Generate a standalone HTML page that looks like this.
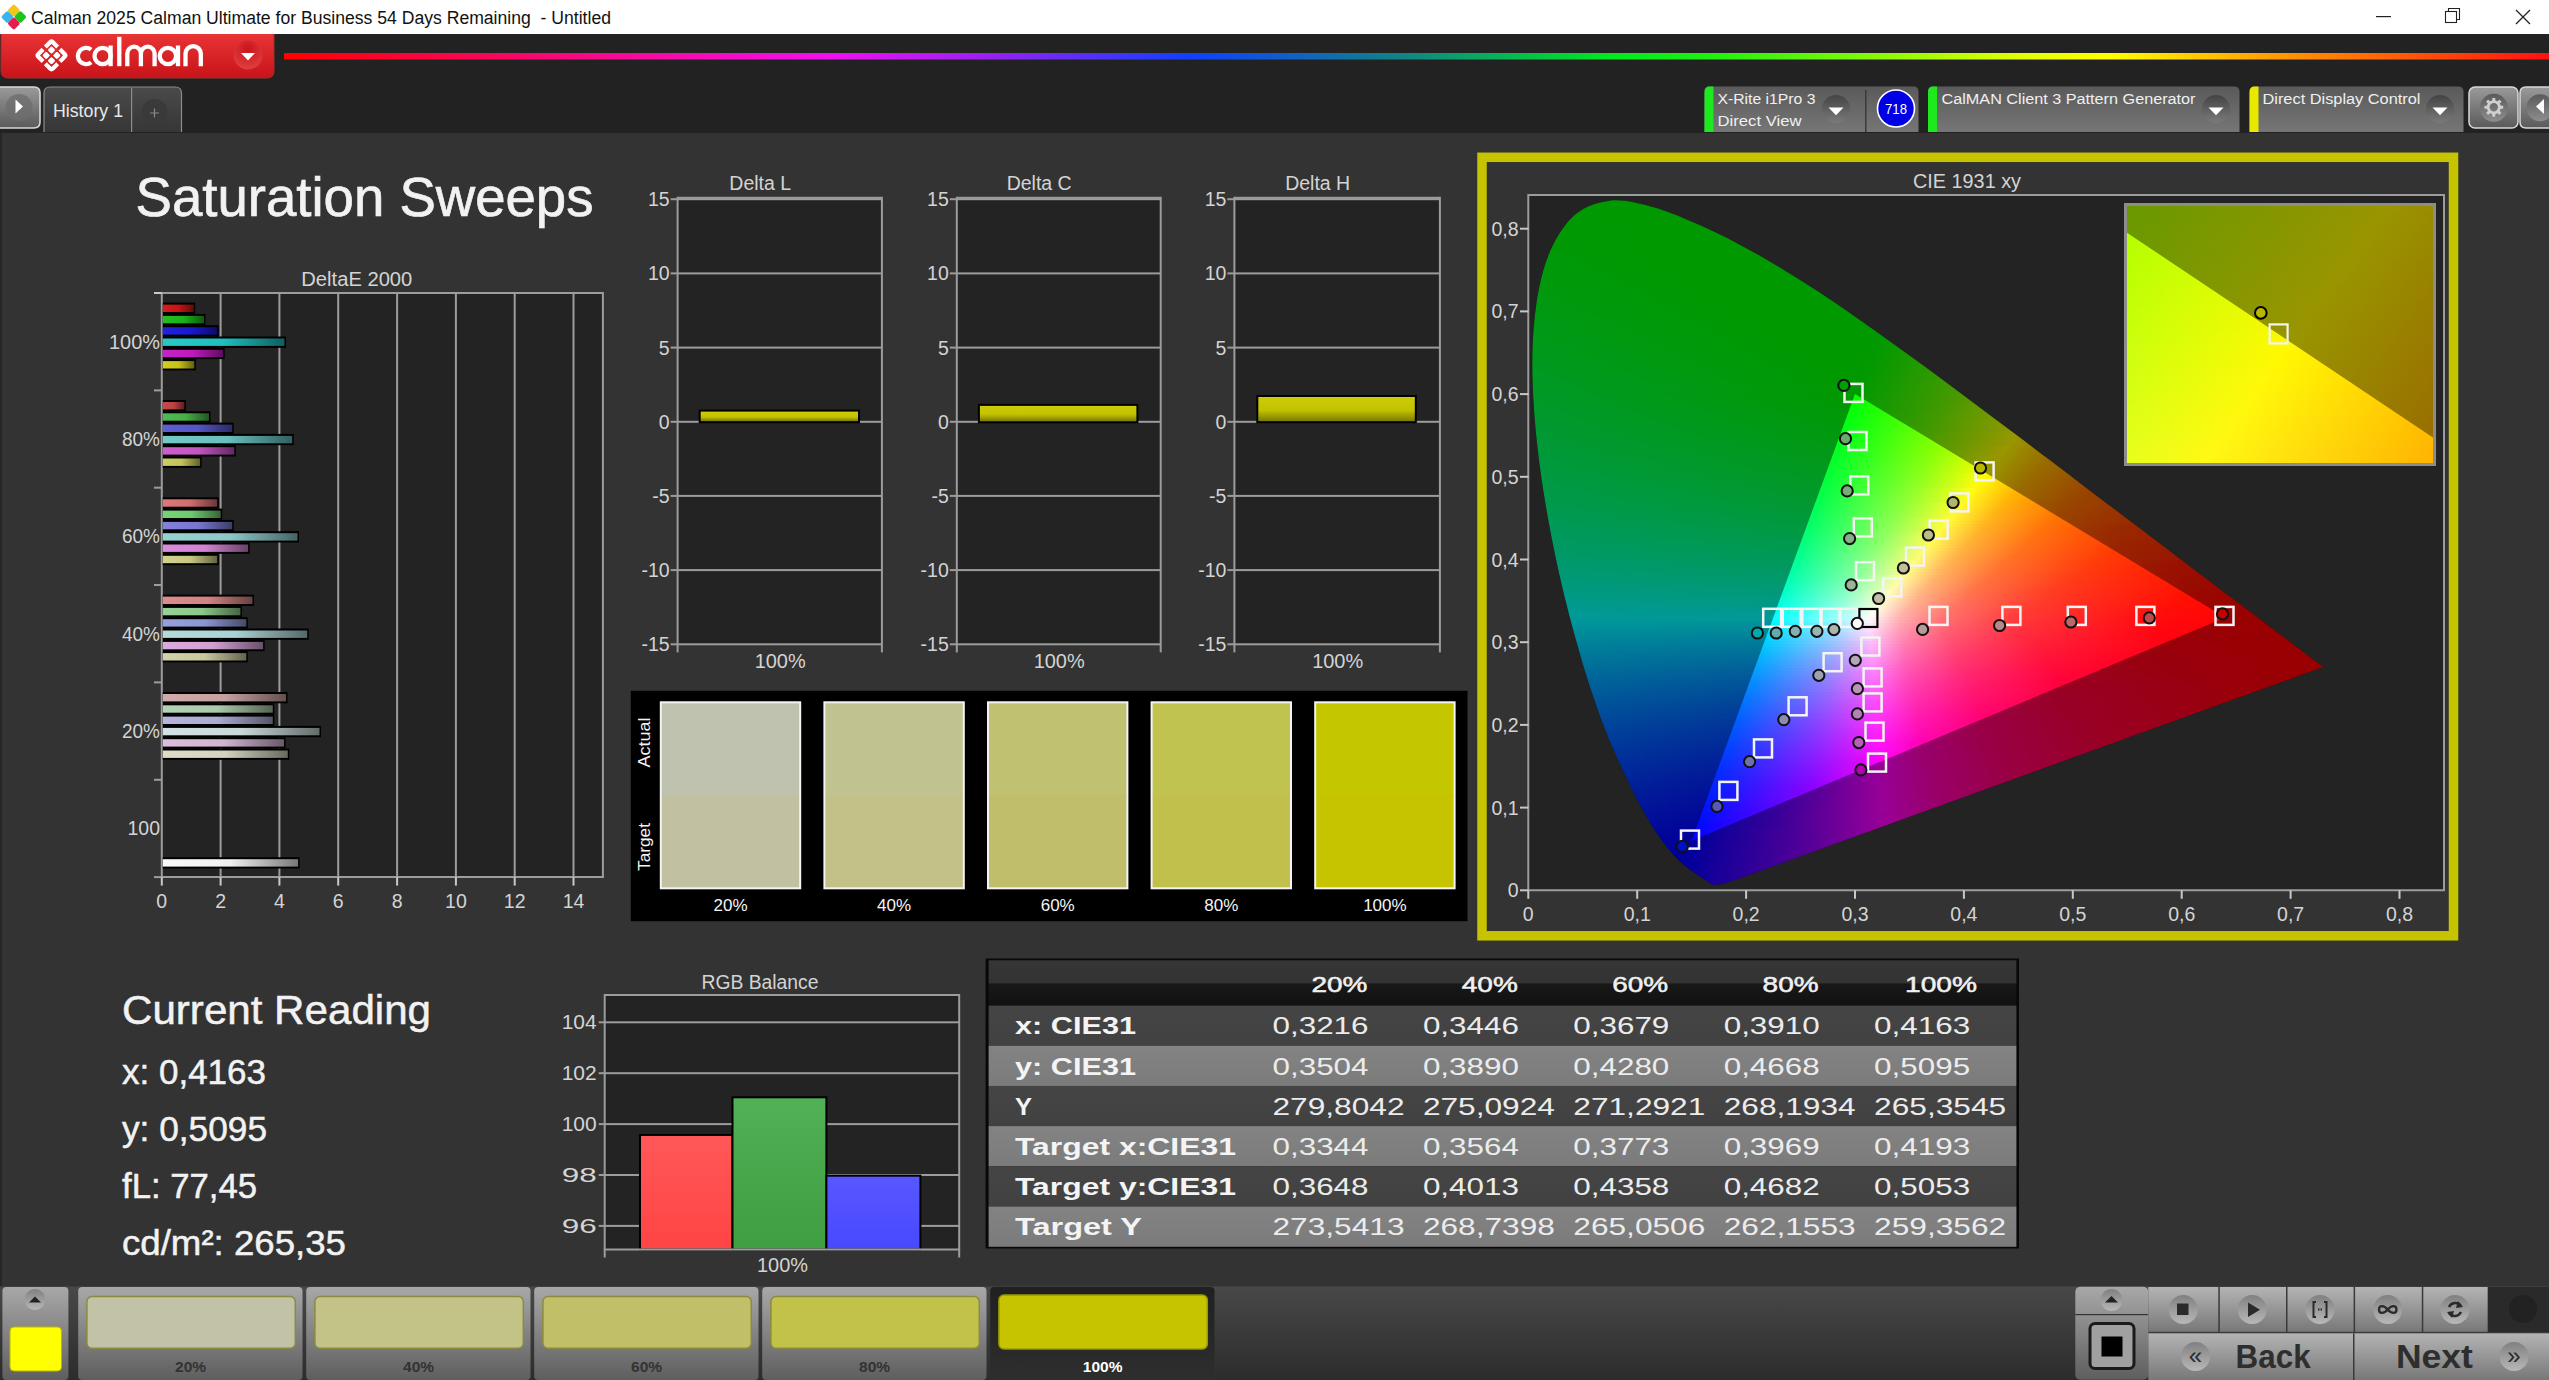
<!DOCTYPE html><html><head><meta charset="utf-8"><style>html,body{margin:0;padding:0;background:#333;overflow:hidden}svg{display:block}text{font-family:"Liberation Sans",sans-serif}</style></head><body><svg width="2549" height="1380" viewBox="0 0 2549 1380" font-family="Liberation Sans, sans-serif"><defs><linearGradient id="redg" x1="0" y1="0" x2="0" y2="1"><stop offset="0" stop-color="#e83434"/><stop offset="1" stop-color="#c8141a"/></linearGradient>
<radialGradient id="redbtn" cx=".5" cy=".3" r=".7"><stop offset="0" stop-color="#c8141a"/><stop offset="1" stop-color="#e04040"/></radialGradient>
<linearGradient id="rainbow" gradientUnits="userSpaceOnUse" x1="284" x2="2549" y1="0" y2="0"><stop offset="0" stop-color="#ff0000"/><stop offset="0.24" stop-color="#f010f0"/><stop offset="0.31" stop-color="#9a20f0"/><stop offset="0.40" stop-color="#1040ff"/><stop offset="0.49" stop-color="#10808a"/><stop offset="0.585" stop-color="#00e820"/><stop offset="0.63" stop-color="#20f010"/><stop offset="0.765" stop-color="#e0ff00"/><stop offset="0.805" stop-color="#ffff00"/><stop offset="0.88" stop-color="#ff9900"/><stop offset="1" stop-color="#ff1010"/></linearGradient>
<linearGradient id="gbtn" x1="0" y1="0" x2="0" y2="1"><stop offset="0" stop-color="#9a9a9a"/><stop offset="1" stop-color="#5a5a5a"/></linearGradient>
<radialGradient id="cbtn" cx=".5" cy=".35" r=".6"><stop offset="0" stop-color="#7a7a7a"/><stop offset="1" stop-color="#555"/></radialGradient>
<linearGradient id="tabg" x1="0" y1="0" x2="0" y2="1"><stop offset="0" stop-color="#4a4a4a"/><stop offset="1" stop-color="#363636"/></linearGradient>
<linearGradient id="pang" x1="0" y1="0" x2="0" y2="1"><stop offset="0" stop-color="#5a5a5a"/><stop offset="1" stop-color="#767676"/></linearGradient>
<linearGradient id="ddg" x1="0" x2="0" y1="0" y2="1"><stop offset="0" stop-color="#444"/><stop offset="1" stop-color="#7a7a7a"/></linearGradient>
<linearGradient id="ddg2" x1="0" x2="0" y1="0" y2="1"><stop offset="0" stop-color="#5a5a5a"/><stop offset="1" stop-color="#8e8e8e"/></linearGradient>
<linearGradient id="b0" x1="0" x2="1" y1="0" y2="0"><stop offset="0" stop-color="rgb(210, 30, 30)"/><stop offset=".5" stop-color="rgb(200, 20, 20)"/><stop offset="1" stop-color="rgb(100, 10, 10)"/></linearGradient>
<linearGradient id="b1" x1="0" x2="1" y1="0" y2="0"><stop offset="0" stop-color="rgb(35, 190, 35)"/><stop offset=".5" stop-color="rgb(25, 180, 25)"/><stop offset="1" stop-color="rgb(12, 90, 12)"/></linearGradient>
<linearGradient id="b2" x1="0" x2="1" y1="0" y2="0"><stop offset="0" stop-color="rgb(35, 35, 220)"/><stop offset=".5" stop-color="rgb(25, 25, 210)"/><stop offset="1" stop-color="rgb(12, 12, 105)"/></linearGradient>
<linearGradient id="b3" x1="0" x2="1" y1="0" y2="0"><stop offset="0" stop-color="rgb(40, 200, 200)"/><stop offset=".5" stop-color="rgb(30, 190, 190)"/><stop offset="1" stop-color="rgb(15, 95, 95)"/></linearGradient>
<linearGradient id="b4" x1="0" x2="1" y1="0" y2="0"><stop offset="0" stop-color="rgb(200, 35, 200)"/><stop offset=".5" stop-color="rgb(190, 25, 190)"/><stop offset="1" stop-color="rgb(95, 12, 95)"/></linearGradient>
<linearGradient id="b5" x1="0" x2="1" y1="0" y2="0"><stop offset="0" stop-color="rgb(210, 205, 35)"/><stop offset=".5" stop-color="rgb(200, 195, 25)"/><stop offset="1" stop-color="rgb(100, 97, 12)"/></linearGradient>
<linearGradient id="b6" x1="0" x2="1" y1="0" y2="0"><stop offset="0" stop-color="rgb(200, 75, 75)"/><stop offset=".5" stop-color="rgb(190, 65, 65)"/><stop offset="1" stop-color="rgb(95, 32, 32)"/></linearGradient>
<linearGradient id="b7" x1="0" x2="1" y1="0" y2="0"><stop offset="0" stop-color="rgb(80, 185, 80)"/><stop offset=".5" stop-color="rgb(70, 175, 70)"/><stop offset="1" stop-color="rgb(35, 87, 35)"/></linearGradient>
<linearGradient id="b8" x1="0" x2="1" y1="0" y2="0"><stop offset="0" stop-color="rgb(95, 95, 210)"/><stop offset=".5" stop-color="rgb(85, 85, 200)"/><stop offset="1" stop-color="rgb(42, 42, 100)"/></linearGradient>
<linearGradient id="b9" x1="0" x2="1" y1="0" y2="0"><stop offset="0" stop-color="rgb(115, 200, 200)"/><stop offset=".5" stop-color="rgb(105, 190, 190)"/><stop offset="1" stop-color="rgb(52, 95, 95)"/></linearGradient>
<linearGradient id="b10" x1="0" x2="1" y1="0" y2="0"><stop offset="0" stop-color="rgb(205, 95, 205)"/><stop offset=".5" stop-color="rgb(195, 85, 195)"/><stop offset="1" stop-color="rgb(97, 42, 97)"/></linearGradient>
<linearGradient id="b11" x1="0" x2="1" y1="0" y2="0"><stop offset="0" stop-color="rgb(205, 205, 100)"/><stop offset=".5" stop-color="rgb(195, 195, 90)"/><stop offset="1" stop-color="rgb(97, 97, 45)"/></linearGradient>
<linearGradient id="b12" x1="0" x2="1" y1="0" y2="0"><stop offset="0" stop-color="rgb(220, 120, 120)"/><stop offset=".5" stop-color="rgb(210, 110, 110)"/><stop offset="1" stop-color="rgb(105, 55, 55)"/></linearGradient>
<linearGradient id="b13" x1="0" x2="1" y1="0" y2="0"><stop offset="0" stop-color="rgb(120, 210, 120)"/><stop offset=".5" stop-color="rgb(110, 200, 110)"/><stop offset="1" stop-color="rgb(55, 100, 55)"/></linearGradient>
<linearGradient id="b14" x1="0" x2="1" y1="0" y2="0"><stop offset="0" stop-color="rgb(130, 130, 220)"/><stop offset=".5" stop-color="rgb(120, 120, 210)"/><stop offset="1" stop-color="rgb(60, 60, 105)"/></linearGradient>
<linearGradient id="b15" x1="0" x2="1" y1="0" y2="0"><stop offset="0" stop-color="rgb(150, 210, 210)"/><stop offset=".5" stop-color="rgb(140, 200, 200)"/><stop offset="1" stop-color="rgb(70, 100, 100)"/></linearGradient>
<linearGradient id="b16" x1="0" x2="1" y1="0" y2="0"><stop offset="0" stop-color="rgb(220, 140, 220)"/><stop offset=".5" stop-color="rgb(210, 130, 210)"/><stop offset="1" stop-color="rgb(105, 65, 105)"/></linearGradient>
<linearGradient id="b17" x1="0" x2="1" y1="0" y2="0"><stop offset="0" stop-color="rgb(210, 210, 140)"/><stop offset=".5" stop-color="rgb(200, 200, 130)"/><stop offset="1" stop-color="rgb(100, 100, 65)"/></linearGradient>
<linearGradient id="b18" x1="0" x2="1" y1="0" y2="0"><stop offset="0" stop-color="rgb(220, 140, 140)"/><stop offset=".5" stop-color="rgb(210, 130, 130)"/><stop offset="1" stop-color="rgb(105, 65, 65)"/></linearGradient>
<linearGradient id="b19" x1="0" x2="1" y1="0" y2="0"><stop offset="0" stop-color="rgb(150, 210, 150)"/><stop offset=".5" stop-color="rgb(140, 200, 140)"/><stop offset="1" stop-color="rgb(70, 100, 70)"/></linearGradient>
<linearGradient id="b20" x1="0" x2="1" y1="0" y2="0"><stop offset="0" stop-color="rgb(150, 160, 220)"/><stop offset=".5" stop-color="rgb(140, 150, 210)"/><stop offset="1" stop-color="rgb(70, 75, 105)"/></linearGradient>
<linearGradient id="b21" x1="0" x2="1" y1="0" y2="0"><stop offset="0" stop-color="rgb(180, 220, 220)"/><stop offset=".5" stop-color="rgb(170, 210, 210)"/><stop offset="1" stop-color="rgb(85, 105, 105)"/></linearGradient>
<linearGradient id="b22" x1="0" x2="1" y1="0" y2="0"><stop offset="0" stop-color="rgb(220, 170, 220)"/><stop offset=".5" stop-color="rgb(210, 160, 210)"/><stop offset="1" stop-color="rgb(105, 80, 105)"/></linearGradient>
<linearGradient id="b23" x1="0" x2="1" y1="0" y2="0"><stop offset="0" stop-color="rgb(210, 210, 170)"/><stop offset=".5" stop-color="rgb(200, 200, 160)"/><stop offset="1" stop-color="rgb(100, 100, 80)"/></linearGradient>
<linearGradient id="b24" x1="0" x2="1" y1="0" y2="0"><stop offset="0" stop-color="rgb(210, 170, 170)"/><stop offset=".5" stop-color="rgb(200, 160, 160)"/><stop offset="1" stop-color="rgb(100, 80, 80)"/></linearGradient>
<linearGradient id="b25" x1="0" x2="1" y1="0" y2="0"><stop offset="0" stop-color="rgb(180, 210, 180)"/><stop offset=".5" stop-color="rgb(170, 200, 170)"/><stop offset="1" stop-color="rgb(85, 100, 85)"/></linearGradient>
<linearGradient id="b26" x1="0" x2="1" y1="0" y2="0"><stop offset="0" stop-color="rgb(180, 180, 220)"/><stop offset=".5" stop-color="rgb(170, 170, 210)"/><stop offset="1" stop-color="rgb(85, 85, 105)"/></linearGradient>
<linearGradient id="b27" x1="0" x2="1" y1="0" y2="0"><stop offset="0" stop-color="rgb(210, 225, 225)"/><stop offset=".5" stop-color="rgb(200, 215, 215)"/><stop offset="1" stop-color="rgb(100, 107, 107)"/></linearGradient>
<linearGradient id="b28" x1="0" x2="1" y1="0" y2="0"><stop offset="0" stop-color="rgb(220, 190, 220)"/><stop offset=".5" stop-color="rgb(210, 180, 210)"/><stop offset="1" stop-color="rgb(105, 90, 105)"/></linearGradient>
<linearGradient id="b29" x1="0" x2="1" y1="0" y2="0"><stop offset="0" stop-color="rgb(220, 220, 200)"/><stop offset=".5" stop-color="rgb(210, 210, 190)"/><stop offset="1" stop-color="rgb(105, 105, 95)"/></linearGradient>
<linearGradient id="b30" x1="0" x2="1" y1="0" y2="0"><stop offset="0" stop-color="rgb(250, 250, 250)"/><stop offset=".5" stop-color="rgb(240, 240, 240)"/><stop offset="1" stop-color="rgb(120, 120, 120)"/></linearGradient>
<linearGradient id="ybar" x1="0" x2="0" y1="0" y2="1"><stop offset="0" stop-color="#cccc08"/><stop offset=".55" stop-color="#c2c200"/><stop offset="1" stop-color="#7a7a00"/></linearGradient>
<clipPath id="locclip"><path d="M1743.4 876.9Q1717.9 886.3 1712.2 884.6C1711.9 884.4 1710.9 883.7 1710.1 883.2C1709.2 882.6 1708.4 882.0 1707.3 881.3C1706.3 880.6 1705.2 879.8 1703.7 878.9C1702.3 878.0 1700.7 876.9 1698.8 875.7C1697.0 874.4 1695.0 873.2 1692.7 871.5C1690.5 869.9 1687.9 868.1 1685.1 865.7C1682.3 863.4 1679.5 861.2 1675.9 857.3C1672.2 853.4 1668.1 849.0 1663.4 842.5C1658.7 836.0 1653.6 828.8 1647.7 818.5C1641.7 808.2 1635.1 796.3 1627.7 780.6C1620.3 764.9 1611.4 746.7 1603.1 724.3C1594.8 702.0 1585.9 675.6 1577.7 646.3C1569.5 617.1 1560.6 582.5 1553.9 549.0C1547.1 515.4 1540.8 478.4 1537.2 445.0C1533.7 411.7 1531.5 378.0 1532.5 348.8C1533.6 319.6 1537.1 291.6 1543.4 269.9C1549.8 248.2 1559.7 230.3 1570.7 218.8C1581.6 207.3 1595.5 202.7 1609.2 200.7C1622.9 198.8 1638.1 203.2 1652.7 207.0C1667.3 210.9 1682.5 217.7 1696.8 223.8C1711.1 230.0 1724.8 236.8 1738.4 243.9C1752.0 251.0 1765.1 258.6 1778.3 266.5C1791.6 274.4 1804.7 282.8 1817.8 291.3C1830.8 299.8 1843.8 308.8 1856.7 317.8C1869.7 326.8 1882.6 336.0 1895.6 345.4C1908.6 354.7 1921.6 364.3 1934.6 373.8C1947.6 383.4 1960.5 393.1 1973.4 402.7C1986.3 412.3 1999.2 422.0 2011.9 431.6C2024.6 441.1 2037.3 450.7 2049.7 460.1C2062.1 469.5 2074.4 478.8 2086.4 487.9C2098.4 497.0 2110.2 505.9 2121.6 514.5C2133.0 523.1 2144.1 531.5 2154.7 539.5C2165.2 547.5 2175.5 555.3 2184.9 562.4C2194.3 569.5 2202.9 576.0 2211.1 582.2C2219.3 588.5 2227.1 594.4 2234.2 599.7C2241.2 605.0 2247.6 609.7 2253.4 614.1C2259.1 618.5 2264.3 622.4 2268.9 625.9C2273.6 629.5 2277.6 632.5 2281.3 635.3C2285.1 638.1 2288.3 640.5 2291.3 642.8C2294.2 645.0 2296.8 647.0 2299.2 648.8C2301.6 650.7 2303.8 652.3 2305.8 653.9C2307.9 655.4 2309.7 656.8 2311.3 658.0C2312.9 659.2 2314.4 660.3 2315.6 661.2C2316.9 662.2 2318.0 663.0 2318.9 663.7C2319.9 664.4 2320.7 665.1 2321.4 665.6C2322.1 666.2 2323.0 666.8 2323.3 667.0Z"/></clipPath>
<clipPath id="triclip"><path d="M2225.3 617.4L1855.0 394.1L1691.6 840.7Z"/></clipPath>
<linearGradient id="cg0" gradientUnits="userSpaceOnUse" x1="1532" x2="2329" y1="0" y2="0"><stop offset="0.000" stop-color="#00ff01"/><stop offset="0.502" stop-color="#05ff00"/><stop offset="0.713" stop-color="#93ff00"/><stop offset="0.843" stop-color="#fffb00"/><stop offset="0.949" stop-color="#ffb100"/><stop offset="0.999" stop-color="#ff9900"/></linearGradient>
<linearGradient id="cg1" gradientUnits="userSpaceOnUse" x1="1532" x2="2329" y1="0" y2="0"><stop offset="0.000" stop-color="#00ff01"/><stop offset="0.499" stop-color="#04ff00"/><stop offset="0.708" stop-color="#91ff00"/><stop offset="0.841" stop-color="#fffb00"/><stop offset="0.946" stop-color="#ffb100"/><stop offset="0.999" stop-color="#ff9700"/></linearGradient>
<linearGradient id="cg2" gradientUnits="userSpaceOnUse" x1="1532" x2="2329" y1="0" y2="0"><stop offset="0.000" stop-color="#00ff02"/><stop offset="0.499" stop-color="#05ff00"/><stop offset="0.708" stop-color="#93ff00"/><stop offset="0.838" stop-color="#fffa00"/><stop offset="0.944" stop-color="#ffb000"/><stop offset="0.999" stop-color="#ff9500"/></linearGradient>
<linearGradient id="cg3" gradientUnits="userSpaceOnUse" x1="1532" x2="2329" y1="0" y2="0"><stop offset="0.000" stop-color="#00ff03"/><stop offset="0.497" stop-color="#04ff00"/><stop offset="0.705" stop-color="#93ff00"/><stop offset="0.836" stop-color="#fffa00"/><stop offset="0.941" stop-color="#ffaf00"/><stop offset="0.999" stop-color="#ff9400"/></linearGradient>
<linearGradient id="cg4" gradientUnits="userSpaceOnUse" x1="1532" x2="2329" y1="0" y2="0"><stop offset="0.000" stop-color="#00ff04"/><stop offset="0.494" stop-color="#04ff00"/><stop offset="0.700" stop-color="#91ff00"/><stop offset="0.831" stop-color="#fffc00"/><stop offset="0.934" stop-color="#ffb200"/><stop offset="0.999" stop-color="#ff9200"/></linearGradient>
<linearGradient id="cg5" gradientUnits="userSpaceOnUse" x1="1532" x2="2329" y1="0" y2="0"><stop offset="0.000" stop-color="#00ff04"/><stop offset="0.494" stop-color="#05ff00"/><stop offset="0.700" stop-color="#93ff00"/><stop offset="0.828" stop-color="#fffb00"/><stop offset="0.931" stop-color="#ffb100"/><stop offset="0.999" stop-color="#ff9100"/></linearGradient>
<linearGradient id="cg6" gradientUnits="userSpaceOnUse" x1="1532" x2="2329" y1="0" y2="0"><stop offset="0.000" stop-color="#00ff05"/><stop offset="0.492" stop-color="#04ff00"/><stop offset="0.695" stop-color="#91ff00"/><stop offset="0.826" stop-color="#fffb00"/><stop offset="0.928" stop-color="#ffb100"/><stop offset="0.999" stop-color="#ff8f00"/></linearGradient>
<linearGradient id="cg7" gradientUnits="userSpaceOnUse" x1="1532" x2="2329" y1="0" y2="0"><stop offset="0.000" stop-color="#00ff06"/><stop offset="0.319" stop-color="#00ff00"/><stop offset="0.492" stop-color="#05ff00"/><stop offset="0.695" stop-color="#93ff00"/><stop offset="0.823" stop-color="#fffa00"/><stop offset="0.926" stop-color="#ffb000"/><stop offset="0.999" stop-color="#ff8d00"/></linearGradient>
<linearGradient id="cg8" gradientUnits="userSpaceOnUse" x1="1532" x2="2329" y1="0" y2="0"><stop offset="0.000" stop-color="#00ff07"/><stop offset="0.213" stop-color="#00ff00"/><stop offset="0.489" stop-color="#04ff00"/><stop offset="0.693" stop-color="#92ff00"/><stop offset="0.821" stop-color="#fffa00"/><stop offset="0.923" stop-color="#ffaf00"/><stop offset="0.999" stop-color="#ff8c00"/></linearGradient>
<linearGradient id="cg9" gradientUnits="userSpaceOnUse" x1="1532" x2="2329" y1="0" y2="0"><stop offset="0.000" stop-color="#00ff08"/><stop offset="0.183" stop-color="#00ff00"/><stop offset="0.489" stop-color="#05ff00"/><stop offset="0.690" stop-color="#92ff00"/><stop offset="0.816" stop-color="#fffc00"/><stop offset="0.916" stop-color="#ffb200"/><stop offset="0.999" stop-color="#ff8a00"/></linearGradient>
<linearGradient id="cg10" gradientUnits="userSpaceOnUse" x1="1532" x2="2329" y1="0" y2="0"><stop offset="0.000" stop-color="#00ff08"/><stop offset="0.168" stop-color="#00ff00"/><stop offset="0.487" stop-color="#04ff00"/><stop offset="0.688" stop-color="#92ff00"/><stop offset="0.813" stop-color="#fffb00"/><stop offset="0.913" stop-color="#ffb100"/><stop offset="0.999" stop-color="#ff8900"/></linearGradient>
<linearGradient id="cg11" gradientUnits="userSpaceOnUse" x1="1532" x2="2329" y1="0" y2="0"><stop offset="0.000" stop-color="#00ff09"/><stop offset="0.161" stop-color="#00ff00"/><stop offset="0.487" stop-color="#05ff00"/><stop offset="0.685" stop-color="#92ff00"/><stop offset="0.811" stop-color="#fffb00"/><stop offset="0.911" stop-color="#ffb100"/><stop offset="0.999" stop-color="#ff8700"/></linearGradient>
<linearGradient id="cg12" gradientUnits="userSpaceOnUse" x1="1532" x2="2329" y1="0" y2="0"><stop offset="0.000" stop-color="#00ff0a"/><stop offset="0.161" stop-color="#00ff00"/><stop offset="0.484" stop-color="#04ff00"/><stop offset="0.683" stop-color="#92ff00"/><stop offset="0.808" stop-color="#fffa00"/><stop offset="0.908" stop-color="#ffb000"/><stop offset="0.999" stop-color="#ff8600"/></linearGradient>
<linearGradient id="cg13" gradientUnits="userSpaceOnUse" x1="1532" x2="2329" y1="0" y2="0"><stop offset="0.000" stop-color="#00ff0b"/><stop offset="0.158" stop-color="#00ff00"/><stop offset="0.482" stop-color="#04ff00"/><stop offset="0.680" stop-color="#92ff00"/><stop offset="0.806" stop-color="#fffa00"/><stop offset="0.906" stop-color="#ffaf00"/><stop offset="0.999" stop-color="#ff8400"/></linearGradient>
<linearGradient id="cg14" gradientUnits="userSpaceOnUse" x1="1532" x2="2329" y1="0" y2="0"><stop offset="0.000" stop-color="#00ff0c"/><stop offset="0.161" stop-color="#00ff00"/><stop offset="0.482" stop-color="#05ff00"/><stop offset="0.678" stop-color="#92ff00"/><stop offset="0.801" stop-color="#fffc00"/><stop offset="0.898" stop-color="#ffb200"/><stop offset="0.999" stop-color="#ff8200"/></linearGradient>
<linearGradient id="cg15" gradientUnits="userSpaceOnUse" x1="1532" x2="2329" y1="0" y2="0"><stop offset="0.000" stop-color="#00ff0d"/><stop offset="0.163" stop-color="#00ff00"/><stop offset="0.479" stop-color="#04ff00"/><stop offset="0.675" stop-color="#92ff00"/><stop offset="0.798" stop-color="#fffb00"/><stop offset="0.896" stop-color="#ffb100"/><stop offset="0.999" stop-color="#ff8100"/></linearGradient>
<linearGradient id="cg16" gradientUnits="userSpaceOnUse" x1="1532" x2="2329" y1="0" y2="0"><stop offset="0.000" stop-color="#00ff0d"/><stop offset="0.168" stop-color="#00ff00"/><stop offset="0.479" stop-color="#05ff00"/><stop offset="0.673" stop-color="#92ff00"/><stop offset="0.795" stop-color="#fffb00"/><stop offset="0.893" stop-color="#ffb000"/><stop offset="0.999" stop-color="#ff7f00"/></linearGradient>
<linearGradient id="cg17" gradientUnits="userSpaceOnUse" x1="1532" x2="2329" y1="0" y2="0"><stop offset="0.000" stop-color="#00ff0e"/><stop offset="0.171" stop-color="#00ff00"/><stop offset="0.477" stop-color="#04ff00"/><stop offset="0.670" stop-color="#92ff00"/><stop offset="0.793" stop-color="#fffa00"/><stop offset="0.891" stop-color="#ffb000"/><stop offset="0.999" stop-color="#ff7e00"/></linearGradient>
<linearGradient id="cg18" gradientUnits="userSpaceOnUse" x1="1532" x2="2329" y1="0" y2="0"><stop offset="0.000" stop-color="#00ff0f"/><stop offset="0.176" stop-color="#00ff00"/><stop offset="0.477" stop-color="#05ff00"/><stop offset="0.670" stop-color="#94ff00"/><stop offset="0.788" stop-color="#fffc00"/><stop offset="0.883" stop-color="#ffb200"/><stop offset="0.999" stop-color="#ff7c00"/></linearGradient>
<linearGradient id="cg19" gradientUnits="userSpaceOnUse" x1="1532" x2="2329" y1="0" y2="0"><stop offset="0.000" stop-color="#00ff10"/><stop offset="0.178" stop-color="#00ff00"/><stop offset="0.474" stop-color="#04ff00"/><stop offset="0.665" stop-color="#91ff00"/><stop offset="0.785" stop-color="#fffc00"/><stop offset="0.881" stop-color="#ffb200"/><stop offset="0.999" stop-color="#ff7b00"/></linearGradient>
<linearGradient id="cg20" gradientUnits="userSpaceOnUse" x1="1532" x2="2329" y1="0" y2="0"><stop offset="0.000" stop-color="#00ff11"/><stop offset="0.183" stop-color="#00ff00"/><stop offset="0.472" stop-color="#04ff00"/><stop offset="0.662" stop-color="#91ff00"/><stop offset="0.783" stop-color="#fffb00"/><stop offset="0.878" stop-color="#ffb100"/><stop offset="0.999" stop-color="#ff7900"/></linearGradient>
<linearGradient id="cg21" gradientUnits="userSpaceOnUse" x1="1532" x2="2329" y1="0" y2="0"><stop offset="0.000" stop-color="#00ff12"/><stop offset="0.188" stop-color="#00ff00"/><stop offset="0.472" stop-color="#05ff00"/><stop offset="0.660" stop-color="#91ff00"/><stop offset="0.780" stop-color="#fffb00"/><stop offset="0.876" stop-color="#ffb000"/><stop offset="0.999" stop-color="#ff7800"/></linearGradient>
<linearGradient id="cg22" gradientUnits="userSpaceOnUse" x1="1532" x2="2329" y1="0" y2="0"><stop offset="0.000" stop-color="#00ff13"/><stop offset="0.193" stop-color="#00ff00"/><stop offset="0.469" stop-color="#04ff00"/><stop offset="0.657" stop-color="#91ff00"/><stop offset="0.778" stop-color="#fffa00"/><stop offset="0.873" stop-color="#ffb000"/><stop offset="0.999" stop-color="#ff7700"/></linearGradient>
<linearGradient id="cg23" gradientUnits="userSpaceOnUse" x1="1532" x2="2329" y1="0" y2="0"><stop offset="0.000" stop-color="#00ff14"/><stop offset="0.198" stop-color="#00ff00"/><stop offset="0.469" stop-color="#05ff00"/><stop offset="0.657" stop-color="#93ff00"/><stop offset="0.773" stop-color="#fffc00"/><stop offset="0.866" stop-color="#ffb200"/><stop offset="0.999" stop-color="#ff7500"/></linearGradient>
<linearGradient id="cg24" gradientUnits="userSpaceOnUse" x1="1532" x2="2329" y1="0" y2="0"><stop offset="0.000" stop-color="#00ff15"/><stop offset="0.203" stop-color="#00ff00"/><stop offset="0.467" stop-color="#04ff00"/><stop offset="0.652" stop-color="#91ff00"/><stop offset="0.770" stop-color="#fffc00"/><stop offset="0.863" stop-color="#ffb200"/><stop offset="0.999" stop-color="#ff7400"/></linearGradient>
<linearGradient id="cg25" gradientUnits="userSpaceOnUse" x1="1532" x2="2329" y1="0" y2="0"><stop offset="0.000" stop-color="#00ff15"/><stop offset="0.208" stop-color="#00ff00"/><stop offset="0.467" stop-color="#05ff00"/><stop offset="0.652" stop-color="#93ff00"/><stop offset="0.768" stop-color="#fffb00"/><stop offset="0.861" stop-color="#ffb100"/><stop offset="0.999" stop-color="#ff7200"/></linearGradient>
<linearGradient id="cg26" gradientUnits="userSpaceOnUse" x1="1532" x2="2329" y1="0" y2="0"><stop offset="0.000" stop-color="#00ff16"/><stop offset="0.213" stop-color="#00ff00"/><stop offset="0.464" stop-color="#04ff00"/><stop offset="0.650" stop-color="#93ff00"/><stop offset="0.765" stop-color="#fffb00"/><stop offset="0.858" stop-color="#ffb000"/><stop offset="0.999" stop-color="#ff7100"/></linearGradient>
<linearGradient id="cg27" gradientUnits="userSpaceOnUse" x1="1532" x2="2329" y1="0" y2="0"><stop offset="0.000" stop-color="#00ff17"/><stop offset="0.218" stop-color="#00ff00"/><stop offset="0.464" stop-color="#05ff00"/><stop offset="0.647" stop-color="#93ff00"/><stop offset="0.763" stop-color="#fffa00"/><stop offset="0.856" stop-color="#ffb000"/><stop offset="0.999" stop-color="#ff6f00"/></linearGradient>
<linearGradient id="cg28" gradientUnits="userSpaceOnUse" x1="1532" x2="2329" y1="0" y2="0"><stop offset="0.000" stop-color="#00ff18"/><stop offset="0.226" stop-color="#00ff00"/><stop offset="0.462" stop-color="#04ff00"/><stop offset="0.645" stop-color="#93ff00"/><stop offset="0.758" stop-color="#fffc00"/><stop offset="0.848" stop-color="#ffb200"/><stop offset="0.989" stop-color="#ff7100"/><stop offset="0.999" stop-color="#ff6e00"/></linearGradient>
<linearGradient id="cg29" gradientUnits="userSpaceOnUse" x1="1532" x2="2329" y1="0" y2="0"><stop offset="0.000" stop-color="#00ff19"/><stop offset="0.231" stop-color="#00ff00"/><stop offset="0.459" stop-color="#04ff00"/><stop offset="0.640" stop-color="#90ff00"/><stop offset="0.755" stop-color="#fffc00"/><stop offset="0.846" stop-color="#ffb200"/><stop offset="0.986" stop-color="#ff7100"/><stop offset="0.999" stop-color="#ff6c00"/></linearGradient>
<linearGradient id="cg30" gradientUnits="userSpaceOnUse" x1="1532" x2="2329" y1="0" y2="0"><stop offset="0.000" stop-color="#00ff1a"/><stop offset="0.236" stop-color="#00ff00"/><stop offset="0.459" stop-color="#05ff00"/><stop offset="0.640" stop-color="#93ff00"/><stop offset="0.753" stop-color="#fffb00"/><stop offset="0.843" stop-color="#ffb100"/><stop offset="0.984" stop-color="#ff7000"/><stop offset="0.999" stop-color="#ff6b00"/></linearGradient>
<linearGradient id="cg31" gradientUnits="userSpaceOnUse" x1="1532" x2="2329" y1="0" y2="0"><stop offset="0.000" stop-color="#00ff1b"/><stop offset="0.241" stop-color="#00ff00"/><stop offset="0.457" stop-color="#04ff00"/><stop offset="0.637" stop-color="#92ff00"/><stop offset="0.750" stop-color="#fffb00"/><stop offset="0.841" stop-color="#ffb000"/><stop offset="0.981" stop-color="#ff6f00"/><stop offset="0.999" stop-color="#ff6a00"/></linearGradient>
<linearGradient id="cg32" gradientUnits="userSpaceOnUse" x1="1532" x2="2329" y1="0" y2="0"><stop offset="0.000" stop-color="#00ff1c"/><stop offset="0.248" stop-color="#00ff00"/><stop offset="0.457" stop-color="#05ff00"/><stop offset="0.635" stop-color="#92ff00"/><stop offset="0.748" stop-color="#fffa00"/><stop offset="0.838" stop-color="#ffb000"/><stop offset="0.976" stop-color="#ff7000"/><stop offset="0.999" stop-color="#ff6800"/></linearGradient>
<linearGradient id="cg33" gradientUnits="userSpaceOnUse" x1="1532" x2="2329" y1="0" y2="0"><stop offset="0.000" stop-color="#00ff1d"/><stop offset="0.253" stop-color="#00ff00"/><stop offset="0.454" stop-color="#04ff00"/><stop offset="0.632" stop-color="#92ff00"/><stop offset="0.743" stop-color="#fffc00"/><stop offset="0.831" stop-color="#ffb200"/><stop offset="0.966" stop-color="#ff7200"/><stop offset="0.999" stop-color="#ff6700"/></linearGradient>
<linearGradient id="cg34" gradientUnits="userSpaceOnUse" x1="1532" x2="2329" y1="0" y2="0"><stop offset="0.000" stop-color="#00ff1e"/><stop offset="0.258" stop-color="#00ff00"/><stop offset="0.454" stop-color="#05ff00"/><stop offset="0.630" stop-color="#92ff00"/><stop offset="0.740" stop-color="#fffc00"/><stop offset="0.828" stop-color="#ffb200"/><stop offset="0.964" stop-color="#ff7100"/><stop offset="0.999" stop-color="#ff6500"/></linearGradient>
<linearGradient id="cg35" gradientUnits="userSpaceOnUse" x1="1532" x2="2329" y1="0" y2="0"><stop offset="0.000" stop-color="#00ff1f"/><stop offset="0.263" stop-color="#00ff00"/><stop offset="0.452" stop-color="#04ff00"/><stop offset="0.627" stop-color="#92ff00"/><stop offset="0.738" stop-color="#fffb00"/><stop offset="0.826" stop-color="#ffb100"/><stop offset="0.961" stop-color="#ff7000"/><stop offset="0.999" stop-color="#ff6400"/></linearGradient>
<linearGradient id="cg36" gradientUnits="userSpaceOnUse" x1="1532" x2="2329" y1="0" y2="0"><stop offset="0.000" stop-color="#00ff20"/><stop offset="0.271" stop-color="#00ff00"/><stop offset="0.449" stop-color="#04ff00"/><stop offset="0.625" stop-color="#92ff00"/><stop offset="0.735" stop-color="#fffa00"/><stop offset="0.823" stop-color="#ffb000"/><stop offset="0.959" stop-color="#ff7000"/><stop offset="0.999" stop-color="#ff6300"/></linearGradient>
<linearGradient id="cg37" gradientUnits="userSpaceOnUse" x1="1532" x2="2329" y1="0" y2="0"><stop offset="0.000" stop-color="#00ff21"/><stop offset="0.276" stop-color="#00ff00"/><stop offset="0.449" stop-color="#05ff00"/><stop offset="0.622" stop-color="#92ff00"/><stop offset="0.733" stop-color="#fffa00"/><stop offset="0.821" stop-color="#ffb000"/><stop offset="0.956" stop-color="#ff6f00"/><stop offset="0.999" stop-color="#ff6100"/></linearGradient>
<linearGradient id="cg38" gradientUnits="userSpaceOnUse" x1="1532" x2="2329" y1="0" y2="0"><stop offset="0.000" stop-color="#00ff22"/><stop offset="0.281" stop-color="#00ff00"/><stop offset="0.447" stop-color="#04ff00"/><stop offset="0.620" stop-color="#92ff00"/><stop offset="0.728" stop-color="#fffc00"/><stop offset="0.813" stop-color="#ffb200"/><stop offset="0.946" stop-color="#ff7100"/><stop offset="0.999" stop-color="#ff6000"/></linearGradient>
<linearGradient id="cg39" gradientUnits="userSpaceOnUse" x1="1532" x2="2329" y1="0" y2="0"><stop offset="0.000" stop-color="#00ff23"/><stop offset="0.289" stop-color="#00ff00"/><stop offset="0.447" stop-color="#05ff00"/><stop offset="0.617" stop-color="#92ff00"/><stop offset="0.725" stop-color="#fffc00"/><stop offset="0.811" stop-color="#ffb200"/><stop offset="0.944" stop-color="#ff7100"/><stop offset="0.999" stop-color="#ff5f00"/></linearGradient>
<linearGradient id="cg40" gradientUnits="userSpaceOnUse" x1="1532" x2="2329" y1="0" y2="0"><stop offset="0.000" stop-color="#00ff25"/><stop offset="0.294" stop-color="#00ff00"/><stop offset="0.444" stop-color="#04ff00"/><stop offset="0.615" stop-color="#92ff00"/><stop offset="0.723" stop-color="#fffb00"/><stop offset="0.808" stop-color="#ffb100"/><stop offset="0.941" stop-color="#ff7000"/><stop offset="0.999" stop-color="#ff5d00"/></linearGradient>
<linearGradient id="cg41" gradientUnits="userSpaceOnUse" x1="1532" x2="2329" y1="0" y2="0"><stop offset="0.000" stop-color="#00ff26"/><stop offset="0.299" stop-color="#00ff00"/><stop offset="0.444" stop-color="#05ff00"/><stop offset="0.612" stop-color="#91ff00"/><stop offset="0.720" stop-color="#fffa00"/><stop offset="0.806" stop-color="#ffb000"/><stop offset="0.936" stop-color="#ff7000"/><stop offset="0.999" stop-color="#ff5c00"/></linearGradient>
<linearGradient id="cg42" gradientUnits="userSpaceOnUse" x1="1532" x2="2329" y1="0" y2="0"><stop offset="0.000" stop-color="#00ff27"/><stop offset="0.306" stop-color="#00ff00"/><stop offset="0.442" stop-color="#04ff00"/><stop offset="0.610" stop-color="#91ff00"/><stop offset="0.718" stop-color="#fffa00"/><stop offset="0.803" stop-color="#ffb000"/><stop offset="0.934" stop-color="#ff7000"/><stop offset="0.999" stop-color="#ff5b00"/></linearGradient>
<linearGradient id="cg43" gradientUnits="userSpaceOnUse" x1="1532" x2="2329" y1="0" y2="0"><stop offset="0.000" stop-color="#00ff28"/><stop offset="0.311" stop-color="#00ff00"/><stop offset="0.442" stop-color="#05ff00"/><stop offset="0.610" stop-color="#94ff00"/><stop offset="0.713" stop-color="#fffc00"/><stop offset="0.795" stop-color="#ffb200"/><stop offset="0.923" stop-color="#ff7200"/><stop offset="0.999" stop-color="#ff5900"/></linearGradient>
<linearGradient id="cg44" gradientUnits="userSpaceOnUse" x1="1532" x2="2329" y1="0" y2="0"><stop offset="0.000" stop-color="#00ff29"/><stop offset="0.316" stop-color="#00ff00"/><stop offset="0.439" stop-color="#04ff00"/><stop offset="0.605" stop-color="#91ff00"/><stop offset="0.710" stop-color="#fffc00"/><stop offset="0.793" stop-color="#ffb200"/><stop offset="0.921" stop-color="#ff7100"/><stop offset="0.999" stop-color="#ff5800"/></linearGradient>
<linearGradient id="cg45" gradientUnits="userSpaceOnUse" x1="1532" x2="2329" y1="0" y2="0"><stop offset="0.000" stop-color="#00ff2a"/><stop offset="0.324" stop-color="#00ff00"/><stop offset="0.437" stop-color="#04ff00"/><stop offset="0.602" stop-color="#91ff00"/><stop offset="0.708" stop-color="#fffb00"/><stop offset="0.790" stop-color="#ffb100"/><stop offset="0.918" stop-color="#ff7000"/><stop offset="0.999" stop-color="#ff5700"/></linearGradient>
<linearGradient id="cg46" gradientUnits="userSpaceOnUse" x1="1532" x2="2329" y1="0" y2="0"><stop offset="0.000" stop-color="#00ff2b"/><stop offset="0.329" stop-color="#00ff00"/><stop offset="0.437" stop-color="#05ff00"/><stop offset="0.602" stop-color="#93ff00"/><stop offset="0.705" stop-color="#fffa00"/><stop offset="0.788" stop-color="#ffb000"/><stop offset="0.916" stop-color="#ff7000"/><stop offset="0.999" stop-color="#ff5500"/></linearGradient>
<linearGradient id="cg47" gradientUnits="userSpaceOnUse" x1="1532" x2="2329" y1="0" y2="0"><stop offset="0.000" stop-color="#00ff2c"/><stop offset="0.336" stop-color="#00ff00"/><stop offset="0.434" stop-color="#04ff00"/><stop offset="0.597" stop-color="#91ff00"/><stop offset="0.700" stop-color="#fffd00"/><stop offset="0.780" stop-color="#ffb300"/><stop offset="0.906" stop-color="#ff7200"/><stop offset="0.999" stop-color="#ff5400"/></linearGradient>
<linearGradient id="cg48" gradientUnits="userSpaceOnUse" x1="1532" x2="2329" y1="0" y2="0"><stop offset="0.000" stop-color="#00ff2e"/><stop offset="0.341" stop-color="#00ff00"/><stop offset="0.434" stop-color="#05ff00"/><stop offset="0.597" stop-color="#93ff00"/><stop offset="0.698" stop-color="#fffc00"/><stop offset="0.778" stop-color="#ffb300"/><stop offset="0.903" stop-color="#ff7100"/><stop offset="0.999" stop-color="#ff5300"/></linearGradient>
<linearGradient id="cg49" gradientUnits="userSpaceOnUse" x1="1532" x2="2329" y1="0" y2="0"><stop offset="0.000" stop-color="#00ff2f"/><stop offset="0.346" stop-color="#00ff00"/><stop offset="0.432" stop-color="#04ff00"/><stop offset="0.592" stop-color="#90ff00"/><stop offset="0.695" stop-color="#fffb00"/><stop offset="0.775" stop-color="#ffb200"/><stop offset="0.901" stop-color="#ff7100"/><stop offset="0.999" stop-color="#ff5200"/></linearGradient>
<linearGradient id="cg50" gradientUnits="userSpaceOnUse" x1="1532" x2="2329" y1="0" y2="0"><stop offset="0.000" stop-color="#00ff30"/><stop offset="0.351" stop-color="#00ff00"/><stop offset="0.432" stop-color="#05ff00"/><stop offset="0.592" stop-color="#93ff00"/><stop offset="0.693" stop-color="#fffb00"/><stop offset="0.773" stop-color="#ffb100"/><stop offset="0.896" stop-color="#ff7100"/><stop offset="0.999" stop-color="#ff5000"/></linearGradient>
<linearGradient id="cg51" gradientUnits="userSpaceOnUse" x1="1532" x2="2329" y1="0" y2="0"><stop offset="0.000" stop-color="#00ff31"/><stop offset="0.359" stop-color="#00ff00"/><stop offset="0.429" stop-color="#04ff00"/><stop offset="0.590" stop-color="#93ff00"/><stop offset="0.690" stop-color="#fffa00"/><stop offset="0.770" stop-color="#ffb000"/><stop offset="0.893" stop-color="#ff7000"/><stop offset="0.999" stop-color="#ff4f00"/></linearGradient>
<linearGradient id="cg52" gradientUnits="userSpaceOnUse" x1="1532" x2="2329" y1="0" y2="0"><stop offset="0.000" stop-color="#00ff32"/><stop offset="0.364" stop-color="#00ff00"/><stop offset="0.429" stop-color="#05ff00"/><stop offset="0.587" stop-color="#93ff00"/><stop offset="0.685" stop-color="#fffd00"/><stop offset="0.763" stop-color="#ffb300"/><stop offset="0.883" stop-color="#ff7200"/><stop offset="0.999" stop-color="#ff4e00"/></linearGradient>
<linearGradient id="cg53" gradientUnits="userSpaceOnUse" x1="1532" x2="2329" y1="0" y2="0"><stop offset="0.000" stop-color="#00ff34"/><stop offset="0.371" stop-color="#00ff00"/><stop offset="0.427" stop-color="#05ff00"/><stop offset="0.585" stop-color="#93ff00"/><stop offset="0.683" stop-color="#fffc00"/><stop offset="0.760" stop-color="#ffb300"/><stop offset="0.881" stop-color="#ff7200"/><stop offset="0.999" stop-color="#ff4d00"/></linearGradient>
<linearGradient id="cg54" gradientUnits="userSpaceOnUse" x1="1532" x2="2329" y1="0" y2="0"><stop offset="0.000" stop-color="#00ff35"/><stop offset="0.376" stop-color="#00ff00"/><stop offset="0.427" stop-color="#06ff00"/><stop offset="0.582" stop-color="#92ff00"/><stop offset="0.680" stop-color="#fffb00"/><stop offset="0.758" stop-color="#ffb200"/><stop offset="0.878" stop-color="#ff7100"/><stop offset="0.999" stop-color="#ff4b00"/></linearGradient>
<linearGradient id="cg55" gradientUnits="userSpaceOnUse" x1="1532" x2="2329" y1="0" y2="0"><stop offset="0.000" stop-color="#00ff36"/><stop offset="0.381" stop-color="#00ff00"/><stop offset="0.424" stop-color="#05ff00"/><stop offset="0.580" stop-color="#92ff00"/><stop offset="0.678" stop-color="#fffb00"/><stop offset="0.755" stop-color="#ffb100"/><stop offset="0.876" stop-color="#ff7000"/><stop offset="0.999" stop-color="#ff4a00"/></linearGradient>
<linearGradient id="cg56" gradientUnits="userSpaceOnUse" x1="1532" x2="2329" y1="0" y2="0"><stop offset="0.000" stop-color="#00ff37"/><stop offset="0.389" stop-color="#00ff00"/><stop offset="0.424" stop-color="#06ff00"/><stop offset="0.577" stop-color="#92ff00"/><stop offset="0.675" stop-color="#fffa00"/><stop offset="0.753" stop-color="#ffb000"/><stop offset="0.873" stop-color="#ff7000"/><stop offset="0.999" stop-color="#ff4900"/></linearGradient>
<linearGradient id="cg57" gradientUnits="userSpaceOnUse" x1="1532" x2="2329" y1="0" y2="0"><stop offset="0.000" stop-color="#00ff39"/><stop offset="0.394" stop-color="#00ff00"/><stop offset="0.424" stop-color="#07ff00"/><stop offset="0.577" stop-color="#95ff00"/><stop offset="0.670" stop-color="#fffd00"/><stop offset="0.748" stop-color="#ffb100"/><stop offset="0.866" stop-color="#ff7100"/><stop offset="0.999" stop-color="#ff4800"/></linearGradient>
<linearGradient id="cg58" gradientUnits="userSpaceOnUse" x1="1532" x2="2329" y1="0" y2="0"><stop offset="0.000" stop-color="#00ff3a"/><stop offset="0.399" stop-color="#00ff00"/><stop offset="0.424" stop-color="#08ff00"/><stop offset="0.575" stop-color="#95ff00"/><stop offset="0.668" stop-color="#fffc00"/><stop offset="0.743" stop-color="#ffb300"/><stop offset="0.861" stop-color="#ff7100"/><stop offset="0.999" stop-color="#ff4600"/></linearGradient>
<linearGradient id="cg59" gradientUnits="userSpaceOnUse" x1="1532" x2="2329" y1="0" y2="0"><stop offset="0.000" stop-color="#00ff3b"/><stop offset="0.407" stop-color="#00ff00"/><stop offset="0.507" stop-color="#53ff00"/><stop offset="0.642" stop-color="#e6ff00"/><stop offset="0.665" stop-color="#fffb00"/><stop offset="0.740" stop-color="#ffb200"/><stop offset="0.856" stop-color="#ff7200"/><stop offset="0.999" stop-color="#ff4500"/></linearGradient>
<linearGradient id="cg60" gradientUnits="userSpaceOnUse" x1="1532" x2="2329" y1="0" y2="0"><stop offset="0.000" stop-color="#00ff3d"/><stop offset="0.412" stop-color="#00ff00"/><stop offset="0.562" stop-color="#8cff00"/><stop offset="0.662" stop-color="#fffb00"/><stop offset="0.738" stop-color="#ffb100"/><stop offset="0.853" stop-color="#ff7100"/><stop offset="0.999" stop-color="#ff4400"/></linearGradient>
<linearGradient id="cg61" gradientUnits="userSpaceOnUse" x1="1532" x2="2329" y1="0" y2="0"><stop offset="0.000" stop-color="#00ff3e"/><stop offset="0.414" stop-color="#04ff00"/><stop offset="0.565" stop-color="#92ff00"/><stop offset="0.660" stop-color="#fffa00"/><stop offset="0.735" stop-color="#ffb000"/><stop offset="0.851" stop-color="#ff7000"/><stop offset="0.999" stop-color="#ff4300"/></linearGradient>
<linearGradient id="cg62" gradientUnits="userSpaceOnUse" x1="1532" x2="2329" y1="0" y2="0"><stop offset="0.000" stop-color="#00ff3f"/><stop offset="0.414" stop-color="#05ff00"/><stop offset="0.562" stop-color="#92ff00"/><stop offset="0.655" stop-color="#fffd00"/><stop offset="0.728" stop-color="#ffb300"/><stop offset="0.841" stop-color="#ff7300"/><stop offset="0.999" stop-color="#ff4100"/></linearGradient>
<linearGradient id="cg63" gradientUnits="userSpaceOnUse" x1="1532" x2="2329" y1="0" y2="0"><stop offset="0.000" stop-color="#00ff41"/><stop offset="0.412" stop-color="#04ff00"/><stop offset="0.560" stop-color="#91ff00"/><stop offset="0.652" stop-color="#fffc00"/><stop offset="0.725" stop-color="#ffb300"/><stop offset="0.838" stop-color="#ff7200"/><stop offset="0.999" stop-color="#ff4000"/></linearGradient>
<linearGradient id="cg64" gradientUnits="userSpaceOnUse" x1="1532" x2="2329" y1="0" y2="0"><stop offset="0.000" stop-color="#00ff42"/><stop offset="0.402" stop-color="#00ff01"/><stop offset="0.522" stop-color="#6cff00"/><stop offset="0.650" stop-color="#fffb00"/><stop offset="0.723" stop-color="#ffb200"/><stop offset="0.836" stop-color="#ff7100"/><stop offset="0.999" stop-color="#ff3f00"/></linearGradient>
<linearGradient id="cg65" gradientUnits="userSpaceOnUse" x1="1532" x2="2329" y1="0" y2="0"><stop offset="0.000" stop-color="#00ff44"/><stop offset="0.402" stop-color="#00ff02"/><stop offset="0.532" stop-color="#79ff00"/><stop offset="0.647" stop-color="#fffb00"/><stop offset="0.720" stop-color="#ffb100"/><stop offset="0.833" stop-color="#ff7000"/><stop offset="0.999" stop-color="#ff3e00"/></linearGradient>
<linearGradient id="cg66" gradientUnits="userSpaceOnUse" x1="1532" x2="2329" y1="0" y2="0"><stop offset="0.000" stop-color="#00ff45"/><stop offset="0.399" stop-color="#00ff04"/><stop offset="0.519" stop-color="#6eff00"/><stop offset="0.645" stop-color="#fffa00"/><stop offset="0.718" stop-color="#ffb000"/><stop offset="0.831" stop-color="#ff7000"/><stop offset="0.999" stop-color="#ff3d00"/></linearGradient>
<linearGradient id="cg67" gradientUnits="userSpaceOnUse" x1="1532" x2="2329" y1="0" y2="0"><stop offset="0.000" stop-color="#00ff47"/><stop offset="0.399" stop-color="#00ff05"/><stop offset="0.529" stop-color="#7bff00"/><stop offset="0.640" stop-color="#fffd00"/><stop offset="0.713" stop-color="#ffb200"/><stop offset="0.823" stop-color="#ff7100"/><stop offset="0.999" stop-color="#ff3c00"/></linearGradient>
<linearGradient id="cg68" gradientUnits="userSpaceOnUse" x1="1532" x2="2329" y1="0" y2="0"><stop offset="0.000" stop-color="#00ff48"/><stop offset="0.396" stop-color="#00ff07"/><stop offset="0.494" stop-color="#58ff00"/><stop offset="0.620" stop-color="#eaff00"/><stop offset="0.640" stop-color="#fff900"/><stop offset="0.713" stop-color="#ffaf00"/><stop offset="0.826" stop-color="#ff6e00"/><stop offset="0.999" stop-color="#ff3a00"/></linearGradient>
<linearGradient id="cg69" gradientUnits="userSpaceOnUse" x1="1532" x2="2329" y1="0" y2="0"><stop offset="0.000" stop-color="#00ff49"/><stop offset="0.396" stop-color="#00ff09"/><stop offset="0.487" stop-color="#52ff00"/><stop offset="0.612" stop-color="#e4ff00"/><stop offset="0.635" stop-color="#fffb00"/><stop offset="0.705" stop-color="#ffb200"/><stop offset="0.813" stop-color="#ff7200"/><stop offset="0.991" stop-color="#ff3b00"/><stop offset="0.999" stop-color="#ff3900"/></linearGradient>
<linearGradient id="cg70" gradientUnits="userSpaceOnUse" x1="1532" x2="2329" y1="0" y2="0"><stop offset="0.000" stop-color="#00ff4b"/><stop offset="0.396" stop-color="#00ff0a"/><stop offset="0.482" stop-color="#4fff00"/><stop offset="0.607" stop-color="#e1ff00"/><stop offset="0.632" stop-color="#fffb00"/><stop offset="0.703" stop-color="#ffb100"/><stop offset="0.811" stop-color="#ff7100"/><stop offset="0.989" stop-color="#ff3a00"/><stop offset="0.999" stop-color="#ff3800"/></linearGradient>
<linearGradient id="cg71" gradientUnits="userSpaceOnUse" x1="1532" x2="2329" y1="0" y2="0"><stop offset="0.000" stop-color="#00ff4d"/><stop offset="0.394" stop-color="#00ff0d"/><stop offset="0.484" stop-color="#54ff00"/><stop offset="0.607" stop-color="#e5ff00"/><stop offset="0.630" stop-color="#fffa00"/><stop offset="0.700" stop-color="#ffb000"/><stop offset="0.808" stop-color="#ff7000"/><stop offset="0.986" stop-color="#ff3900"/><stop offset="0.999" stop-color="#ff3700"/></linearGradient>
<linearGradient id="cg72" gradientUnits="userSpaceOnUse" x1="1532" x2="2329" y1="0" y2="0"><stop offset="0.000" stop-color="#00ff4e"/><stop offset="0.394" stop-color="#00ff0e"/><stop offset="0.487" stop-color="#59ff00"/><stop offset="0.610" stop-color="#ecff00"/><stop offset="0.627" stop-color="#fff900"/><stop offset="0.698" stop-color="#ffb000"/><stop offset="0.806" stop-color="#ff6f00"/><stop offset="0.986" stop-color="#ff3800"/><stop offset="0.999" stop-color="#ff3600"/></linearGradient>
<linearGradient id="cg73" gradientUnits="userSpaceOnUse" x1="1532" x2="2329" y1="0" y2="0"><stop offset="0.000" stop-color="#00ff50"/><stop offset="0.391" stop-color="#00ff10"/><stop offset="0.489" stop-color="#5dff00"/><stop offset="0.610" stop-color="#f0ff00"/><stop offset="0.625" stop-color="#fff900"/><stop offset="0.695" stop-color="#ffaf00"/><stop offset="0.803" stop-color="#ff6f00"/><stop offset="0.984" stop-color="#ff3800"/><stop offset="0.999" stop-color="#ff3500"/></linearGradient>
<linearGradient id="cg74" gradientUnits="userSpaceOnUse" x1="1532" x2="2329" y1="0" y2="0"><stop offset="0.000" stop-color="#00ff51"/><stop offset="0.391" stop-color="#00ff12"/><stop offset="0.494" stop-color="#65ff00"/><stop offset="0.612" stop-color="#f8ff00"/><stop offset="0.627" stop-color="#fff100"/><stop offset="0.700" stop-color="#ffa800"/><stop offset="0.813" stop-color="#ff6800"/><stop offset="0.999" stop-color="#ff3300"/></linearGradient>
<linearGradient id="cg75" gradientUnits="userSpaceOnUse" x1="1532" x2="2329" y1="0" y2="0"><stop offset="0.000" stop-color="#00ff53"/><stop offset="0.391" stop-color="#01ff14"/><stop offset="0.499" stop-color="#6dff00"/><stop offset="0.617" stop-color="#fffb00"/><stop offset="0.685" stop-color="#ffb100"/><stop offset="0.790" stop-color="#ff7000"/><stop offset="0.964" stop-color="#ff3a00"/><stop offset="0.999" stop-color="#ff3200"/></linearGradient>
<linearGradient id="cg76" gradientUnits="userSpaceOnUse" x1="1532" x2="2329" y1="0" y2="0"><stop offset="0.000" stop-color="#00ff54"/><stop offset="0.389" stop-color="#00ff16"/><stop offset="0.504" stop-color="#75ff00"/><stop offset="0.615" stop-color="#fffa00"/><stop offset="0.683" stop-color="#ffb000"/><stop offset="0.788" stop-color="#ff7000"/><stop offset="0.961" stop-color="#ff3900"/><stop offset="0.999" stop-color="#ff3100"/></linearGradient>
<linearGradient id="cg77" gradientUnits="userSpaceOnUse" x1="1532" x2="2329" y1="0" y2="0"><stop offset="0.000" stop-color="#00ff56"/><stop offset="0.389" stop-color="#01ff17"/><stop offset="0.509" stop-color="#7eff00"/><stop offset="0.610" stop-color="#fffd00"/><stop offset="0.678" stop-color="#ffb200"/><stop offset="0.780" stop-color="#ff7100"/><stop offset="0.951" stop-color="#ff3a00"/><stop offset="0.999" stop-color="#ff3000"/></linearGradient>
<linearGradient id="cg78" gradientUnits="userSpaceOnUse" x1="1532" x2="2329" y1="0" y2="0"><stop offset="0.000" stop-color="#00ff58"/><stop offset="0.386" stop-color="#00ff1a"/><stop offset="0.517" stop-color="#89ff00"/><stop offset="0.607" stop-color="#fffc00"/><stop offset="0.673" stop-color="#ffb300"/><stop offset="0.773" stop-color="#ff7300"/><stop offset="0.939" stop-color="#ff3c00"/><stop offset="0.999" stop-color="#ff2f00"/></linearGradient>
<linearGradient id="cg79" gradientUnits="userSpaceOnUse" x1="1532" x2="2329" y1="0" y2="0"><stop offset="0.000" stop-color="#00ff59"/><stop offset="0.386" stop-color="#01ff1c"/><stop offset="0.519" stop-color="#8fff00"/><stop offset="0.605" stop-color="#fffb00"/><stop offset="0.670" stop-color="#ffb200"/><stop offset="0.770" stop-color="#ff7200"/><stop offset="0.936" stop-color="#ff3b00"/><stop offset="0.999" stop-color="#ff2e00"/></linearGradient>
<linearGradient id="cg80" gradientUnits="userSpaceOnUse" x1="1532" x2="2329" y1="0" y2="0"><stop offset="0.000" stop-color="#00ff5b"/><stop offset="0.386" stop-color="#03ff1d"/><stop offset="0.517" stop-color="#8fff00"/><stop offset="0.602" stop-color="#fffb00"/><stop offset="0.668" stop-color="#ffb100"/><stop offset="0.768" stop-color="#ff7100"/><stop offset="0.934" stop-color="#ff3a00"/><stop offset="0.999" stop-color="#ff2d00"/></linearGradient>
<linearGradient id="cg81" gradientUnits="userSpaceOnUse" x1="1532" x2="2329" y1="0" y2="0"><stop offset="0.000" stop-color="#00ff5d"/><stop offset="0.384" stop-color="#02ff20"/><stop offset="0.514" stop-color="#8fff00"/><stop offset="0.600" stop-color="#fffa00"/><stop offset="0.665" stop-color="#ffb000"/><stop offset="0.765" stop-color="#ff7000"/><stop offset="0.931" stop-color="#ff3900"/><stop offset="0.999" stop-color="#ff2c00"/></linearGradient>
<linearGradient id="cg82" gradientUnits="userSpaceOnUse" x1="1532" x2="2329" y1="0" y2="0"><stop offset="0.000" stop-color="#00ff5f"/><stop offset="0.384" stop-color="#03ff22"/><stop offset="0.512" stop-color="#8fff01"/><stop offset="0.595" stop-color="#fffd00"/><stop offset="0.660" stop-color="#ffb200"/><stop offset="0.760" stop-color="#ff7000"/><stop offset="0.926" stop-color="#ff3900"/><stop offset="0.999" stop-color="#ff2a00"/></linearGradient>
<linearGradient id="cg83" gradientUnits="userSpaceOnUse" x1="1532" x2="2329" y1="0" y2="0"><stop offset="0.000" stop-color="#00ff60"/><stop offset="0.384" stop-color="#04ff24"/><stop offset="0.512" stop-color="#92ff03"/><stop offset="0.592" stop-color="#fffc00"/><stop offset="0.655" stop-color="#ffb300"/><stop offset="0.753" stop-color="#ff7200"/><stop offset="0.913" stop-color="#ff3b00"/><stop offset="0.999" stop-color="#ff2900"/></linearGradient>
<linearGradient id="cg84" gradientUnits="userSpaceOnUse" x1="1532" x2="2329" y1="0" y2="0"><stop offset="0.000" stop-color="#00ff62"/><stop offset="0.381" stop-color="#03ff26"/><stop offset="0.509" stop-color="#92ff06"/><stop offset="0.590" stop-color="#fffb00"/><stop offset="0.652" stop-color="#ffb200"/><stop offset="0.750" stop-color="#ff7100"/><stop offset="0.911" stop-color="#ff3a00"/><stop offset="0.999" stop-color="#ff2800"/></linearGradient>
<linearGradient id="cg85" gradientUnits="userSpaceOnUse" x1="1532" x2="2329" y1="0" y2="0"><stop offset="0.000" stop-color="#00ff64"/><stop offset="0.381" stop-color="#05ff28"/><stop offset="0.507" stop-color="#91ff08"/><stop offset="0.577" stop-color="#f4ff00"/><stop offset="0.590" stop-color="#fff700"/><stop offset="0.655" stop-color="#ffad00"/><stop offset="0.755" stop-color="#ff6d00"/><stop offset="0.921" stop-color="#ff3700"/><stop offset="0.999" stop-color="#ff2700"/></linearGradient>
<linearGradient id="cg86" gradientUnits="userSpaceOnUse" x1="1532" x2="2329" y1="0" y2="0"><stop offset="0.000" stop-color="#00ff66"/><stop offset="0.379" stop-color="#04ff2b"/><stop offset="0.504" stop-color="#91ff0b"/><stop offset="0.572" stop-color="#f1ff00"/><stop offset="0.587" stop-color="#fff600"/><stop offset="0.652" stop-color="#ffac00"/><stop offset="0.753" stop-color="#ff6c00"/><stop offset="0.921" stop-color="#ff3500"/><stop offset="0.999" stop-color="#ff2600"/></linearGradient>
<linearGradient id="cg87" gradientUnits="userSpaceOnUse" x1="1532" x2="2329" y1="0" y2="0"><stop offset="0.000" stop-color="#00ff68"/><stop offset="0.379" stop-color="#05ff2d"/><stop offset="0.502" stop-color="#91ff0e"/><stop offset="0.572" stop-color="#f5ff00"/><stop offset="0.587" stop-color="#fff100"/><stop offset="0.652" stop-color="#ffa900"/><stop offset="0.753" stop-color="#ff6a00"/><stop offset="0.921" stop-color="#ff3400"/><stop offset="0.999" stop-color="#ff2500"/></linearGradient>
<linearGradient id="cg88" gradientUnits="userSpaceOnUse" x1="1532" x2="2329" y1="0" y2="0"><stop offset="0.000" stop-color="#00ff6a"/><stop offset="0.376" stop-color="#04ff2f"/><stop offset="0.499" stop-color="#91ff11"/><stop offset="0.577" stop-color="#fffc00"/><stop offset="0.637" stop-color="#ffb300"/><stop offset="0.730" stop-color="#ff7300"/><stop offset="0.883" stop-color="#ff3c00"/><stop offset="0.999" stop-color="#ff2400"/></linearGradient>
<linearGradient id="cg89" gradientUnits="userSpaceOnUse" x1="1532" x2="2329" y1="0" y2="0"><stop offset="0.000" stop-color="#00ff6b"/><stop offset="0.374" stop-color="#03ff32"/><stop offset="0.497" stop-color="#91ff13"/><stop offset="0.575" stop-color="#fffb00"/><stop offset="0.635" stop-color="#ffb200"/><stop offset="0.728" stop-color="#ff7200"/><stop offset="0.881" stop-color="#ff3b00"/><stop offset="0.999" stop-color="#ff2300"/></linearGradient>
<linearGradient id="cg90" gradientUnits="userSpaceOnUse" x1="1532" x2="2329" y1="0" y2="0"><stop offset="0.000" stop-color="#00ff6d"/><stop offset="0.374" stop-color="#04ff34"/><stop offset="0.494" stop-color="#91ff16"/><stop offset="0.572" stop-color="#fffa00"/><stop offset="0.632" stop-color="#ffb100"/><stop offset="0.725" stop-color="#ff7100"/><stop offset="0.878" stop-color="#ff3a00"/><stop offset="0.999" stop-color="#ff2200"/></linearGradient>
<linearGradient id="cg91" gradientUnits="userSpaceOnUse" x1="1532" x2="2329" y1="0" y2="0"><stop offset="0.000" stop-color="#00ff6f"/><stop offset="0.371" stop-color="#03ff37"/><stop offset="0.492" stop-color="#90ff19"/><stop offset="0.567" stop-color="#fffe02"/><stop offset="0.627" stop-color="#ffb300"/><stop offset="0.720" stop-color="#ff7100"/><stop offset="0.873" stop-color="#ff3a00"/><stop offset="0.999" stop-color="#ff2100"/></linearGradient>
<linearGradient id="cg92" gradientUnits="userSpaceOnUse" x1="1532" x2="2329" y1="0" y2="0"><stop offset="0.000" stop-color="#00ff71"/><stop offset="0.371" stop-color="#05ff39"/><stop offset="0.489" stop-color="#90ff1c"/><stop offset="0.565" stop-color="#fffd05"/><stop offset="0.625" stop-color="#ffb200"/><stop offset="0.715" stop-color="#ff7200"/><stop offset="0.866" stop-color="#ff3b00"/><stop offset="0.999" stop-color="#ff2000"/></linearGradient>
<linearGradient id="cg93" gradientUnits="userSpaceOnUse" x1="1532" x2="2329" y1="0" y2="0"><stop offset="0.000" stop-color="#00ff73"/><stop offset="0.369" stop-color="#03ff3c"/><stop offset="0.487" stop-color="#90ff1f"/><stop offset="0.562" stop-color="#fffc08"/><stop offset="0.620" stop-color="#ffb300"/><stop offset="0.710" stop-color="#ff7200"/><stop offset="0.858" stop-color="#ff3b00"/><stop offset="0.999" stop-color="#ff1f00"/></linearGradient>
<linearGradient id="cg94" gradientUnits="userSpaceOnUse" x1="1532" x2="2329" y1="0" y2="0"><stop offset="0.000" stop-color="#00ff76"/><stop offset="0.369" stop-color="#05ff3e"/><stop offset="0.487" stop-color="#93ff22"/><stop offset="0.560" stop-color="#fffb0b"/><stop offset="0.617" stop-color="#ffb200"/><stop offset="0.708" stop-color="#ff7100"/><stop offset="0.856" stop-color="#ff3a00"/><stop offset="0.999" stop-color="#ff1e00"/></linearGradient>
<linearGradient id="cg95" gradientUnits="userSpaceOnUse" x1="1532" x2="2329" y1="0" y2="0"><stop offset="0.000" stop-color="#00ff78"/><stop offset="0.366" stop-color="#04ff41"/><stop offset="0.482" stop-color="#90ff25"/><stop offset="0.557" stop-color="#fffa0e"/><stop offset="0.615" stop-color="#ffb100"/><stop offset="0.705" stop-color="#ff7000"/><stop offset="0.853" stop-color="#ff3a00"/><stop offset="0.999" stop-color="#ff1d00"/></linearGradient>
<linearGradient id="cg96" gradientUnits="userSpaceOnUse" x1="1532" x2="2329" y1="0" y2="0"><stop offset="0.000" stop-color="#00ff7a"/><stop offset="0.364" stop-color="#03ff44"/><stop offset="0.479" stop-color="#90ff29"/><stop offset="0.552" stop-color="#fffe13"/><stop offset="0.610" stop-color="#ffb300"/><stop offset="0.698" stop-color="#ff7200"/><stop offset="0.843" stop-color="#ff3b00"/><stop offset="0.999" stop-color="#ff1c00"/></linearGradient>
<linearGradient id="cg97" gradientUnits="userSpaceOnUse" x1="1532" x2="2329" y1="0" y2="0"><stop offset="0.000" stop-color="#00ff7c"/><stop offset="0.364" stop-color="#04ff47"/><stop offset="0.477" stop-color="#8fff2c"/><stop offset="0.550" stop-color="#fffd16"/><stop offset="0.607" stop-color="#ffb201"/><stop offset="0.695" stop-color="#ff7100"/><stop offset="0.841" stop-color="#ff3a00"/><stop offset="0.999" stop-color="#ff1b00"/></linearGradient>
<linearGradient id="cg98" gradientUnits="userSpaceOnUse" x1="1532" x2="2329" y1="0" y2="0"><stop offset="0.000" stop-color="#00ff7e"/><stop offset="0.361" stop-color="#03ff4a"/><stop offset="0.474" stop-color="#8fff2f"/><stop offset="0.547" stop-color="#fffc19"/><stop offset="0.602" stop-color="#ffb304"/><stop offset="0.688" stop-color="#ff7300"/><stop offset="0.828" stop-color="#ff3c00"/><stop offset="0.999" stop-color="#ff1a00"/></linearGradient>
<linearGradient id="cg99" gradientUnits="userSpaceOnUse" x1="1532" x2="2329" y1="0" y2="0"><stop offset="0.000" stop-color="#00ff80"/><stop offset="0.361" stop-color="#04ff4c"/><stop offset="0.474" stop-color="#93ff32"/><stop offset="0.545" stop-color="#fffb1c"/><stop offset="0.600" stop-color="#ffb206"/><stop offset="0.685" stop-color="#ff7200"/><stop offset="0.826" stop-color="#ff3b00"/><stop offset="0.999" stop-color="#ff1800"/></linearGradient>
<linearGradient id="cg100" gradientUnits="userSpaceOnUse" x1="1532" x2="2329" y1="0" y2="0"><stop offset="0.000" stop-color="#00ff82"/><stop offset="0.359" stop-color="#03ff4f"/><stop offset="0.469" stop-color="#8fff36"/><stop offset="0.542" stop-color="#fffa20"/><stop offset="0.597" stop-color="#ffb109"/><stop offset="0.670" stop-color="#ff7800"/><stop offset="0.803" stop-color="#ff4000"/><stop offset="0.999" stop-color="#ff1700"/></linearGradient>
<linearGradient id="cg101" gradientUnits="userSpaceOnUse" x1="1532" x2="2329" y1="0" y2="0"><stop offset="0.000" stop-color="#00ff85"/><stop offset="0.359" stop-color="#05ff52"/><stop offset="0.469" stop-color="#92ff39"/><stop offset="0.537" stop-color="#fffe25"/><stop offset="0.592" stop-color="#ffb30c"/><stop offset="0.662" stop-color="#ff7a00"/><stop offset="0.790" stop-color="#ff4200"/><stop offset="0.999" stop-color="#ff1600"/></linearGradient>
<linearGradient id="cg102" gradientUnits="userSpaceOnUse" x1="1532" x2="2329" y1="0" y2="0"><stop offset="0.000" stop-color="#00ff87"/><stop offset="0.356" stop-color="#03ff55"/><stop offset="0.464" stop-color="#8eff3d"/><stop offset="0.535" stop-color="#fffd28"/><stop offset="0.590" stop-color="#ffb20f"/><stop offset="0.668" stop-color="#ff7500"/><stop offset="0.803" stop-color="#ff3d00"/><stop offset="0.999" stop-color="#ff1500"/></linearGradient>
<linearGradient id="cg103" gradientUnits="userSpaceOnUse" x1="1532" x2="2329" y1="0" y2="0"><stop offset="0.000" stop-color="#00ff89"/><stop offset="0.354" stop-color="#02ff59"/><stop offset="0.462" stop-color="#8eff40"/><stop offset="0.532" stop-color="#fffc2c"/><stop offset="0.585" stop-color="#ffb312"/><stop offset="0.668" stop-color="#ff7200"/><stop offset="0.803" stop-color="#ff3b00"/><stop offset="0.999" stop-color="#ff1400"/></linearGradient>
<linearGradient id="cg104" gradientUnits="userSpaceOnUse" x1="1532" x2="2329" y1="0" y2="0"><stop offset="0.000" stop-color="#00ff8c"/><stop offset="0.354" stop-color="#04ff5c"/><stop offset="0.462" stop-color="#92ff43"/><stop offset="0.529" stop-color="#fffb2f"/><stop offset="0.582" stop-color="#ffb215"/><stop offset="0.665" stop-color="#ff7100"/><stop offset="0.801" stop-color="#ff3a00"/><stop offset="0.999" stop-color="#ff1300"/></linearGradient>
<linearGradient id="cg105" gradientUnits="userSpaceOnUse" x1="1532" x2="2329" y1="0" y2="0"><stop offset="0.000" stop-color="#00ff8e"/><stop offset="0.351" stop-color="#03ff5f"/><stop offset="0.457" stop-color="#8eff48"/><stop offset="0.527" stop-color="#fffa33"/><stop offset="0.580" stop-color="#ffb118"/><stop offset="0.662" stop-color="#ff7000"/><stop offset="0.798" stop-color="#ff3a00"/><stop offset="0.999" stop-color="#ff1200"/></linearGradient>
<linearGradient id="cg106" gradientUnits="userSpaceOnUse" x1="1532" x2="2329" y1="0" y2="0"><stop offset="0.000" stop-color="#00ff91"/><stop offset="0.351" stop-color="#04ff62"/><stop offset="0.457" stop-color="#91ff4b"/><stop offset="0.522" stop-color="#fffe39"/><stop offset="0.575" stop-color="#ffb31c"/><stop offset="0.655" stop-color="#ff7203"/><stop offset="0.788" stop-color="#ff3b00"/><stop offset="0.999" stop-color="#ff1100"/></linearGradient>
<linearGradient id="cg107" gradientUnits="userSpaceOnUse" x1="1532" x2="2329" y1="0" y2="0"><stop offset="0.000" stop-color="#00ff93"/><stop offset="0.349" stop-color="#03ff65"/><stop offset="0.454" stop-color="#91ff4f"/><stop offset="0.519" stop-color="#fffd3c"/><stop offset="0.572" stop-color="#ffb21e"/><stop offset="0.652" stop-color="#ff7104"/><stop offset="0.785" stop-color="#ff3a00"/><stop offset="0.999" stop-color="#ff1000"/></linearGradient>
<linearGradient id="cg108" gradientUnits="userSpaceOnUse" x1="1532" x2="2329" y1="0" y2="0"><stop offset="0.000" stop-color="#00ff96"/><stop offset="0.349" stop-color="#05ff69"/><stop offset="0.452" stop-color="#91ff53"/><stop offset="0.517" stop-color="#fffc40"/><stop offset="0.567" stop-color="#ffb322"/><stop offset="0.645" stop-color="#ff7308"/><stop offset="0.745" stop-color="#ff4500"/><stop offset="0.954" stop-color="#ff1600"/><stop offset="0.999" stop-color="#ff0f00"/></linearGradient>
<linearGradient id="cg109" gradientUnits="userSpaceOnUse" x1="1532" x2="2329" y1="0" y2="0"><stop offset="0.000" stop-color="#00ff98"/><stop offset="0.346" stop-color="#03ff6c"/><stop offset="0.449" stop-color="#91ff57"/><stop offset="0.514" stop-color="#fffb44"/><stop offset="0.565" stop-color="#ffb225"/><stop offset="0.642" stop-color="#ff720a"/><stop offset="0.730" stop-color="#ff4800"/><stop offset="0.928" stop-color="#ff1900"/><stop offset="0.999" stop-color="#ff0f00"/></linearGradient>
<linearGradient id="cg110" gradientUnits="userSpaceOnUse" x1="1532" x2="2329" y1="0" y2="0"><stop offset="0.000" stop-color="#00ff9b"/><stop offset="0.346" stop-color="#05ff70"/><stop offset="0.447" stop-color="#91ff5b"/><stop offset="0.512" stop-color="#fffa48"/><stop offset="0.562" stop-color="#ffb128"/><stop offset="0.640" stop-color="#ff710c"/><stop offset="0.728" stop-color="#ff4700"/><stop offset="0.926" stop-color="#ff1800"/><stop offset="0.999" stop-color="#ff0e00"/></linearGradient>
<linearGradient id="cg111" gradientUnits="userSpaceOnUse" x1="1532" x2="2329" y1="0" y2="0"><stop offset="0.000" stop-color="#00ff9e"/><stop offset="0.344" stop-color="#04ff73"/><stop offset="0.444" stop-color="#91ff5f"/><stop offset="0.507" stop-color="#fffe4e"/><stop offset="0.557" stop-color="#ffb32c"/><stop offset="0.632" stop-color="#ff730f"/><stop offset="0.728" stop-color="#ff4600"/><stop offset="0.928" stop-color="#ff1600"/><stop offset="0.999" stop-color="#ff0d00"/></linearGradient>
<linearGradient id="cg112" gradientUnits="userSpaceOnUse" x1="1532" x2="2329" y1="0" y2="0"><stop offset="0.000" stop-color="#00ffa0"/><stop offset="0.341" stop-color="#02ff77"/><stop offset="0.442" stop-color="#90ff63"/><stop offset="0.504" stop-color="#fffd53"/><stop offset="0.555" stop-color="#ffb22f"/><stop offset="0.630" stop-color="#ff7211"/><stop offset="0.733" stop-color="#ff4200"/><stop offset="0.941" stop-color="#ff1300"/><stop offset="0.999" stop-color="#ff0c00"/></linearGradient>
<linearGradient id="cg113" gradientUnits="userSpaceOnUse" x1="1532" x2="2329" y1="0" y2="0"><stop offset="0.000" stop-color="#00ffa3"/><stop offset="0.341" stop-color="#04ff7b"/><stop offset="0.439" stop-color="#90ff67"/><stop offset="0.502" stop-color="#fffc57"/><stop offset="0.550" stop-color="#ffb434"/><stop offset="0.625" stop-color="#ff7214"/><stop offset="0.738" stop-color="#ff3f00"/><stop offset="0.954" stop-color="#ff1000"/><stop offset="0.999" stop-color="#ff0b00"/></linearGradient>
<linearGradient id="cg114" gradientUnits="userSpaceOnUse" x1="1532" x2="2329" y1="0" y2="0"><stop offset="0.000" stop-color="#00ffa6"/><stop offset="0.339" stop-color="#03ff7f"/><stop offset="0.437" stop-color="#90ff6c"/><stop offset="0.499" stop-color="#fffb5b"/><stop offset="0.547" stop-color="#ffb237"/><stop offset="0.622" stop-color="#ff7116"/><stop offset="0.743" stop-color="#ff3b00"/><stop offset="0.966" stop-color="#ff0e00"/><stop offset="0.999" stop-color="#ff0a00"/></linearGradient>
<linearGradient id="cg115" gradientUnits="userSpaceOnUse" x1="1532" x2="2329" y1="0" y2="0"><stop offset="0.000" stop-color="#00ffa9"/><stop offset="0.339" stop-color="#04ff82"/><stop offset="0.434" stop-color="#90ff70"/><stop offset="0.497" stop-color="#fffa5f"/><stop offset="0.545" stop-color="#ffb13a"/><stop offset="0.620" stop-color="#ff7019"/><stop offset="0.743" stop-color="#ff3900"/><stop offset="0.969" stop-color="#ff0c00"/><stop offset="0.999" stop-color="#ff0900"/></linearGradient>
<linearGradient id="cg116" gradientUnits="userSpaceOnUse" x1="1532" x2="2329" y1="0" y2="0"><stop offset="0.000" stop-color="#00ffab"/><stop offset="0.336" stop-color="#03ff86"/><stop offset="0.432" stop-color="#90ff75"/><stop offset="0.492" stop-color="#fffe66"/><stop offset="0.540" stop-color="#ffb33f"/><stop offset="0.612" stop-color="#ff721d"/><stop offset="0.733" stop-color="#ff3b00"/><stop offset="0.954" stop-color="#ff0d00"/><stop offset="0.999" stop-color="#ff0800"/></linearGradient>
<linearGradient id="cg117" gradientUnits="userSpaceOnUse" x1="1532" x2="2329" y1="0" y2="0"><stop offset="0.000" stop-color="#00ffae"/><stop offset="0.336" stop-color="#05ff8a"/><stop offset="0.429" stop-color="#8fff7a"/><stop offset="0.489" stop-color="#fffd6b"/><stop offset="0.537" stop-color="#ffb242"/><stop offset="0.610" stop-color="#ff711f"/><stop offset="0.730" stop-color="#ff3a01"/><stop offset="0.951" stop-color="#ff0d00"/><stop offset="0.999" stop-color="#ff0700"/></linearGradient>
<linearGradient id="cg118" gradientUnits="userSpaceOnUse" x1="1532" x2="2329" y1="0" y2="0"><stop offset="0.000" stop-color="#00ffb1"/><stop offset="0.334" stop-color="#03ff8f"/><stop offset="0.427" stop-color="#8fff7e"/><stop offset="0.487" stop-color="#fffc70"/><stop offset="0.532" stop-color="#ffb447"/><stop offset="0.602" stop-color="#ff7323"/><stop offset="0.718" stop-color="#ff3c04"/><stop offset="0.928" stop-color="#ff0f00"/><stop offset="0.999" stop-color="#ff0600"/></linearGradient>
<linearGradient id="cg119" gradientUnits="userSpaceOnUse" x1="1532" x2="2329" y1="0" y2="0"><stop offset="0.000" stop-color="#00ffb4"/><stop offset="0.331" stop-color="#02ff93"/><stop offset="0.424" stop-color="#8fff83"/><stop offset="0.484" stop-color="#fffb74"/><stop offset="0.529" stop-color="#ffb24b"/><stop offset="0.600" stop-color="#ff7225"/><stop offset="0.715" stop-color="#ff3b06"/><stop offset="0.926" stop-color="#ff0e00"/><stop offset="0.999" stop-color="#ff0500"/></linearGradient>
<linearGradient id="cg120" gradientUnits="userSpaceOnUse" x1="1532" x2="2329" y1="0" y2="0"><stop offset="0.000" stop-color="#00ffb8"/><stop offset="0.331" stop-color="#04ff97"/><stop offset="0.422" stop-color="#8fff88"/><stop offset="0.479" stop-color="#ffff7c"/><stop offset="0.524" stop-color="#ffb450"/><stop offset="0.592" stop-color="#ff742a"/><stop offset="0.705" stop-color="#ff3d09"/><stop offset="0.818" stop-color="#ff1f00"/><stop offset="0.999" stop-color="#ff0400"/></linearGradient>
<linearGradient id="cg121" gradientUnits="userSpaceOnUse" x1="1532" x2="2329" y1="0" y2="0"><stop offset="0.000" stop-color="#00ffbb"/><stop offset="0.329" stop-color="#02ff9c"/><stop offset="0.419" stop-color="#8eff8d"/><stop offset="0.477" stop-color="#fffe81"/><stop offset="0.522" stop-color="#ffb353"/><stop offset="0.590" stop-color="#ff732c"/><stop offset="0.703" stop-color="#ff3c0a"/><stop offset="0.813" stop-color="#ff1f00"/><stop offset="0.999" stop-color="#ff0300"/></linearGradient>
<linearGradient id="cg122" gradientUnits="userSpaceOnUse" x1="1532" x2="2329" y1="0" y2="0"><stop offset="0.000" stop-color="#00ffbe"/><stop offset="0.329" stop-color="#04ffa0"/><stop offset="0.419" stop-color="#93ff92"/><stop offset="0.474" stop-color="#fffd86"/><stop offset="0.519" stop-color="#ffb257"/><stop offset="0.587" stop-color="#ff722f"/><stop offset="0.700" stop-color="#ff3b0c"/><stop offset="0.813" stop-color="#ff1d00"/><stop offset="0.999" stop-color="#ff0200"/></linearGradient>
<linearGradient id="cg123" gradientUnits="userSpaceOnUse" x1="1532" x2="2329" y1="0" y2="0"><stop offset="0.000" stop-color="#00ffc1"/><stop offset="0.326" stop-color="#03ffa5"/><stop offset="0.414" stop-color="#8eff98"/><stop offset="0.472" stop-color="#fffc8b"/><stop offset="0.514" stop-color="#ffb45d"/><stop offset="0.582" stop-color="#ff7332"/><stop offset="0.693" stop-color="#ff3c0f"/><stop offset="0.813" stop-color="#ff1c00"/><stop offset="0.999" stop-color="#ff0100"/></linearGradient>
<linearGradient id="cg124" gradientUnits="userSpaceOnUse" x1="1532" x2="2329" y1="0" y2="0"><stop offset="0.000" stop-color="#00ffc4"/><stop offset="0.326" stop-color="#05ffa9"/><stop offset="0.414" stop-color="#92ff9d"/><stop offset="0.469" stop-color="#fffb90"/><stop offset="0.512" stop-color="#ffb360"/><stop offset="0.580" stop-color="#ff7135"/><stop offset="0.690" stop-color="#ff3a10"/><stop offset="0.816" stop-color="#ff1a00"/><stop offset="0.999" stop-color="#ff0000"/></linearGradient>
<linearGradient id="cg125" gradientUnits="userSpaceOnUse" x1="1532" x2="2329" y1="0" y2="0"><stop offset="0.000" stop-color="#00ffc8"/><stop offset="0.324" stop-color="#03ffae"/><stop offset="0.409" stop-color="#8dffa3"/><stop offset="0.464" stop-color="#ffff99"/><stop offset="0.507" stop-color="#ffb566"/><stop offset="0.572" stop-color="#ff743a"/><stop offset="0.680" stop-color="#ff3c14"/><stop offset="0.818" stop-color="#ff1800"/><stop offset="0.999" stop-color="#ff0000"/></linearGradient>
<linearGradient id="cg126" gradientUnits="userSpaceOnUse" x1="1532" x2="2329" y1="0" y2="0"><stop offset="0.000" stop-color="#00ffcb"/><stop offset="0.324" stop-color="#05ffb3"/><stop offset="0.409" stop-color="#92ffa8"/><stop offset="0.462" stop-color="#fffe9f"/><stop offset="0.504" stop-color="#ffb36a"/><stop offset="0.570" stop-color="#ff723d"/><stop offset="0.678" stop-color="#ff3b16"/><stop offset="0.823" stop-color="#ff1600"/><stop offset="0.999" stop-color="#ff0000"/></linearGradient>
<linearGradient id="cg127" gradientUnits="userSpaceOnUse" x1="1532" x2="2329" y1="0" y2="0"><stop offset="0.000" stop-color="#00ffcf"/><stop offset="0.321" stop-color="#03ffb8"/><stop offset="0.407" stop-color="#92ffae"/><stop offset="0.459" stop-color="#fffda4"/><stop offset="0.502" stop-color="#ffb26e"/><stop offset="0.567" stop-color="#ff713f"/><stop offset="0.675" stop-color="#ff3a17"/><stop offset="0.828" stop-color="#ff1400"/><stop offset="0.999" stop-color="#ff0000"/></linearGradient>
<linearGradient id="cg128" gradientUnits="userSpaceOnUse" x1="1532" x2="2329" y1="0" y2="0"><stop offset="0.000" stop-color="#00ffd2"/><stop offset="0.319" stop-color="#02ffbd"/><stop offset="0.402" stop-color="#8dffb4"/><stop offset="0.457" stop-color="#fffcaa"/><stop offset="0.497" stop-color="#ffb475"/><stop offset="0.560" stop-color="#ff7445"/><stop offset="0.662" stop-color="#ff3d1c"/><stop offset="0.828" stop-color="#ff1300"/><stop offset="0.999" stop-color="#ff0000"/></linearGradient>
<linearGradient id="cg129" gradientUnits="userSpaceOnUse" x1="1532" x2="2329" y1="0" y2="0"><stop offset="0.000" stop-color="#00ffd6"/><stop offset="0.319" stop-color="#04ffc3"/><stop offset="0.402" stop-color="#91ffba"/><stop offset="0.454" stop-color="#fffbb0"/><stop offset="0.494" stop-color="#ffb379"/><stop offset="0.557" stop-color="#ff7248"/><stop offset="0.660" stop-color="#ff3b1e"/><stop offset="0.833" stop-color="#ff1000"/><stop offset="0.999" stop-color="#ff0000"/></linearGradient>
<linearGradient id="cg130" gradientUnits="userSpaceOnUse" x1="1532" x2="2329" y1="0" y2="0"><stop offset="0.000" stop-color="#00ffda"/><stop offset="0.316" stop-color="#02ffc8"/><stop offset="0.396" stop-color="#8cffc0"/><stop offset="0.449" stop-color="#ffffba"/><stop offset="0.489" stop-color="#ffb580"/><stop offset="0.550" stop-color="#ff754d"/><stop offset="0.650" stop-color="#ff3d22"/><stop offset="0.831" stop-color="#ff1000"/><stop offset="0.999" stop-color="#ff0000"/></linearGradient>
<linearGradient id="cg131" gradientUnits="userSpaceOnUse" x1="1532" x2="2329" y1="0" y2="0"><stop offset="0.000" stop-color="#00ffdd"/><stop offset="0.316" stop-color="#04ffcd"/><stop offset="0.396" stop-color="#91ffc6"/><stop offset="0.447" stop-color="#fffec0"/><stop offset="0.487" stop-color="#ffb384"/><stop offset="0.547" stop-color="#ff7350"/><stop offset="0.647" stop-color="#ff3c24"/><stop offset="0.831" stop-color="#ff0e00"/><stop offset="0.996" stop-color="#ff0000"/><stop offset="0.999" stop-color="#ff0000"/></linearGradient>
<linearGradient id="cg132" gradientUnits="userSpaceOnUse" x1="1532" x2="2329" y1="0" y2="0"><stop offset="0.000" stop-color="#00ffe1"/><stop offset="0.314" stop-color="#03ffd3"/><stop offset="0.394" stop-color="#91ffcd"/><stop offset="0.444" stop-color="#fffdc6"/><stop offset="0.484" stop-color="#ffb288"/><stop offset="0.545" stop-color="#ff7253"/><stop offset="0.645" stop-color="#ff3b26"/><stop offset="0.828" stop-color="#ff0e00"/><stop offset="0.989" stop-color="#ff0000"/><stop offset="0.999" stop-color="#ff0000"/></linearGradient>
<linearGradient id="cg133" gradientUnits="userSpaceOnUse" x1="1532" x2="2329" y1="0" y2="0"><stop offset="0.000" stop-color="#00ffe5"/><stop offset="0.314" stop-color="#05ffd9"/><stop offset="0.391" stop-color="#90ffd4"/><stop offset="0.442" stop-color="#fffccd"/><stop offset="0.482" stop-color="#ffb18d"/><stop offset="0.542" stop-color="#ff7156"/><stop offset="0.642" stop-color="#ff3a28"/><stop offset="0.826" stop-color="#ff0d01"/><stop offset="0.981" stop-color="#ff0000"/><stop offset="0.999" stop-color="#ff0000"/></linearGradient>
<linearGradient id="cg134" gradientUnits="userSpaceOnUse" x1="1532" x2="2329" y1="0" y2="0"><stop offset="0.000" stop-color="#00ffe9"/><stop offset="0.311" stop-color="#03ffdf"/><stop offset="0.389" stop-color="#90ffdb"/><stop offset="0.439" stop-color="#fffbd3"/><stop offset="0.477" stop-color="#ffb394"/><stop offset="0.535" stop-color="#ff735d"/><stop offset="0.630" stop-color="#ff3d2d"/><stop offset="0.806" stop-color="#ff0f05"/><stop offset="0.966" stop-color="#ff0000"/><stop offset="0.999" stop-color="#ff0000"/></linearGradient>
<linearGradient id="cg135" gradientUnits="userSpaceOnUse" x1="1532" x2="2329" y1="0" y2="0"><stop offset="0.000" stop-color="#00ffed"/><stop offset="0.309" stop-color="#01ffe5"/><stop offset="0.386" stop-color="#90ffe2"/><stop offset="0.434" stop-color="#feffdf"/><stop offset="0.472" stop-color="#ffb59c"/><stop offset="0.529" stop-color="#ff7462"/><stop offset="0.625" stop-color="#ff3c30"/><stop offset="0.798" stop-color="#ff0f07"/><stop offset="0.956" stop-color="#ff0000"/><stop offset="0.999" stop-color="#ff0000"/></linearGradient>
<linearGradient id="cg136" gradientUnits="userSpaceOnUse" x1="1532" x2="2329" y1="0" y2="0"><stop offset="0.000" stop-color="#00fff1"/><stop offset="0.309" stop-color="#04ffeb"/><stop offset="0.384" stop-color="#90ffe9"/><stop offset="0.432" stop-color="#fffee6"/><stop offset="0.469" stop-color="#ffb4a1"/><stop offset="0.527" stop-color="#ff7365"/><stop offset="0.622" stop-color="#ff3b32"/><stop offset="0.795" stop-color="#ff0e08"/><stop offset="0.946" stop-color="#ff0000"/><stop offset="0.999" stop-color="#ff0000"/></linearGradient>
<linearGradient id="cg137" gradientUnits="userSpaceOnUse" x1="1532" x2="2329" y1="0" y2="0"><stop offset="0.000" stop-color="#00fff6"/><stop offset="0.306" stop-color="#02fff2"/><stop offset="0.381" stop-color="#8ffff0"/><stop offset="0.429" stop-color="#fffded"/><stop offset="0.467" stop-color="#ffb2a6"/><stop offset="0.524" stop-color="#ff7168"/><stop offset="0.620" stop-color="#ff3a34"/><stop offset="0.793" stop-color="#ff0d09"/><stop offset="0.939" stop-color="#ff0000"/><stop offset="0.999" stop-color="#ff0000"/></linearGradient>
<linearGradient id="cg138" gradientUnits="userSpaceOnUse" x1="1532" x2="2329" y1="0" y2="0"><stop offset="0.000" stop-color="#00fffa"/><stop offset="0.306" stop-color="#04fff8"/><stop offset="0.379" stop-color="#8ffff8"/><stop offset="0.427" stop-color="#fffcf4"/><stop offset="0.462" stop-color="#ffb4af"/><stop offset="0.517" stop-color="#ff7470"/><stop offset="0.607" stop-color="#ff3d3a"/><stop offset="0.773" stop-color="#ff0f0e"/><stop offset="0.918" stop-color="#ff0000"/><stop offset="0.999" stop-color="#ff0000"/></linearGradient>
<linearGradient id="cg139" gradientUnits="userSpaceOnUse" x1="1532" x2="2329" y1="0" y2="0"><stop offset="0.000" stop-color="#00fffe"/><stop offset="0.304" stop-color="#02ffff"/><stop offset="0.376" stop-color="#8efeff"/><stop offset="0.424" stop-color="#fffafb"/><stop offset="0.459" stop-color="#ffb3b4"/><stop offset="0.514" stop-color="#ff7273"/><stop offset="0.605" stop-color="#ff3c3c"/><stop offset="0.770" stop-color="#ff0e0f"/><stop offset="0.918" stop-color="#ff0000"/><stop offset="0.999" stop-color="#ff0000"/></linearGradient>
<linearGradient id="cg140" gradientUnits="userSpaceOnUse" x1="1532" x2="2329" y1="0" y2="0"><stop offset="0.000" stop-color="#00fbff"/><stop offset="0.304" stop-color="#05f8ff"/><stop offset="0.376" stop-color="#8ff7ff"/><stop offset="0.424" stop-color="#fff3fc"/><stop offset="0.462" stop-color="#ffaab1"/><stop offset="0.519" stop-color="#ff6b70"/><stop offset="0.615" stop-color="#ff3539"/><stop offset="0.790" stop-color="#ff090c"/><stop offset="0.934" stop-color="#ff0000"/><stop offset="0.999" stop-color="#ff0000"/></linearGradient>
<linearGradient id="cg141" gradientUnits="userSpaceOnUse" x1="1532" x2="2329" y1="0" y2="0"><stop offset="0.000" stop-color="#00f7ff"/><stop offset="0.301" stop-color="#03f1ff"/><stop offset="0.376" stop-color="#90efff"/><stop offset="0.424" stop-color="#ffebfd"/><stop offset="0.462" stop-color="#ffa4b2"/><stop offset="0.519" stop-color="#ff6771"/><stop offset="0.615" stop-color="#ff333a"/><stop offset="0.788" stop-color="#ff090e"/><stop offset="0.934" stop-color="#ff0000"/><stop offset="0.999" stop-color="#ff0000"/></linearGradient>
<linearGradient id="cg142" gradientUnits="userSpaceOnUse" x1="1532" x2="2329" y1="0" y2="0"><stop offset="0.000" stop-color="#00f3ff"/><stop offset="0.301" stop-color="#05ebff"/><stop offset="0.376" stop-color="#91e8ff"/><stop offset="0.424" stop-color="#ffe3fd"/><stop offset="0.462" stop-color="#ff9fb3"/><stop offset="0.519" stop-color="#ff6473"/><stop offset="0.615" stop-color="#ff313c"/><stop offset="0.788" stop-color="#ff070e"/><stop offset="0.944" stop-color="#ff0000"/><stop offset="0.999" stop-color="#ff0000"/></linearGradient>
<linearGradient id="cg143" gradientUnits="userSpaceOnUse" x1="1532" x2="2329" y1="0" y2="0"><stop offset="0.000" stop-color="#00eeff"/><stop offset="0.299" stop-color="#03e5ff"/><stop offset="0.376" stop-color="#92e0ff"/><stop offset="0.424" stop-color="#ffdcfe"/><stop offset="0.462" stop-color="#ff9ab4"/><stop offset="0.519" stop-color="#ff6074"/><stop offset="0.615" stop-color="#ff2f3d"/><stop offset="0.788" stop-color="#ff060f"/><stop offset="0.951" stop-color="#ff0000"/><stop offset="0.999" stop-color="#ff0000"/></linearGradient>
<linearGradient id="cg144" gradientUnits="userSpaceOnUse" x1="1532" x2="2329" y1="0" y2="0"><stop offset="0.000" stop-color="#00eaff"/><stop offset="0.299" stop-color="#05dfff"/><stop offset="0.376" stop-color="#92d9ff"/><stop offset="0.424" stop-color="#ffd5fe"/><stop offset="0.462" stop-color="#ff95b5"/><stop offset="0.519" stop-color="#ff5d75"/><stop offset="0.615" stop-color="#ff2d3e"/><stop offset="0.788" stop-color="#ff0510"/><stop offset="0.954" stop-color="#ff0000"/><stop offset="0.999" stop-color="#ff0000"/></linearGradient>
<linearGradient id="cg145" gradientUnits="userSpaceOnUse" x1="1532" x2="2329" y1="0" y2="0"><stop offset="0.000" stop-color="#00e6ff"/><stop offset="0.296" stop-color="#03d9ff"/><stop offset="0.374" stop-color="#8ed3ff"/><stop offset="0.424" stop-color="#ffceff"/><stop offset="0.462" stop-color="#ff90b6"/><stop offset="0.519" stop-color="#ff5a76"/><stop offset="0.615" stop-color="#ff2b3f"/><stop offset="0.788" stop-color="#ff0311"/><stop offset="0.961" stop-color="#ff0000"/><stop offset="0.999" stop-color="#ff0000"/></linearGradient>
<linearGradient id="cg146" gradientUnits="userSpaceOnUse" x1="1532" x2="2329" y1="0" y2="0"><stop offset="0.000" stop-color="#00e2ff"/><stop offset="0.294" stop-color="#01d3ff"/><stop offset="0.374" stop-color="#8fccff"/><stop offset="0.424" stop-color="#fec7ff"/><stop offset="0.464" stop-color="#ff88b4"/><stop offset="0.524" stop-color="#ff5373"/><stop offset="0.625" stop-color="#ff253c"/><stop offset="0.808" stop-color="#ff000e"/><stop offset="0.974" stop-color="#ff0000"/><stop offset="0.999" stop-color="#ff0000"/></linearGradient>
<linearGradient id="cg147" gradientUnits="userSpaceOnUse" x1="1532" x2="2329" y1="0" y2="0"><stop offset="0.000" stop-color="#00deff"/><stop offset="0.294" stop-color="#04cdff"/><stop offset="0.374" stop-color="#90c6ff"/><stop offset="0.427" stop-color="#ffbbfa"/><stop offset="0.467" stop-color="#ff81b1"/><stop offset="0.529" stop-color="#ff4d71"/><stop offset="0.632" stop-color="#ff213a"/><stop offset="0.813" stop-color="#ff000e"/><stop offset="0.981" stop-color="#ff0000"/><stop offset="0.999" stop-color="#ff0000"/></linearGradient>
<linearGradient id="cg148" gradientUnits="userSpaceOnUse" x1="1532" x2="2329" y1="0" y2="0"><stop offset="0.000" stop-color="#00daff"/><stop offset="0.291" stop-color="#02c8ff"/><stop offset="0.374" stop-color="#90bfff"/><stop offset="0.427" stop-color="#ffb5fb"/><stop offset="0.467" stop-color="#ff7cb2"/><stop offset="0.529" stop-color="#ff4a72"/><stop offset="0.632" stop-color="#ff1f3b"/><stop offset="0.808" stop-color="#ff0010"/><stop offset="0.984" stop-color="#ff0000"/><stop offset="0.999" stop-color="#ff0000"/></linearGradient>
<linearGradient id="cg149" gradientUnits="userSpaceOnUse" x1="1532" x2="2329" y1="0" y2="0"><stop offset="0.000" stop-color="#00d6ff"/><stop offset="0.291" stop-color="#04c2ff"/><stop offset="0.374" stop-color="#91b9ff"/><stop offset="0.427" stop-color="#ffaffb"/><stop offset="0.467" stop-color="#ff78b3"/><stop offset="0.529" stop-color="#ff4773"/><stop offset="0.632" stop-color="#ff1d3c"/><stop offset="0.801" stop-color="#ff0012"/><stop offset="0.986" stop-color="#ff0000"/><stop offset="0.999" stop-color="#ff0000"/></linearGradient>
<linearGradient id="cg150" gradientUnits="userSpaceOnUse" x1="1532" x2="2329" y1="0" y2="0"><stop offset="0.000" stop-color="#00d2ff"/><stop offset="0.289" stop-color="#02bdff"/><stop offset="0.371" stop-color="#8db3ff"/><stop offset="0.427" stop-color="#ffa9fc"/><stop offset="0.469" stop-color="#ff71b1"/><stop offset="0.535" stop-color="#ff4170"/><stop offset="0.642" stop-color="#ff1839"/><stop offset="0.798" stop-color="#ff0013"/><stop offset="0.991" stop-color="#ff0000"/><stop offset="0.999" stop-color="#ff0000"/></linearGradient>
<linearGradient id="cg151" gradientUnits="userSpaceOnUse" x1="1532" x2="2329" y1="0" y2="0"><stop offset="0.000" stop-color="#00ceff"/><stop offset="0.289" stop-color="#04b8ff"/><stop offset="0.374" stop-color="#92adff"/><stop offset="0.427" stop-color="#ffa3fc"/><stop offset="0.469" stop-color="#ff6db2"/><stop offset="0.535" stop-color="#ff3e71"/><stop offset="0.642" stop-color="#ff163a"/><stop offset="0.790" stop-color="#ff0015"/><stop offset="0.994" stop-color="#ff0000"/><stop offset="0.999" stop-color="#ff0000"/></linearGradient>
<linearGradient id="cg152" gradientUnits="userSpaceOnUse" x1="1532" x2="2329" y1="0" y2="0"><stop offset="0.000" stop-color="#00caff"/><stop offset="0.286" stop-color="#02b3ff"/><stop offset="0.371" stop-color="#8ea7ff"/><stop offset="0.427" stop-color="#ff9dfd"/><stop offset="0.469" stop-color="#ff69b3"/><stop offset="0.535" stop-color="#ff3b72"/><stop offset="0.642" stop-color="#ff153b"/><stop offset="0.783" stop-color="#ff0017"/><stop offset="0.999" stop-color="#ff0000"/></linearGradient>
<linearGradient id="cg153" gradientUnits="userSpaceOnUse" x1="1532" x2="2329" y1="0" y2="0"><stop offset="0.000" stop-color="#00c7ff"/><stop offset="0.286" stop-color="#04aeff"/><stop offset="0.371" stop-color="#8fa2ff"/><stop offset="0.427" stop-color="#ff97fd"/><stop offset="0.469" stop-color="#ff64b4"/><stop offset="0.535" stop-color="#ff3973"/><stop offset="0.642" stop-color="#ff133c"/><stop offset="0.775" stop-color="#ff001a"/><stop offset="0.999" stop-color="#ff0000"/></linearGradient>
<linearGradient id="cg154" gradientUnits="userSpaceOnUse" x1="1532" x2="2329" y1="0" y2="0"><stop offset="0.000" stop-color="#00c3ff"/><stop offset="0.284" stop-color="#03a9ff"/><stop offset="0.371" stop-color="#909cff"/><stop offset="0.427" stop-color="#ff91fe"/><stop offset="0.469" stop-color="#ff60b5"/><stop offset="0.535" stop-color="#ff3674"/><stop offset="0.642" stop-color="#ff113d"/><stop offset="0.768" stop-color="#ff001c"/><stop offset="0.999" stop-color="#ff0000"/></linearGradient>
<linearGradient id="cg155" gradientUnits="userSpaceOnUse" x1="1532" x2="2329" y1="0" y2="0"><stop offset="0.000" stop-color="#00bfff"/><stop offset="0.284" stop-color="#05a4ff"/><stop offset="0.371" stop-color="#9097ff"/><stop offset="0.427" stop-color="#ff8bff"/><stop offset="0.469" stop-color="#ff5cb6"/><stop offset="0.535" stop-color="#ff3376"/><stop offset="0.642" stop-color="#ff0f3e"/><stop offset="0.760" stop-color="#ff001e"/><stop offset="0.999" stop-color="#ff0000"/></linearGradient>
<linearGradient id="cg156" gradientUnits="userSpaceOnUse" x1="1532" x2="2329" y1="0" y2="0"><stop offset="0.000" stop-color="#00bcff"/><stop offset="0.281" stop-color="#03a0ff"/><stop offset="0.371" stop-color="#9191ff"/><stop offset="0.427" stop-color="#ff86ff"/><stop offset="0.469" stop-color="#ff58b7"/><stop offset="0.537" stop-color="#ff2f75"/><stop offset="0.647" stop-color="#ff0c3d"/><stop offset="0.758" stop-color="#ff001f"/><stop offset="0.999" stop-color="#ff0000"/></linearGradient>
<linearGradient id="cg157" gradientUnits="userSpaceOnUse" x1="1532" x2="2329" y1="0" y2="0"><stop offset="0.000" stop-color="#00b8ff"/><stop offset="0.281" stop-color="#059bff"/><stop offset="0.371" stop-color="#928cff"/><stop offset="0.429" stop-color="#ff7dfa"/><stop offset="0.474" stop-color="#ff51b1"/><stop offset="0.545" stop-color="#ff2971"/><stop offset="0.660" stop-color="#ff083a"/><stop offset="0.778" stop-color="#ff001c"/><stop offset="0.999" stop-color="#ff0000"/></linearGradient>
<linearGradient id="cg158" gradientUnits="userSpaceOnUse" x1="1532" x2="2329" y1="0" y2="0"><stop offset="0.000" stop-color="#00b5ff"/><stop offset="0.279" stop-color="#0397ff"/><stop offset="0.371" stop-color="#9287ff"/><stop offset="0.429" stop-color="#ff78fb"/><stop offset="0.474" stop-color="#ff4db2"/><stop offset="0.545" stop-color="#ff2772"/><stop offset="0.660" stop-color="#ff063b"/><stop offset="0.828" stop-color="#ff0014"/><stop offset="0.999" stop-color="#ff0000"/></linearGradient>
<linearGradient id="cg159" gradientUnits="userSpaceOnUse" x1="1532" x2="2329" y1="0" y2="0"><stop offset="0.000" stop-color="#00b1ff"/><stop offset="0.279" stop-color="#0592ff"/><stop offset="0.371" stop-color="#9382ff"/><stop offset="0.429" stop-color="#ff73fb"/><stop offset="0.474" stop-color="#ff49b3"/><stop offset="0.545" stop-color="#ff2473"/><stop offset="0.660" stop-color="#ff053c"/><stop offset="0.871" stop-color="#ff000e"/><stop offset="0.999" stop-color="#ff0000"/></linearGradient>
<linearGradient id="cg160" gradientUnits="userSpaceOnUse" x1="1532" x2="2329" y1="0" y2="0"><stop offset="0.000" stop-color="#00aeff"/><stop offset="0.276" stop-color="#038eff"/><stop offset="0.369" stop-color="#8f7dff"/><stop offset="0.429" stop-color="#ff6efc"/><stop offset="0.474" stop-color="#ff46b4"/><stop offset="0.545" stop-color="#ff2274"/><stop offset="0.660" stop-color="#ff033d"/><stop offset="0.871" stop-color="#ff000f"/><stop offset="0.999" stop-color="#ff0000"/></linearGradient>
<linearGradient id="cg161" gradientUnits="userSpaceOnUse" x1="1532" x2="2329" y1="0" y2="0"><stop offset="0.000" stop-color="#00aaff"/><stop offset="0.274" stop-color="#028aff"/><stop offset="0.369" stop-color="#9078ff"/><stop offset="0.429" stop-color="#ff69fc"/><stop offset="0.477" stop-color="#ff41b2"/><stop offset="0.550" stop-color="#ff1e71"/><stop offset="0.670" stop-color="#ff003a"/><stop offset="0.891" stop-color="#ff000d"/><stop offset="0.999" stop-color="#ff0001"/></linearGradient>
<linearGradient id="cg162" gradientUnits="userSpaceOnUse" x1="1532" x2="2329" y1="0" y2="0"><stop offset="0.000" stop-color="#00a7ff"/><stop offset="0.274" stop-color="#0486ff"/><stop offset="0.369" stop-color="#9174ff"/><stop offset="0.429" stop-color="#ff64fd"/><stop offset="0.477" stop-color="#ff3db3"/><stop offset="0.550" stop-color="#ff1b72"/><stop offset="0.670" stop-color="#ff003b"/><stop offset="0.891" stop-color="#ff000e"/><stop offset="0.999" stop-color="#ff0002"/></linearGradient>
<linearGradient id="cg163" gradientUnits="userSpaceOnUse" x1="1532" x2="2329" y1="0" y2="0"><stop offset="0.000" stop-color="#00a4ff"/><stop offset="0.271" stop-color="#0282ff"/><stop offset="0.369" stop-color="#916fff"/><stop offset="0.429" stop-color="#ff60fd"/><stop offset="0.477" stop-color="#ff3ab3"/><stop offset="0.550" stop-color="#ff1973"/><stop offset="0.670" stop-color="#ff003c"/><stop offset="0.891" stop-color="#ff000e"/><stop offset="0.999" stop-color="#ff0002"/></linearGradient>
<linearGradient id="cg164" gradientUnits="userSpaceOnUse" x1="1532" x2="2329" y1="0" y2="0"><stop offset="0.000" stop-color="#00a1ff"/><stop offset="0.271" stop-color="#047eff"/><stop offset="0.369" stop-color="#926aff"/><stop offset="0.429" stop-color="#ff5bfe"/><stop offset="0.477" stop-color="#ff36b4"/><stop offset="0.550" stop-color="#ff1774"/><stop offset="0.668" stop-color="#ff003e"/><stop offset="0.886" stop-color="#ff0010"/><stop offset="0.999" stop-color="#ff0003"/></linearGradient>
<linearGradient id="cg165" gradientUnits="userSpaceOnUse" x1="1532" x2="2329" y1="0" y2="0"><stop offset="0.000" stop-color="#009dff"/><stop offset="0.269" stop-color="#037aff"/><stop offset="0.366" stop-color="#8e67ff"/><stop offset="0.429" stop-color="#ff56fe"/><stop offset="0.477" stop-color="#ff33b5"/><stop offset="0.550" stop-color="#ff1475"/><stop offset="0.660" stop-color="#ff0041"/><stop offset="0.871" stop-color="#ff0013"/><stop offset="0.999" stop-color="#ff0003"/></linearGradient>
<linearGradient id="cg166" gradientUnits="userSpaceOnUse" x1="1532" x2="2329" y1="0" y2="0"><stop offset="0.000" stop-color="#009aff"/><stop offset="0.269" stop-color="#0476ff"/><stop offset="0.369" stop-color="#9362ff"/><stop offset="0.432" stop-color="#ff50fa"/><stop offset="0.482" stop-color="#ff2db0"/><stop offset="0.560" stop-color="#ff0f70"/><stop offset="0.655" stop-color="#ff0044"/><stop offset="0.861" stop-color="#ff0015"/><stop offset="0.999" stop-color="#ff0004"/></linearGradient>
<linearGradient id="cg167" gradientUnits="userSpaceOnUse" x1="1532" x2="2329" y1="0" y2="0"><stop offset="0.000" stop-color="#0097ff"/><stop offset="0.266" stop-color="#0373ff"/><stop offset="0.366" stop-color="#905eff"/><stop offset="0.432" stop-color="#ff4bfa"/><stop offset="0.482" stop-color="#ff2ab1"/><stop offset="0.560" stop-color="#ff0d70"/><stop offset="0.650" stop-color="#ff0046"/><stop offset="0.851" stop-color="#ff0017"/><stop offset="0.999" stop-color="#ff0004"/></linearGradient>
<linearGradient id="cg168" gradientUnits="userSpaceOnUse" x1="1532" x2="2329" y1="0" y2="0"><stop offset="0.000" stop-color="#0094ff"/><stop offset="0.266" stop-color="#046fff"/><stop offset="0.366" stop-color="#905aff"/><stop offset="0.432" stop-color="#ff47fb"/><stop offset="0.482" stop-color="#ff27b2"/><stop offset="0.560" stop-color="#ff0b71"/><stop offset="0.647" stop-color="#ff0048"/><stop offset="0.846" stop-color="#ff0018"/><stop offset="0.999" stop-color="#ff0005"/></linearGradient>
<linearGradient id="cg169" gradientUnits="userSpaceOnUse" x1="1532" x2="2329" y1="0" y2="0"><stop offset="0.000" stop-color="#0091ff"/><stop offset="0.263" stop-color="#036cff"/><stop offset="0.366" stop-color="#9156ff"/><stop offset="0.432" stop-color="#ff43fb"/><stop offset="0.482" stop-color="#ff24b3"/><stop offset="0.560" stop-color="#ff0972"/><stop offset="0.647" stop-color="#ff0049"/><stop offset="0.846" stop-color="#ff0019"/><stop offset="0.999" stop-color="#ff0006"/></linearGradient>
<linearGradient id="cg170" gradientUnits="userSpaceOnUse" x1="1532" x2="2329" y1="0" y2="0"><stop offset="0.000" stop-color="#008eff"/><stop offset="0.263" stop-color="#0568ff"/><stop offset="0.366" stop-color="#9151ff"/><stop offset="0.432" stop-color="#ff3ffc"/><stop offset="0.482" stop-color="#ff21b3"/><stop offset="0.560" stop-color="#ff0673"/><stop offset="0.688" stop-color="#ff003c"/><stop offset="0.923" stop-color="#ff000f"/><stop offset="0.999" stop-color="#ff0006"/></linearGradient>
<linearGradient id="cg171" gradientUnits="userSpaceOnUse" x1="1532" x2="2329" y1="0" y2="0"><stop offset="0.000" stop-color="#008bff"/><stop offset="0.261" stop-color="#0365ff"/><stop offset="0.366" stop-color="#924dff"/><stop offset="0.432" stop-color="#ff3afc"/><stop offset="0.484" stop-color="#ff1db1"/><stop offset="0.565" stop-color="#ff0371"/><stop offset="0.698" stop-color="#ff003a"/><stop offset="0.941" stop-color="#ff000d"/><stop offset="0.999" stop-color="#ff0007"/></linearGradient>
<linearGradient id="cg172" gradientUnits="userSpaceOnUse" x1="1532" x2="2329" y1="0" y2="0"><stop offset="0.000" stop-color="#0088ff"/><stop offset="0.261" stop-color="#0561ff"/><stop offset="0.366" stop-color="#934aff"/><stop offset="0.432" stop-color="#ff36fd"/><stop offset="0.484" stop-color="#ff1ab2"/><stop offset="0.565" stop-color="#ff0172"/><stop offset="0.698" stop-color="#ff003b"/><stop offset="0.941" stop-color="#ff000e"/><stop offset="0.999" stop-color="#ff0007"/></linearGradient>
<linearGradient id="cg173" gradientUnits="userSpaceOnUse" x1="1532" x2="2329" y1="0" y2="0"><stop offset="0.000" stop-color="#0085ff"/><stop offset="0.258" stop-color="#035eff"/><stop offset="0.364" stop-color="#8f46ff"/><stop offset="0.432" stop-color="#ff33fd"/><stop offset="0.484" stop-color="#ff17b3"/><stop offset="0.565" stop-color="#ff0073"/><stop offset="0.698" stop-color="#ff003c"/><stop offset="0.941" stop-color="#ff000e"/><stop offset="0.999" stop-color="#ff0008"/></linearGradient>
<linearGradient id="cg174" gradientUnits="userSpaceOnUse" x1="1532" x2="2329" y1="0" y2="0"><stop offset="0.000" stop-color="#0082ff"/><stop offset="0.258" stop-color="#055bff"/><stop offset="0.366" stop-color="#9442ff"/><stop offset="0.432" stop-color="#ff2ffe"/><stop offset="0.484" stop-color="#ff14b4"/><stop offset="0.565" stop-color="#ff0074"/><stop offset="0.698" stop-color="#ff003d"/><stop offset="0.941" stop-color="#ff000f"/><stop offset="0.999" stop-color="#ff0008"/></linearGradient>
<linearGradient id="cg175" gradientUnits="userSpaceOnUse" x1="1532" x2="2329" y1="0" y2="0"><stop offset="0.000" stop-color="#007fff"/><stop offset="0.256" stop-color="#0458ff"/><stop offset="0.364" stop-color="#903fff"/><stop offset="0.432" stop-color="#ff2bfe"/><stop offset="0.484" stop-color="#ff11b5"/><stop offset="0.565" stop-color="#ff0075"/><stop offset="0.698" stop-color="#ff003d"/><stop offset="0.941" stop-color="#ff000f"/><stop offset="0.999" stop-color="#ff0009"/></linearGradient>
<linearGradient id="cg176" gradientUnits="userSpaceOnUse" x1="1532" x2="2329" y1="0" y2="0"><stop offset="0.000" stop-color="#007dff"/><stop offset="0.253" stop-color="#0255ff"/><stop offset="0.364" stop-color="#913bff"/><stop offset="0.434" stop-color="#ff26fa"/><stop offset="0.489" stop-color="#ff0db0"/><stop offset="0.562" stop-color="#ff0077"/><stop offset="0.695" stop-color="#ff003f"/><stop offset="0.936" stop-color="#ff0011"/><stop offset="0.999" stop-color="#ff000a"/></linearGradient>
<linearGradient id="cg177" gradientUnits="userSpaceOnUse" x1="1532" x2="2329" y1="0" y2="0"><stop offset="0.000" stop-color="#007aff"/><stop offset="0.253" stop-color="#0452ff"/><stop offset="0.364" stop-color="#9138ff"/><stop offset="0.434" stop-color="#ff22fa"/><stop offset="0.489" stop-color="#ff0ab1"/><stop offset="0.557" stop-color="#ff007b"/><stop offset="0.685" stop-color="#ff0043"/><stop offset="0.916" stop-color="#ff0014"/><stop offset="0.999" stop-color="#ff000a"/></linearGradient>
<linearGradient id="cg178" gradientUnits="userSpaceOnUse" x1="1532" x2="2329" y1="0" y2="0"><stop offset="0.000" stop-color="#0077ff"/><stop offset="0.251" stop-color="#034fff"/><stop offset="0.361" stop-color="#8e35ff"/><stop offset="0.434" stop-color="#ff1efb"/><stop offset="0.489" stop-color="#ff08b2"/><stop offset="0.570" stop-color="#ff0074"/><stop offset="0.708" stop-color="#ff003d"/><stop offset="0.959" stop-color="#ff000f"/><stop offset="0.999" stop-color="#ff000b"/></linearGradient>
<linearGradient id="cg179" gradientUnits="userSpaceOnUse" x1="1532" x2="2329" y1="0" y2="0"><stop offset="0.000" stop-color="#0074ff"/><stop offset="0.251" stop-color="#044cff"/><stop offset="0.364" stop-color="#9331ff"/><stop offset="0.434" stop-color="#ff1bfb"/><stop offset="0.489" stop-color="#ff05b2"/><stop offset="0.575" stop-color="#ff0072"/><stop offset="0.715" stop-color="#ff003b"/><stop offset="0.974" stop-color="#ff000e"/><stop offset="0.999" stop-color="#ff000b"/></linearGradient>
<linearGradient id="cg180" gradientUnits="userSpaceOnUse" x1="1532" x2="2329" y1="0" y2="0"><stop offset="0.000" stop-color="#0072ff"/><stop offset="0.248" stop-color="#0349ff"/><stop offset="0.361" stop-color="#8f2eff"/><stop offset="0.434" stop-color="#ff17fc"/><stop offset="0.489" stop-color="#ff02b3"/><stop offset="0.575" stop-color="#ff0073"/><stop offset="0.715" stop-color="#ff003c"/><stop offset="0.974" stop-color="#ff000e"/><stop offset="0.999" stop-color="#ff000c"/></linearGradient>
<linearGradient id="cg181" gradientUnits="userSpaceOnUse" x1="1532" x2="2329" y1="0" y2="0"><stop offset="0.000" stop-color="#006fff"/><stop offset="0.248" stop-color="#0446ff"/><stop offset="0.364" stop-color="#942aff"/><stop offset="0.434" stop-color="#ff14fc"/><stop offset="0.492" stop-color="#ff00b1"/><stop offset="0.580" stop-color="#ff0071"/><stop offset="0.725" stop-color="#ff003a"/><stop offset="0.991" stop-color="#ff000d"/><stop offset="0.999" stop-color="#ff000c"/></linearGradient>
<linearGradient id="cg182" gradientUnits="userSpaceOnUse" x1="1532" x2="2329" y1="0" y2="0"><stop offset="0.000" stop-color="#006cff"/><stop offset="0.246" stop-color="#0343ff"/><stop offset="0.361" stop-color="#9127ff"/><stop offset="0.434" stop-color="#ff10fd"/><stop offset="0.492" stop-color="#ff00b2"/><stop offset="0.580" stop-color="#ff0072"/><stop offset="0.725" stop-color="#ff003b"/><stop offset="0.991" stop-color="#ff000e"/><stop offset="0.999" stop-color="#ff000d"/></linearGradient>
<linearGradient id="cg183" gradientUnits="userSpaceOnUse" x1="1532" x2="2329" y1="0" y2="0"><stop offset="0.000" stop-color="#006aff"/><stop offset="0.246" stop-color="#0440ff"/><stop offset="0.361" stop-color="#9124ff"/><stop offset="0.434" stop-color="#ff0dfd"/><stop offset="0.492" stop-color="#ff00b3"/><stop offset="0.580" stop-color="#ff0073"/><stop offset="0.725" stop-color="#ff003c"/><stop offset="0.991" stop-color="#ff000e"/><stop offset="0.999" stop-color="#ff000d"/></linearGradient>
<linearGradient id="cg184" gradientUnits="userSpaceOnUse" x1="1532" x2="2329" y1="0" y2="0"><stop offset="0.000" stop-color="#0067ff"/><stop offset="0.243" stop-color="#033eff"/><stop offset="0.361" stop-color="#9221ff"/><stop offset="0.434" stop-color="#ff0afd"/><stop offset="0.489" stop-color="#ff00b6"/><stop offset="0.577" stop-color="#ff0075"/><stop offset="0.723" stop-color="#ff003d"/><stop offset="0.986" stop-color="#ff000f"/><stop offset="0.999" stop-color="#ff000e"/></linearGradient>
<linearGradient id="cg185" gradientUnits="userSpaceOnUse" x1="1532" x2="2329" y1="0" y2="0"><stop offset="0.000" stop-color="#0065ff"/><stop offset="0.243" stop-color="#053bff"/><stop offset="0.361" stop-color="#921dff"/><stop offset="0.437" stop-color="#ff06fa"/><stop offset="0.497" stop-color="#ff00af"/><stop offset="0.590" stop-color="#ff006f"/><stop offset="0.743" stop-color="#ff0038"/><stop offset="0.999" stop-color="#ff000e"/></linearGradient>
<linearGradient id="cg186" gradientUnits="userSpaceOnUse" x1="1532" x2="2329" y1="0" y2="0"><stop offset="0.000" stop-color="#0062ff"/><stop offset="0.241" stop-color="#0338ff"/><stop offset="0.361" stop-color="#931aff"/><stop offset="0.437" stop-color="#ff02fa"/><stop offset="0.497" stop-color="#ff00b0"/><stop offset="0.590" stop-color="#ff0070"/><stop offset="0.743" stop-color="#ff0039"/><stop offset="0.999" stop-color="#ff000f"/></linearGradient>
<linearGradient id="cg187" gradientUnits="userSpaceOnUse" x1="1532" x2="2329" y1="0" y2="0"><stop offset="0.000" stop-color="#005fff"/><stop offset="0.241" stop-color="#0536ff"/><stop offset="0.361" stop-color="#9317ff"/><stop offset="0.437" stop-color="#ff00fa"/><stop offset="0.497" stop-color="#ff00b1"/><stop offset="0.590" stop-color="#ff0070"/><stop offset="0.743" stop-color="#ff003a"/><stop offset="0.999" stop-color="#ff000f"/></linearGradient>
<linearGradient id="cg188" gradientUnits="userSpaceOnUse" x1="1532" x2="2329" y1="0" y2="0"><stop offset="0.000" stop-color="#005dff"/><stop offset="0.238" stop-color="#0433ff"/><stop offset="0.359" stop-color="#9015ff"/><stop offset="0.437" stop-color="#ff00fb"/><stop offset="0.497" stop-color="#ff00b2"/><stop offset="0.590" stop-color="#ff0071"/><stop offset="0.743" stop-color="#ff003b"/><stop offset="0.999" stop-color="#ff0010"/></linearGradient>
<linearGradient id="cg189" gradientUnits="userSpaceOnUse" x1="1532" x2="2329" y1="0" y2="0"><stop offset="0.000" stop-color="#005bff"/><stop offset="0.238" stop-color="#0531ff"/><stop offset="0.361" stop-color="#9411ff"/><stop offset="0.437" stop-color="#ff00fb"/><stop offset="0.497" stop-color="#ff00b2"/><stop offset="0.590" stop-color="#ff0072"/><stop offset="0.743" stop-color="#ff003b"/><stop offset="0.999" stop-color="#ff0011"/></linearGradient>
<linearGradient id="cg190" gradientUnits="userSpaceOnUse" x1="1532" x2="2329" y1="0" y2="0"><stop offset="0.000" stop-color="#0058ff"/><stop offset="0.236" stop-color="#042eff"/><stop offset="0.359" stop-color="#910fff"/><stop offset="0.432" stop-color="#fa00ff"/><stop offset="0.507" stop-color="#ff00aa"/><stop offset="0.607" stop-color="#ff006a"/><stop offset="0.775" stop-color="#ff0034"/><stop offset="0.999" stop-color="#ff0011"/></linearGradient>
<linearGradient id="cg191" gradientUnits="userSpaceOnUse" x1="1532" x2="2329" y1="0" y2="0"><stop offset="0.000" stop-color="#0056ff"/><stop offset="0.236" stop-color="#052cff"/><stop offset="0.359" stop-color="#920cff"/><stop offset="0.424" stop-color="#ee00ff"/><stop offset="0.439" stop-color="#ff00f8"/><stop offset="0.502" stop-color="#ff00af"/><stop offset="0.600" stop-color="#ff006e"/><stop offset="0.763" stop-color="#ff0038"/><stop offset="0.999" stop-color="#ff0012"/></linearGradient>
<linearGradient id="cg192" gradientUnits="userSpaceOnUse" x1="1532" x2="2329" y1="0" y2="0"><stop offset="0.000" stop-color="#0053ff"/><stop offset="0.233" stop-color="#042aff"/><stop offset="0.359" stop-color="#9209ff"/><stop offset="0.427" stop-color="#f200ff"/><stop offset="0.439" stop-color="#ff00f9"/><stop offset="0.502" stop-color="#ff00b0"/><stop offset="0.600" stop-color="#ff006f"/><stop offset="0.763" stop-color="#ff0038"/><stop offset="0.999" stop-color="#ff0012"/></linearGradient>
<linearGradient id="cg193" gradientUnits="userSpaceOnUse" x1="1532" x2="2329" y1="0" y2="0"><stop offset="0.000" stop-color="#0051ff"/><stop offset="0.231" stop-color="#0327ff"/><stop offset="0.356" stop-color="#8f07ff"/><stop offset="0.432" stop-color="#f900ff"/><stop offset="0.477" stop-color="#ff00c9"/><stop offset="0.560" stop-color="#ff0086"/><stop offset="0.693" stop-color="#ff004c"/><stop offset="0.928" stop-color="#ff001b"/><stop offset="0.999" stop-color="#ff0013"/></linearGradient>
<linearGradient id="cg194" gradientUnits="userSpaceOnUse" x1="1532" x2="2329" y1="0" y2="0"><stop offset="0.000" stop-color="#004fff"/><stop offset="0.231" stop-color="#0425ff"/><stop offset="0.359" stop-color="#9304ff"/><stop offset="0.437" stop-color="#ff00fd"/><stop offset="0.499" stop-color="#ff00b3"/><stop offset="0.597" stop-color="#ff0072"/><stop offset="0.758" stop-color="#ff003b"/><stop offset="0.999" stop-color="#ff0013"/></linearGradient>
<linearGradient id="cg195" gradientUnits="userSpaceOnUse" x1="1532" x2="2329" y1="0" y2="0"><stop offset="0.000" stop-color="#004cff"/><stop offset="0.228" stop-color="#0323ff"/><stop offset="0.356" stop-color="#9002ff"/><stop offset="0.439" stop-color="#ff00fa"/><stop offset="0.504" stop-color="#ff00af"/><stop offset="0.605" stop-color="#ff006f"/><stop offset="0.770" stop-color="#ff0039"/><stop offset="0.999" stop-color="#ff0014"/></linearGradient>
<linearGradient id="cg196" gradientUnits="userSpaceOnUse" x1="1532" x2="2329" y1="0" y2="0"><stop offset="0.000" stop-color="#004aff"/><stop offset="0.228" stop-color="#0420ff"/><stop offset="0.356" stop-color="#9100ff"/><stop offset="0.439" stop-color="#ff00fa"/><stop offset="0.504" stop-color="#ff00b0"/><stop offset="0.605" stop-color="#ff0070"/><stop offset="0.770" stop-color="#ff0039"/><stop offset="0.999" stop-color="#ff0014"/></linearGradient>
<linearGradient id="cg197" gradientUnits="userSpaceOnUse" x1="1532" x2="2329" y1="0" y2="0"><stop offset="0.000" stop-color="#0048ff"/><stop offset="0.226" stop-color="#031eff"/><stop offset="0.356" stop-color="#9100ff"/><stop offset="0.439" stop-color="#ff00fb"/><stop offset="0.504" stop-color="#ff00b1"/><stop offset="0.605" stop-color="#ff0070"/><stop offset="0.770" stop-color="#ff003a"/><stop offset="0.999" stop-color="#ff0015"/></linearGradient>
<linearGradient id="cg198" gradientUnits="userSpaceOnUse" x1="1532" x2="2329" y1="0" y2="0"><stop offset="0.000" stop-color="#0046ff"/><stop offset="0.226" stop-color="#041cff"/><stop offset="0.356" stop-color="#9200ff"/><stop offset="0.439" stop-color="#ff00fb"/><stop offset="0.504" stop-color="#ff00b1"/><stop offset="0.605" stop-color="#ff0071"/><stop offset="0.770" stop-color="#ff003a"/><stop offset="0.999" stop-color="#ff0015"/></linearGradient>
<linearGradient id="cg199" gradientUnits="userSpaceOnUse" x1="1532" x2="2329" y1="0" y2="0"><stop offset="0.000" stop-color="#0043ff"/><stop offset="0.223" stop-color="#031aff"/><stop offset="0.351" stop-color="#8c00ff"/><stop offset="0.439" stop-color="#ff00fb"/><stop offset="0.504" stop-color="#ff00b2"/><stop offset="0.605" stop-color="#ff0072"/><stop offset="0.773" stop-color="#ff003a"/><stop offset="0.999" stop-color="#ff0016"/></linearGradient>
<linearGradient id="cg200" gradientUnits="userSpaceOnUse" x1="1532" x2="2329" y1="0" y2="0"><stop offset="0.000" stop-color="#0041ff"/><stop offset="0.223" stop-color="#0518ff"/><stop offset="0.344" stop-color="#8300ff"/><stop offset="0.439" stop-color="#ff00fc"/><stop offset="0.504" stop-color="#ff00b3"/><stop offset="0.605" stop-color="#ff0073"/><stop offset="0.773" stop-color="#ff003b"/><stop offset="0.999" stop-color="#ff0016"/></linearGradient>
<linearGradient id="cg201" gradientUnits="userSpaceOnUse" x1="1532" x2="2329" y1="0" y2="0"><stop offset="0.000" stop-color="#003fff"/><stop offset="0.221" stop-color="#0416ff"/><stop offset="0.334" stop-color="#7800ff"/><stop offset="0.439" stop-color="#ff00fc"/><stop offset="0.507" stop-color="#ff00b1"/><stop offset="0.610" stop-color="#ff0071"/><stop offset="0.780" stop-color="#ff003a"/><stop offset="0.999" stop-color="#ff0017"/></linearGradient>
<linearGradient id="cg202" gradientUnits="userSpaceOnUse" x1="1532" x2="2329" y1="0" y2="0"><stop offset="0.000" stop-color="#003dff"/><stop offset="0.221" stop-color="#0513ff"/><stop offset="0.326" stop-color="#7000ff"/><stop offset="0.439" stop-color="#ff00fc"/><stop offset="0.507" stop-color="#ff00b2"/><stop offset="0.610" stop-color="#ff0072"/><stop offset="0.780" stop-color="#ff003b"/><stop offset="0.999" stop-color="#ff0017"/></linearGradient>
<linearGradient id="cg203" gradientUnits="userSpaceOnUse" x1="1532" x2="2329" y1="0" y2="0"><stop offset="0.000" stop-color="#003bff"/><stop offset="0.218" stop-color="#0412ff"/><stop offset="0.319" stop-color="#6800ff"/><stop offset="0.439" stop-color="#ff00fd"/><stop offset="0.507" stop-color="#ff00b2"/><stop offset="0.610" stop-color="#ff0072"/><stop offset="0.780" stop-color="#ff003b"/><stop offset="0.999" stop-color="#ff0018"/></linearGradient>
<linearGradient id="cg204" gradientUnits="userSpaceOnUse" x1="1532" x2="2329" y1="0" y2="0"><stop offset="0.000" stop-color="#0039ff"/><stop offset="0.218" stop-color="#050fff"/><stop offset="0.311" stop-color="#6100ff"/><stop offset="0.432" stop-color="#f600ff"/><stop offset="0.447" stop-color="#ff00f3"/><stop offset="0.519" stop-color="#ff00a9"/><stop offset="0.632" stop-color="#ff0069"/><stop offset="0.821" stop-color="#ff0033"/><stop offset="0.999" stop-color="#ff0018"/></linearGradient>
<linearGradient id="cg205" gradientUnits="userSpaceOnUse" x1="1532" x2="2329" y1="0" y2="0"><stop offset="0.000" stop-color="#0037ff"/><stop offset="0.216" stop-color="#040eff"/><stop offset="0.306" stop-color="#5c00ff"/><stop offset="0.427" stop-color="#ef00ff"/><stop offset="0.444" stop-color="#ff00f6"/><stop offset="0.514" stop-color="#ff00ad"/><stop offset="0.622" stop-color="#ff006e"/><stop offset="0.803" stop-color="#ff0038"/><stop offset="0.999" stop-color="#ff0019"/></linearGradient>
<linearGradient id="cg206" gradientUnits="userSpaceOnUse" x1="1532" x2="2329" y1="0" y2="0"><stop offset="0.000" stop-color="#0035ff"/><stop offset="0.216" stop-color="#050cff"/><stop offset="0.301" stop-color="#5800ff"/><stop offset="0.424" stop-color="#eb00ff"/><stop offset="0.442" stop-color="#ff00fa"/><stop offset="0.512" stop-color="#ff00b0"/><stop offset="0.620" stop-color="#ff0070"/><stop offset="0.798" stop-color="#ff0039"/><stop offset="0.999" stop-color="#ff0019"/></linearGradient>
<linearGradient id="cg207" gradientUnits="userSpaceOnUse" x1="1532" x2="2329" y1="0" y2="0"><stop offset="0.000" stop-color="#0033ff"/><stop offset="0.213" stop-color="#040aff"/><stop offset="0.299" stop-color="#5600ff"/><stop offset="0.422" stop-color="#e800ff"/><stop offset="0.442" stop-color="#ff00fb"/><stop offset="0.512" stop-color="#ff00b1"/><stop offset="0.620" stop-color="#ff0070"/><stop offset="0.798" stop-color="#ff003a"/><stop offset="0.999" stop-color="#ff001a"/></linearGradient>
<linearGradient id="cg208" gradientUnits="userSpaceOnUse" x1="1532" x2="2329" y1="0" y2="0"><stop offset="0.000" stop-color="#0031ff"/><stop offset="0.211" stop-color="#0308ff"/><stop offset="0.299" stop-color="#5700ff"/><stop offset="0.424" stop-color="#eb00ff"/><stop offset="0.442" stop-color="#ff00fb"/><stop offset="0.512" stop-color="#ff00b1"/><stop offset="0.620" stop-color="#ff0071"/><stop offset="0.798" stop-color="#ff003a"/><stop offset="0.999" stop-color="#ff001a"/></linearGradient>
<linearGradient id="cg209" gradientUnits="userSpaceOnUse" x1="1532" x2="2329" y1="0" y2="0"><stop offset="0.000" stop-color="#002fff"/><stop offset="0.211" stop-color="#0406ff"/><stop offset="0.354" stop-color="#9300ff"/><stop offset="0.442" stop-color="#ff00fb"/><stop offset="0.512" stop-color="#ff00b2"/><stop offset="0.620" stop-color="#ff0072"/><stop offset="0.801" stop-color="#ff003a"/><stop offset="0.999" stop-color="#ff001b"/></linearGradient>
<linearGradient id="cg210" gradientUnits="userSpaceOnUse" x1="1532" x2="2329" y1="0" y2="0"><stop offset="0.000" stop-color="#002dff"/><stop offset="0.208" stop-color="#0305ff"/><stop offset="0.351" stop-color="#9100ff"/><stop offset="0.442" stop-color="#ff00fc"/><stop offset="0.512" stop-color="#ff00b2"/><stop offset="0.622" stop-color="#ff0071"/><stop offset="0.803" stop-color="#ff003a"/><stop offset="0.999" stop-color="#ff001b"/></linearGradient>
<linearGradient id="cg211" gradientUnits="userSpaceOnUse" x1="1532" x2="2329" y1="0" y2="0"><stop offset="0.000" stop-color="#002bff"/><stop offset="0.208" stop-color="#0402ff"/><stop offset="0.351" stop-color="#9100ff"/><stop offset="0.442" stop-color="#ff00fc"/><stop offset="0.514" stop-color="#ff00b1"/><stop offset="0.625" stop-color="#ff0071"/><stop offset="0.808" stop-color="#ff003a"/><stop offset="0.999" stop-color="#ff001c"/></linearGradient>
<linearGradient id="cg212" gradientUnits="userSpaceOnUse" x1="1532" x2="2329" y1="0" y2="0"><stop offset="0.000" stop-color="#0029ff"/><stop offset="0.206" stop-color="#0301ff"/><stop offset="0.351" stop-color="#9200ff"/><stop offset="0.442" stop-color="#ff00fc"/><stop offset="0.514" stop-color="#ff00b2"/><stop offset="0.625" stop-color="#ff0071"/><stop offset="0.808" stop-color="#ff003b"/><stop offset="0.999" stop-color="#ff001c"/></linearGradient>
<linearGradient id="cg213" gradientUnits="userSpaceOnUse" x1="1532" x2="2329" y1="0" y2="0"><stop offset="0.000" stop-color="#0027ff"/><stop offset="0.206" stop-color="#0500ff"/><stop offset="0.351" stop-color="#9200ff"/><stop offset="0.442" stop-color="#ff00fd"/><stop offset="0.514" stop-color="#ff00b2"/><stop offset="0.627" stop-color="#ff0071"/><stop offset="0.813" stop-color="#ff003a"/><stop offset="0.999" stop-color="#ff001d"/></linearGradient>
<linearGradient id="cg214" gradientUnits="userSpaceOnUse" x1="1532" x2="2329" y1="0" y2="0"><stop offset="0.000" stop-color="#0025ff"/><stop offset="0.203" stop-color="#0400ff"/><stop offset="0.351" stop-color="#9300ff"/><stop offset="0.442" stop-color="#ff00fd"/><stop offset="0.514" stop-color="#ff00b3"/><stop offset="0.627" stop-color="#ff0072"/><stop offset="0.813" stop-color="#ff003b"/><stop offset="0.999" stop-color="#ff001d"/></linearGradient>
<linearGradient id="cg215" gradientUnits="userSpaceOnUse" x1="1532" x2="2329" y1="0" y2="0"><stop offset="0.000" stop-color="#0023ff"/><stop offset="0.203" stop-color="#0500ff"/><stop offset="0.351" stop-color="#9300ff"/><stop offset="0.444" stop-color="#ff00fa"/><stop offset="0.519" stop-color="#ff00b0"/><stop offset="0.635" stop-color="#ff006f"/><stop offset="0.826" stop-color="#ff0039"/><stop offset="0.999" stop-color="#ff001e"/></linearGradient>
<linearGradient id="cg216" gradientUnits="userSpaceOnUse" x1="1532" x2="2329" y1="0" y2="0"><stop offset="0.000" stop-color="#0021ff"/><stop offset="0.201" stop-color="#0400ff"/><stop offset="0.349" stop-color="#9100ff"/><stop offset="0.444" stop-color="#ff00fa"/><stop offset="0.519" stop-color="#ff00b0"/><stop offset="0.635" stop-color="#ff0070"/><stop offset="0.826" stop-color="#ff0039"/><stop offset="0.999" stop-color="#ff001e"/></linearGradient>
<linearGradient id="cg217" gradientUnits="userSpaceOnUse" x1="1532" x2="2329" y1="0" y2="0"><stop offset="0.000" stop-color="#001fff"/><stop offset="0.196" stop-color="#0100ff"/><stop offset="0.346" stop-color="#8e00ff"/><stop offset="0.444" stop-color="#ff00fb"/><stop offset="0.519" stop-color="#ff00b1"/><stop offset="0.635" stop-color="#ff0070"/><stop offset="0.826" stop-color="#ff003a"/><stop offset="0.999" stop-color="#ff001f"/></linearGradient>
<linearGradient id="cg218" gradientUnits="userSpaceOnUse" x1="1532" x2="2329" y1="0" y2="0"><stop offset="0.000" stop-color="#001dff"/><stop offset="0.186" stop-color="#0000ff"/><stop offset="0.223" stop-color="#1900ff"/><stop offset="0.369" stop-color="#a800ff"/><stop offset="0.444" stop-color="#ff00fb"/><stop offset="0.519" stop-color="#ff00b1"/><stop offset="0.635" stop-color="#ff0071"/><stop offset="0.828" stop-color="#ff003a"/><stop offset="0.999" stop-color="#ff001f"/></linearGradient>
<linearGradient id="cg219" gradientUnits="userSpaceOnUse" x1="1532" x2="2329" y1="0" y2="0"><stop offset="0.000" stop-color="#001cff"/><stop offset="0.178" stop-color="#0000ff"/><stop offset="0.203" stop-color="#0900ff"/><stop offset="0.354" stop-color="#9700ff"/><stop offset="0.444" stop-color="#ff00fb"/><stop offset="0.519" stop-color="#ff00b2"/><stop offset="0.635" stop-color="#ff0072"/><stop offset="0.828" stop-color="#ff003a"/><stop offset="0.999" stop-color="#ff0020"/></linearGradient>
<linearGradient id="cg220" gradientUnits="userSpaceOnUse" x1="1532" x2="2329" y1="0" y2="0"><stop offset="0.000" stop-color="#001aff"/><stop offset="0.171" stop-color="#0000ff"/><stop offset="0.198" stop-color="#0600ff"/><stop offset="0.351" stop-color="#9500ff"/><stop offset="0.444" stop-color="#ff00fc"/><stop offset="0.519" stop-color="#ff00b2"/><stop offset="0.637" stop-color="#ff0071"/><stop offset="0.831" stop-color="#ff003a"/><stop offset="0.999" stop-color="#ff0020"/></linearGradient>
<linearGradient id="cg221" gradientUnits="userSpaceOnUse" x1="1532" x2="2329" y1="0" y2="0"><stop offset="0.000" stop-color="#0018ff"/><stop offset="0.163" stop-color="#0000ff"/><stop offset="0.196" stop-color="#0500ff"/><stop offset="0.349" stop-color="#9300ff"/><stop offset="0.444" stop-color="#ff00fc"/><stop offset="0.522" stop-color="#ff00b1"/><stop offset="0.640" stop-color="#ff0071"/><stop offset="0.836" stop-color="#ff003a"/><stop offset="0.999" stop-color="#ff0021"/></linearGradient>
<linearGradient id="cg222" gradientUnits="userSpaceOnUse" x1="1532" x2="2329" y1="0" y2="0"><stop offset="0.000" stop-color="#0016ff"/><stop offset="0.153" stop-color="#0000ff"/><stop offset="0.196" stop-color="#0600ff"/><stop offset="0.349" stop-color="#9300ff"/><stop offset="0.444" stop-color="#ff00fc"/><stop offset="0.522" stop-color="#ff00b2"/><stop offset="0.640" stop-color="#ff0071"/><stop offset="0.836" stop-color="#ff003a"/><stop offset="0.999" stop-color="#ff0021"/></linearGradient>
<linearGradient id="cg223" gradientUnits="userSpaceOnUse" x1="1532" x2="2329" y1="0" y2="0"><stop offset="0.000" stop-color="#0014ff"/><stop offset="0.146" stop-color="#0000ff"/><stop offset="0.193" stop-color="#0500ff"/><stop offset="0.349" stop-color="#9300ff"/><stop offset="0.444" stop-color="#ff00fd"/><stop offset="0.522" stop-color="#ff00b2"/><stop offset="0.642" stop-color="#ff0071"/><stop offset="0.841" stop-color="#ff003a"/><stop offset="0.999" stop-color="#ff0021"/></linearGradient>
<linearGradient id="cg224" gradientUnits="userSpaceOnUse" x1="1532" x2="2329" y1="0" y2="0"><stop offset="0.000" stop-color="#0013ff"/><stop offset="0.138" stop-color="#0000ff"/><stop offset="0.191" stop-color="#0400ff"/><stop offset="0.346" stop-color="#9100ff"/><stop offset="0.447" stop-color="#ff00fa"/><stop offset="0.527" stop-color="#ff00af"/><stop offset="0.650" stop-color="#ff006f"/><stop offset="0.853" stop-color="#ff0038"/><stop offset="0.999" stop-color="#ff0022"/></linearGradient>
<linearGradient id="cg225" gradientUnits="userSpaceOnUse" x1="1532" x2="2329" y1="0" y2="0"><stop offset="0.000" stop-color="#0011ff"/><stop offset="0.130" stop-color="#0000ff"/><stop offset="0.191" stop-color="#0500ff"/><stop offset="0.349" stop-color="#9400ff"/><stop offset="0.447" stop-color="#ff00fa"/><stop offset="0.527" stop-color="#ff00b0"/><stop offset="0.650" stop-color="#ff006f"/><stop offset="0.853" stop-color="#ff0039"/><stop offset="0.999" stop-color="#ff0022"/></linearGradient>
<linearGradient id="cg226" gradientUnits="userSpaceOnUse" x1="1532" x2="2329" y1="0" y2="0"><stop offset="0.000" stop-color="#000fff"/><stop offset="0.125" stop-color="#0000ff"/><stop offset="0.188" stop-color="#0400ff"/><stop offset="0.346" stop-color="#9200ff"/><stop offset="0.447" stop-color="#ff00fa"/><stop offset="0.527" stop-color="#ff00b0"/><stop offset="0.650" stop-color="#ff0070"/><stop offset="0.853" stop-color="#ff0039"/><stop offset="0.999" stop-color="#ff0023"/></linearGradient>
<linearGradient id="cg227" gradientUnits="userSpaceOnUse" x1="1532" x2="2329" y1="0" y2="0"><stop offset="0.000" stop-color="#000eff"/><stop offset="0.118" stop-color="#0000ff"/><stop offset="0.188" stop-color="#0500ff"/><stop offset="0.349" stop-color="#9500ff"/><stop offset="0.447" stop-color="#ff00fb"/><stop offset="0.527" stop-color="#ff00b1"/><stop offset="0.650" stop-color="#ff0070"/><stop offset="0.856" stop-color="#ff0039"/><stop offset="0.999" stop-color="#ff0023"/></linearGradient>
<linearGradient id="cg228" gradientUnits="userSpaceOnUse" x1="1532" x2="2329" y1="0" y2="0"><stop offset="0.000" stop-color="#000cff"/><stop offset="0.113" stop-color="#0000ff"/><stop offset="0.186" stop-color="#0500ff"/><stop offset="0.346" stop-color="#9300ff"/><stop offset="0.447" stop-color="#ff00fb"/><stop offset="0.527" stop-color="#ff00b1"/><stop offset="0.650" stop-color="#ff0071"/><stop offset="0.856" stop-color="#ff003a"/><stop offset="0.999" stop-color="#ff0024"/></linearGradient>
<g id="cierows"><rect x="1532" y="200" width="797" height="3" fill="url(#cg0)"/>
<rect x="1532" y="203" width="797" height="3" fill="url(#cg1)"/>
<rect x="1532" y="206" width="797" height="3" fill="url(#cg2)"/>
<rect x="1532" y="209" width="797" height="3" fill="url(#cg3)"/>
<rect x="1532" y="212" width="797" height="3" fill="url(#cg4)"/>
<rect x="1532" y="215" width="797" height="3" fill="url(#cg5)"/>
<rect x="1532" y="218" width="797" height="3" fill="url(#cg6)"/>
<rect x="1532" y="221" width="797" height="3" fill="url(#cg7)"/>
<rect x="1532" y="224" width="797" height="3" fill="url(#cg8)"/>
<rect x="1532" y="227" width="797" height="3" fill="url(#cg9)"/>
<rect x="1532" y="230" width="797" height="3" fill="url(#cg10)"/>
<rect x="1532" y="233" width="797" height="3" fill="url(#cg11)"/>
<rect x="1532" y="236" width="797" height="3" fill="url(#cg12)"/>
<rect x="1532" y="239" width="797" height="3" fill="url(#cg13)"/>
<rect x="1532" y="242" width="797" height="3" fill="url(#cg14)"/>
<rect x="1532" y="245" width="797" height="3" fill="url(#cg15)"/>
<rect x="1532" y="248" width="797" height="3" fill="url(#cg16)"/>
<rect x="1532" y="251" width="797" height="3" fill="url(#cg17)"/>
<rect x="1532" y="254" width="797" height="3" fill="url(#cg18)"/>
<rect x="1532" y="257" width="797" height="3" fill="url(#cg19)"/>
<rect x="1532" y="260" width="797" height="3" fill="url(#cg20)"/>
<rect x="1532" y="263" width="797" height="3" fill="url(#cg21)"/>
<rect x="1532" y="266" width="797" height="3" fill="url(#cg22)"/>
<rect x="1532" y="269" width="797" height="3" fill="url(#cg23)"/>
<rect x="1532" y="272" width="797" height="3" fill="url(#cg24)"/>
<rect x="1532" y="275" width="797" height="3" fill="url(#cg25)"/>
<rect x="1532" y="278" width="797" height="3" fill="url(#cg26)"/>
<rect x="1532" y="281" width="797" height="3" fill="url(#cg27)"/>
<rect x="1532" y="284" width="797" height="3" fill="url(#cg28)"/>
<rect x="1532" y="287" width="797" height="3" fill="url(#cg29)"/>
<rect x="1532" y="290" width="797" height="3" fill="url(#cg30)"/>
<rect x="1532" y="293" width="797" height="3" fill="url(#cg31)"/>
<rect x="1532" y="296" width="797" height="3" fill="url(#cg32)"/>
<rect x="1532" y="299" width="797" height="3" fill="url(#cg33)"/>
<rect x="1532" y="302" width="797" height="3" fill="url(#cg34)"/>
<rect x="1532" y="305" width="797" height="3" fill="url(#cg35)"/>
<rect x="1532" y="308" width="797" height="3" fill="url(#cg36)"/>
<rect x="1532" y="311" width="797" height="3" fill="url(#cg37)"/>
<rect x="1532" y="314" width="797" height="3" fill="url(#cg38)"/>
<rect x="1532" y="317" width="797" height="3" fill="url(#cg39)"/>
<rect x="1532" y="320" width="797" height="3" fill="url(#cg40)"/>
<rect x="1532" y="323" width="797" height="3" fill="url(#cg41)"/>
<rect x="1532" y="326" width="797" height="3" fill="url(#cg42)"/>
<rect x="1532" y="329" width="797" height="3" fill="url(#cg43)"/>
<rect x="1532" y="332" width="797" height="3" fill="url(#cg44)"/>
<rect x="1532" y="335" width="797" height="3" fill="url(#cg45)"/>
<rect x="1532" y="338" width="797" height="3" fill="url(#cg46)"/>
<rect x="1532" y="341" width="797" height="3" fill="url(#cg47)"/>
<rect x="1532" y="344" width="797" height="3" fill="url(#cg48)"/>
<rect x="1532" y="347" width="797" height="3" fill="url(#cg49)"/>
<rect x="1532" y="350" width="797" height="3" fill="url(#cg50)"/>
<rect x="1532" y="353" width="797" height="3" fill="url(#cg51)"/>
<rect x="1532" y="356" width="797" height="3" fill="url(#cg52)"/>
<rect x="1532" y="359" width="797" height="3" fill="url(#cg53)"/>
<rect x="1532" y="362" width="797" height="3" fill="url(#cg54)"/>
<rect x="1532" y="365" width="797" height="3" fill="url(#cg55)"/>
<rect x="1532" y="368" width="797" height="3" fill="url(#cg56)"/>
<rect x="1532" y="371" width="797" height="3" fill="url(#cg57)"/>
<rect x="1532" y="374" width="797" height="3" fill="url(#cg58)"/>
<rect x="1532" y="377" width="797" height="3" fill="url(#cg59)"/>
<rect x="1532" y="380" width="797" height="3" fill="url(#cg60)"/>
<rect x="1532" y="383" width="797" height="3" fill="url(#cg61)"/>
<rect x="1532" y="386" width="797" height="3" fill="url(#cg62)"/>
<rect x="1532" y="389" width="797" height="3" fill="url(#cg63)"/>
<rect x="1532" y="392" width="797" height="3" fill="url(#cg64)"/>
<rect x="1532" y="395" width="797" height="3" fill="url(#cg65)"/>
<rect x="1532" y="398" width="797" height="3" fill="url(#cg66)"/>
<rect x="1532" y="401" width="797" height="3" fill="url(#cg67)"/>
<rect x="1532" y="404" width="797" height="3" fill="url(#cg68)"/>
<rect x="1532" y="407" width="797" height="3" fill="url(#cg69)"/>
<rect x="1532" y="410" width="797" height="3" fill="url(#cg70)"/>
<rect x="1532" y="413" width="797" height="3" fill="url(#cg71)"/>
<rect x="1532" y="416" width="797" height="3" fill="url(#cg72)"/>
<rect x="1532" y="419" width="797" height="3" fill="url(#cg73)"/>
<rect x="1532" y="422" width="797" height="3" fill="url(#cg74)"/>
<rect x="1532" y="425" width="797" height="3" fill="url(#cg75)"/>
<rect x="1532" y="428" width="797" height="3" fill="url(#cg76)"/>
<rect x="1532" y="431" width="797" height="3" fill="url(#cg77)"/>
<rect x="1532" y="434" width="797" height="3" fill="url(#cg78)"/>
<rect x="1532" y="437" width="797" height="3" fill="url(#cg79)"/>
<rect x="1532" y="440" width="797" height="3" fill="url(#cg80)"/>
<rect x="1532" y="443" width="797" height="3" fill="url(#cg81)"/>
<rect x="1532" y="446" width="797" height="3" fill="url(#cg82)"/>
<rect x="1532" y="449" width="797" height="3" fill="url(#cg83)"/>
<rect x="1532" y="452" width="797" height="3" fill="url(#cg84)"/>
<rect x="1532" y="455" width="797" height="3" fill="url(#cg85)"/>
<rect x="1532" y="458" width="797" height="3" fill="url(#cg86)"/>
<rect x="1532" y="461" width="797" height="3" fill="url(#cg87)"/>
<rect x="1532" y="464" width="797" height="3" fill="url(#cg88)"/>
<rect x="1532" y="467" width="797" height="3" fill="url(#cg89)"/>
<rect x="1532" y="470" width="797" height="3" fill="url(#cg90)"/>
<rect x="1532" y="473" width="797" height="3" fill="url(#cg91)"/>
<rect x="1532" y="476" width="797" height="3" fill="url(#cg92)"/>
<rect x="1532" y="479" width="797" height="3" fill="url(#cg93)"/>
<rect x="1532" y="482" width="797" height="3" fill="url(#cg94)"/>
<rect x="1532" y="485" width="797" height="3" fill="url(#cg95)"/>
<rect x="1532" y="488" width="797" height="3" fill="url(#cg96)"/>
<rect x="1532" y="491" width="797" height="3" fill="url(#cg97)"/>
<rect x="1532" y="494" width="797" height="3" fill="url(#cg98)"/>
<rect x="1532" y="497" width="797" height="3" fill="url(#cg99)"/>
<rect x="1532" y="500" width="797" height="3" fill="url(#cg100)"/>
<rect x="1532" y="503" width="797" height="3" fill="url(#cg101)"/>
<rect x="1532" y="506" width="797" height="3" fill="url(#cg102)"/>
<rect x="1532" y="509" width="797" height="3" fill="url(#cg103)"/>
<rect x="1532" y="512" width="797" height="3" fill="url(#cg104)"/>
<rect x="1532" y="515" width="797" height="3" fill="url(#cg105)"/>
<rect x="1532" y="518" width="797" height="3" fill="url(#cg106)"/>
<rect x="1532" y="521" width="797" height="3" fill="url(#cg107)"/>
<rect x="1532" y="524" width="797" height="3" fill="url(#cg108)"/>
<rect x="1532" y="527" width="797" height="3" fill="url(#cg109)"/>
<rect x="1532" y="530" width="797" height="3" fill="url(#cg110)"/>
<rect x="1532" y="533" width="797" height="3" fill="url(#cg111)"/>
<rect x="1532" y="536" width="797" height="3" fill="url(#cg112)"/>
<rect x="1532" y="539" width="797" height="3" fill="url(#cg113)"/>
<rect x="1532" y="542" width="797" height="3" fill="url(#cg114)"/>
<rect x="1532" y="545" width="797" height="3" fill="url(#cg115)"/>
<rect x="1532" y="548" width="797" height="3" fill="url(#cg116)"/>
<rect x="1532" y="551" width="797" height="3" fill="url(#cg117)"/>
<rect x="1532" y="554" width="797" height="3" fill="url(#cg118)"/>
<rect x="1532" y="557" width="797" height="3" fill="url(#cg119)"/>
<rect x="1532" y="560" width="797" height="3" fill="url(#cg120)"/>
<rect x="1532" y="563" width="797" height="3" fill="url(#cg121)"/>
<rect x="1532" y="566" width="797" height="3" fill="url(#cg122)"/>
<rect x="1532" y="569" width="797" height="3" fill="url(#cg123)"/>
<rect x="1532" y="572" width="797" height="3" fill="url(#cg124)"/>
<rect x="1532" y="575" width="797" height="3" fill="url(#cg125)"/>
<rect x="1532" y="578" width="797" height="3" fill="url(#cg126)"/>
<rect x="1532" y="581" width="797" height="3" fill="url(#cg127)"/>
<rect x="1532" y="584" width="797" height="3" fill="url(#cg128)"/>
<rect x="1532" y="587" width="797" height="3" fill="url(#cg129)"/>
<rect x="1532" y="590" width="797" height="3" fill="url(#cg130)"/>
<rect x="1532" y="593" width="797" height="3" fill="url(#cg131)"/>
<rect x="1532" y="596" width="797" height="3" fill="url(#cg132)"/>
<rect x="1532" y="599" width="797" height="3" fill="url(#cg133)"/>
<rect x="1532" y="602" width="797" height="3" fill="url(#cg134)"/>
<rect x="1532" y="605" width="797" height="3" fill="url(#cg135)"/>
<rect x="1532" y="608" width="797" height="3" fill="url(#cg136)"/>
<rect x="1532" y="611" width="797" height="3" fill="url(#cg137)"/>
<rect x="1532" y="614" width="797" height="3" fill="url(#cg138)"/>
<rect x="1532" y="617" width="797" height="3" fill="url(#cg139)"/>
<rect x="1532" y="620" width="797" height="3" fill="url(#cg140)"/>
<rect x="1532" y="623" width="797" height="3" fill="url(#cg141)"/>
<rect x="1532" y="626" width="797" height="3" fill="url(#cg142)"/>
<rect x="1532" y="629" width="797" height="3" fill="url(#cg143)"/>
<rect x="1532" y="632" width="797" height="3" fill="url(#cg144)"/>
<rect x="1532" y="635" width="797" height="3" fill="url(#cg145)"/>
<rect x="1532" y="638" width="797" height="3" fill="url(#cg146)"/>
<rect x="1532" y="641" width="797" height="3" fill="url(#cg147)"/>
<rect x="1532" y="644" width="797" height="3" fill="url(#cg148)"/>
<rect x="1532" y="647" width="797" height="3" fill="url(#cg149)"/>
<rect x="1532" y="650" width="797" height="3" fill="url(#cg150)"/>
<rect x="1532" y="653" width="797" height="3" fill="url(#cg151)"/>
<rect x="1532" y="656" width="797" height="3" fill="url(#cg152)"/>
<rect x="1532" y="659" width="797" height="3" fill="url(#cg153)"/>
<rect x="1532" y="662" width="797" height="3" fill="url(#cg154)"/>
<rect x="1532" y="665" width="797" height="3" fill="url(#cg155)"/>
<rect x="1532" y="668" width="797" height="3" fill="url(#cg156)"/>
<rect x="1532" y="671" width="797" height="3" fill="url(#cg157)"/>
<rect x="1532" y="674" width="797" height="3" fill="url(#cg158)"/>
<rect x="1532" y="677" width="797" height="3" fill="url(#cg159)"/>
<rect x="1532" y="680" width="797" height="3" fill="url(#cg160)"/>
<rect x="1532" y="683" width="797" height="3" fill="url(#cg161)"/>
<rect x="1532" y="686" width="797" height="3" fill="url(#cg162)"/>
<rect x="1532" y="689" width="797" height="3" fill="url(#cg163)"/>
<rect x="1532" y="692" width="797" height="3" fill="url(#cg164)"/>
<rect x="1532" y="695" width="797" height="3" fill="url(#cg165)"/>
<rect x="1532" y="698" width="797" height="3" fill="url(#cg166)"/>
<rect x="1532" y="701" width="797" height="3" fill="url(#cg167)"/>
<rect x="1532" y="704" width="797" height="3" fill="url(#cg168)"/>
<rect x="1532" y="707" width="797" height="3" fill="url(#cg169)"/>
<rect x="1532" y="710" width="797" height="3" fill="url(#cg170)"/>
<rect x="1532" y="713" width="797" height="3" fill="url(#cg171)"/>
<rect x="1532" y="716" width="797" height="3" fill="url(#cg172)"/>
<rect x="1532" y="719" width="797" height="3" fill="url(#cg173)"/>
<rect x="1532" y="722" width="797" height="3" fill="url(#cg174)"/>
<rect x="1532" y="725" width="797" height="3" fill="url(#cg175)"/>
<rect x="1532" y="728" width="797" height="3" fill="url(#cg176)"/>
<rect x="1532" y="731" width="797" height="3" fill="url(#cg177)"/>
<rect x="1532" y="734" width="797" height="3" fill="url(#cg178)"/>
<rect x="1532" y="737" width="797" height="3" fill="url(#cg179)"/>
<rect x="1532" y="740" width="797" height="3" fill="url(#cg180)"/>
<rect x="1532" y="743" width="797" height="3" fill="url(#cg181)"/>
<rect x="1532" y="746" width="797" height="3" fill="url(#cg182)"/>
<rect x="1532" y="749" width="797" height="3" fill="url(#cg183)"/>
<rect x="1532" y="752" width="797" height="3" fill="url(#cg184)"/>
<rect x="1532" y="755" width="797" height="3" fill="url(#cg185)"/>
<rect x="1532" y="758" width="797" height="3" fill="url(#cg186)"/>
<rect x="1532" y="761" width="797" height="3" fill="url(#cg187)"/>
<rect x="1532" y="764" width="797" height="3" fill="url(#cg188)"/>
<rect x="1532" y="767" width="797" height="3" fill="url(#cg189)"/>
<rect x="1532" y="770" width="797" height="3" fill="url(#cg190)"/>
<rect x="1532" y="773" width="797" height="3" fill="url(#cg191)"/>
<rect x="1532" y="776" width="797" height="3" fill="url(#cg192)"/>
<rect x="1532" y="779" width="797" height="3" fill="url(#cg193)"/>
<rect x="1532" y="782" width="797" height="3" fill="url(#cg194)"/>
<rect x="1532" y="785" width="797" height="3" fill="url(#cg195)"/>
<rect x="1532" y="788" width="797" height="3" fill="url(#cg196)"/>
<rect x="1532" y="791" width="797" height="3" fill="url(#cg197)"/>
<rect x="1532" y="794" width="797" height="3" fill="url(#cg198)"/>
<rect x="1532" y="797" width="797" height="3" fill="url(#cg199)"/>
<rect x="1532" y="800" width="797" height="3" fill="url(#cg200)"/>
<rect x="1532" y="803" width="797" height="3" fill="url(#cg201)"/>
<rect x="1532" y="806" width="797" height="3" fill="url(#cg202)"/>
<rect x="1532" y="809" width="797" height="3" fill="url(#cg203)"/>
<rect x="1532" y="812" width="797" height="3" fill="url(#cg204)"/>
<rect x="1532" y="815" width="797" height="3" fill="url(#cg205)"/>
<rect x="1532" y="818" width="797" height="3" fill="url(#cg206)"/>
<rect x="1532" y="821" width="797" height="3" fill="url(#cg207)"/>
<rect x="1532" y="824" width="797" height="3" fill="url(#cg208)"/>
<rect x="1532" y="827" width="797" height="3" fill="url(#cg209)"/>
<rect x="1532" y="830" width="797" height="3" fill="url(#cg210)"/>
<rect x="1532" y="833" width="797" height="3" fill="url(#cg211)"/>
<rect x="1532" y="836" width="797" height="3" fill="url(#cg212)"/>
<rect x="1532" y="839" width="797" height="3" fill="url(#cg213)"/>
<rect x="1532" y="842" width="797" height="3" fill="url(#cg214)"/>
<rect x="1532" y="845" width="797" height="3" fill="url(#cg215)"/>
<rect x="1532" y="848" width="797" height="3" fill="url(#cg216)"/>
<rect x="1532" y="851" width="797" height="3" fill="url(#cg217)"/>
<rect x="1532" y="854" width="797" height="3" fill="url(#cg218)"/>
<rect x="1532" y="857" width="797" height="3" fill="url(#cg219)"/>
<rect x="1532" y="860" width="797" height="3" fill="url(#cg220)"/>
<rect x="1532" y="863" width="797" height="3" fill="url(#cg221)"/>
<rect x="1532" y="866" width="797" height="3" fill="url(#cg222)"/>
<rect x="1532" y="869" width="797" height="3" fill="url(#cg223)"/>
<rect x="1532" y="872" width="797" height="3" fill="url(#cg224)"/>
<rect x="1532" y="875" width="797" height="3" fill="url(#cg225)"/>
<rect x="1532" y="878" width="797" height="3" fill="url(#cg226)"/>
<rect x="1532" y="881" width="797" height="3" fill="url(#cg227)"/>
<rect x="1532" y="884" width="797" height="3" fill="url(#cg228)"/></g>
<clipPath id="insclip"><rect x="2127" y="206" width="306" height="257"/></clipPath>
<clipPath id="itriclip"><path d="M3588.0 1210.5L1570.8 -139.5L680.8 2560.5Z"/></clipPath>
<linearGradient id="ig0" gradientUnits="userSpaceOnUse" x1="2127" x2="2433" y1="0" y2="0"><stop offset="0.000" stop-color="#afff00"/><stop offset="0.850" stop-color="#fff900"/><stop offset="1.000" stop-color="#ffea00"/></linearGradient>
<linearGradient id="ig1" gradientUnits="userSpaceOnUse" x1="2127" x2="2433" y1="0" y2="0"><stop offset="0.000" stop-color="#b0ff00"/><stop offset="0.837" stop-color="#fff800"/><stop offset="1.000" stop-color="#ffe800"/></linearGradient>
<linearGradient id="ig2" gradientUnits="userSpaceOnUse" x1="2127" x2="2433" y1="0" y2="0"><stop offset="0.000" stop-color="#b1ff00"/><stop offset="0.817" stop-color="#fff900"/><stop offset="1.000" stop-color="#ffe700"/></linearGradient>
<linearGradient id="ig3" gradientUnits="userSpaceOnUse" x1="2127" x2="2433" y1="0" y2="0"><stop offset="0.000" stop-color="#b2ff00"/><stop offset="0.804" stop-color="#fff900"/><stop offset="1.000" stop-color="#ffe600"/></linearGradient>
<linearGradient id="ig4" gradientUnits="userSpaceOnUse" x1="2127" x2="2433" y1="0" y2="0"><stop offset="0.000" stop-color="#b4ff00"/><stop offset="0.791" stop-color="#fff900"/><stop offset="1.000" stop-color="#ffe400"/></linearGradient>
<linearGradient id="ig5" gradientUnits="userSpaceOnUse" x1="2127" x2="2433" y1="0" y2="0"><stop offset="0.000" stop-color="#b5ff01"/><stop offset="0.778" stop-color="#fff900"/><stop offset="1.000" stop-color="#ffe300"/></linearGradient>
<linearGradient id="ig6" gradientUnits="userSpaceOnUse" x1="2127" x2="2433" y1="0" y2="0"><stop offset="0.000" stop-color="#b6ff01"/><stop offset="0.765" stop-color="#fff900"/><stop offset="1.000" stop-color="#ffe100"/></linearGradient>
<linearGradient id="ig7" gradientUnits="userSpaceOnUse" x1="2127" x2="2433" y1="0" y2="0"><stop offset="0.000" stop-color="#b7ff02"/><stop offset="0.752" stop-color="#fff800"/><stop offset="1.000" stop-color="#ffe000"/></linearGradient>
<linearGradient id="ig8" gradientUnits="userSpaceOnUse" x1="2127" x2="2433" y1="0" y2="0"><stop offset="0.000" stop-color="#b8ff03"/><stop offset="0.732" stop-color="#fff900"/><stop offset="1.000" stop-color="#ffdf00"/></linearGradient>
<linearGradient id="ig9" gradientUnits="userSpaceOnUse" x1="2127" x2="2433" y1="0" y2="0"><stop offset="0.000" stop-color="#baff03"/><stop offset="0.719" stop-color="#fff900"/><stop offset="1.000" stop-color="#ffdd00"/></linearGradient>
<linearGradient id="ig10" gradientUnits="userSpaceOnUse" x1="2127" x2="2433" y1="0" y2="0"><stop offset="0.000" stop-color="#bbff04"/><stop offset="0.706" stop-color="#fff900"/><stop offset="1.000" stop-color="#ffdc00"/></linearGradient>
<linearGradient id="ig11" gradientUnits="userSpaceOnUse" x1="2127" x2="2433" y1="0" y2="0"><stop offset="0.000" stop-color="#bcff05"/><stop offset="0.693" stop-color="#fff900"/><stop offset="1.000" stop-color="#ffdb00"/></linearGradient>
<linearGradient id="ig12" gradientUnits="userSpaceOnUse" x1="2127" x2="2433" y1="0" y2="0"><stop offset="0.000" stop-color="#bdff05"/><stop offset="0.680" stop-color="#fff900"/><stop offset="1.000" stop-color="#ffd900"/></linearGradient>
<linearGradient id="ig13" gradientUnits="userSpaceOnUse" x1="2127" x2="2433" y1="0" y2="0"><stop offset="0.000" stop-color="#bfff06"/><stop offset="0.667" stop-color="#fff800"/><stop offset="1.000" stop-color="#ffd800"/></linearGradient>
<linearGradient id="ig14" gradientUnits="userSpaceOnUse" x1="2127" x2="2433" y1="0" y2="0"><stop offset="0.000" stop-color="#c0ff07"/><stop offset="0.647" stop-color="#fff900"/><stop offset="1.000" stop-color="#ffd700"/></linearGradient>
<linearGradient id="ig15" gradientUnits="userSpaceOnUse" x1="2127" x2="2433" y1="0" y2="0"><stop offset="0.000" stop-color="#c1ff07"/><stop offset="0.634" stop-color="#fff900"/><stop offset="1.000" stop-color="#ffd600"/></linearGradient>
<linearGradient id="ig16" gradientUnits="userSpaceOnUse" x1="2127" x2="2433" y1="0" y2="0"><stop offset="0.000" stop-color="#c2ff08"/><stop offset="0.621" stop-color="#fff900"/><stop offset="1.000" stop-color="#ffd400"/></linearGradient>
<linearGradient id="ig17" gradientUnits="userSpaceOnUse" x1="2127" x2="2433" y1="0" y2="0"><stop offset="0.000" stop-color="#c4ff09"/><stop offset="0.608" stop-color="#fff900"/><stop offset="1.000" stop-color="#ffd300"/></linearGradient>
<linearGradient id="ig18" gradientUnits="userSpaceOnUse" x1="2127" x2="2433" y1="0" y2="0"><stop offset="0.000" stop-color="#c5ff09"/><stop offset="0.595" stop-color="#fff800"/><stop offset="1.000" stop-color="#ffd200"/></linearGradient>
<linearGradient id="ig19" gradientUnits="userSpaceOnUse" x1="2127" x2="2433" y1="0" y2="0"><stop offset="0.000" stop-color="#c6ff0a"/><stop offset="0.582" stop-color="#fff800"/><stop offset="1.000" stop-color="#ffd000"/></linearGradient>
<linearGradient id="ig20" gradientUnits="userSpaceOnUse" x1="2127" x2="2433" y1="0" y2="0"><stop offset="0.000" stop-color="#c8ff0b"/><stop offset="0.569" stop-color="#fff800"/><stop offset="1.000" stop-color="#ffcf00"/></linearGradient>
<linearGradient id="ig21" gradientUnits="userSpaceOnUse" x1="2127" x2="2433" y1="0" y2="0"><stop offset="0.000" stop-color="#c9ff0c"/><stop offset="0.549" stop-color="#fff900"/><stop offset="1.000" stop-color="#ffce00"/></linearGradient>
<linearGradient id="ig22" gradientUnits="userSpaceOnUse" x1="2127" x2="2433" y1="0" y2="0"><stop offset="0.000" stop-color="#caff0c"/><stop offset="0.536" stop-color="#fff900"/><stop offset="1.000" stop-color="#ffcd00"/></linearGradient>
<linearGradient id="ig23" gradientUnits="userSpaceOnUse" x1="2127" x2="2433" y1="0" y2="0"><stop offset="0.000" stop-color="#ccff0d"/><stop offset="0.523" stop-color="#fff901"/><stop offset="1.000" stop-color="#ffcb00"/></linearGradient>
<linearGradient id="ig24" gradientUnits="userSpaceOnUse" x1="2127" x2="2433" y1="0" y2="0"><stop offset="0.000" stop-color="#cdff0e"/><stop offset="0.510" stop-color="#fff802"/><stop offset="1.000" stop-color="#ffca00"/></linearGradient>
<linearGradient id="ig25" gradientUnits="userSpaceOnUse" x1="2127" x2="2433" y1="0" y2="0"><stop offset="0.000" stop-color="#ceff0e"/><stop offset="0.497" stop-color="#fff803"/><stop offset="1.000" stop-color="#ffc900"/></linearGradient>
<linearGradient id="ig26" gradientUnits="userSpaceOnUse" x1="2127" x2="2433" y1="0" y2="0"><stop offset="0.000" stop-color="#d0ff0f"/><stop offset="0.484" stop-color="#fff804"/><stop offset="1.000" stop-color="#ffc700"/></linearGradient>
<linearGradient id="ig27" gradientUnits="userSpaceOnUse" x1="2127" x2="2433" y1="0" y2="0"><stop offset="0.000" stop-color="#d1ff10"/><stop offset="0.471" stop-color="#fff805"/><stop offset="1.000" stop-color="#ffc600"/></linearGradient>
<linearGradient id="ig28" gradientUnits="userSpaceOnUse" x1="2127" x2="2433" y1="0" y2="0"><stop offset="0.000" stop-color="#d2ff11"/><stop offset="0.451" stop-color="#fff906"/><stop offset="1.000" stop-color="#ffc500"/></linearGradient>
<linearGradient id="ig29" gradientUnits="userSpaceOnUse" x1="2127" x2="2433" y1="0" y2="0"><stop offset="0.000" stop-color="#d4ff11"/><stop offset="0.438" stop-color="#fff907"/><stop offset="1.000" stop-color="#ffc400"/></linearGradient>
<linearGradient id="ig30" gradientUnits="userSpaceOnUse" x1="2127" x2="2433" y1="0" y2="0"><stop offset="0.000" stop-color="#d5ff12"/><stop offset="0.425" stop-color="#fff808"/><stop offset="1.000" stop-color="#ffc300"/></linearGradient>
<linearGradient id="ig31" gradientUnits="userSpaceOnUse" x1="2127" x2="2433" y1="0" y2="0"><stop offset="0.000" stop-color="#d7ff13"/><stop offset="0.412" stop-color="#fff809"/><stop offset="1.000" stop-color="#ffc100"/></linearGradient>
<linearGradient id="ig32" gradientUnits="userSpaceOnUse" x1="2127" x2="2433" y1="0" y2="0"><stop offset="0.000" stop-color="#d8ff14"/><stop offset="0.399" stop-color="#fff80a"/><stop offset="1.000" stop-color="#ffc000"/></linearGradient>
<linearGradient id="ig33" gradientUnits="userSpaceOnUse" x1="2127" x2="2433" y1="0" y2="0"><stop offset="0.000" stop-color="#daff15"/><stop offset="0.386" stop-color="#fff80b"/><stop offset="1.000" stop-color="#ffbf00"/></linearGradient>
<linearGradient id="ig34" gradientUnits="userSpaceOnUse" x1="2127" x2="2433" y1="0" y2="0"><stop offset="0.000" stop-color="#dbff15"/><stop offset="0.373" stop-color="#fff80c"/><stop offset="1.000" stop-color="#ffbe00"/></linearGradient>
<linearGradient id="ig35" gradientUnits="userSpaceOnUse" x1="2127" x2="2433" y1="0" y2="0"><stop offset="0.000" stop-color="#ddff16"/><stop offset="0.359" stop-color="#fff80e"/><stop offset="1.000" stop-color="#ffbc00"/></linearGradient>
<linearGradient id="ig36" gradientUnits="userSpaceOnUse" x1="2127" x2="2433" y1="0" y2="0"><stop offset="0.000" stop-color="#deff17"/><stop offset="0.340" stop-color="#fff80f"/><stop offset="1.000" stop-color="#ffbb00"/></linearGradient>
<linearGradient id="ig37" gradientUnits="userSpaceOnUse" x1="2127" x2="2433" y1="0" y2="0"><stop offset="0.000" stop-color="#e0ff18"/><stop offset="0.327" stop-color="#fff810"/><stop offset="1.000" stop-color="#ffba00"/></linearGradient>
<linearGradient id="ig38" gradientUnits="userSpaceOnUse" x1="2127" x2="2433" y1="0" y2="0"><stop offset="0.000" stop-color="#e1ff19"/><stop offset="0.314" stop-color="#fff811"/><stop offset="1.000" stop-color="#ffb900"/></linearGradient>
<linearGradient id="ig39" gradientUnits="userSpaceOnUse" x1="2127" x2="2433" y1="0" y2="0"><stop offset="0.000" stop-color="#e3ff19"/><stop offset="0.301" stop-color="#fff812"/><stop offset="1.000" stop-color="#ffb801"/></linearGradient>
<linearGradient id="ig40" gradientUnits="userSpaceOnUse" x1="2127" x2="2433" y1="0" y2="0"><stop offset="0.000" stop-color="#e4ff1a"/><stop offset="0.288" stop-color="#fff813"/><stop offset="1.000" stop-color="#ffb601"/></linearGradient>
<linearGradient id="ig41" gradientUnits="userSpaceOnUse" x1="2127" x2="2433" y1="0" y2="0"><stop offset="0.000" stop-color="#e6ff1b"/><stop offset="0.275" stop-color="#fff814"/><stop offset="1.000" stop-color="#ffb502"/></linearGradient>
<linearGradient id="ig42" gradientUnits="userSpaceOnUse" x1="2127" x2="2433" y1="0" y2="0"><stop offset="0.000" stop-color="#e7ff1c"/><stop offset="0.261" stop-color="#fff815"/><stop offset="1.000" stop-color="#ffb402"/></linearGradient>
<g id="insrows"><rect x="2127" y="206" width="306" height="6" fill="url(#ig0)"/>
<rect x="2127" y="212" width="306" height="6" fill="url(#ig1)"/>
<rect x="2127" y="218" width="306" height="6" fill="url(#ig2)"/>
<rect x="2127" y="224" width="306" height="6" fill="url(#ig3)"/>
<rect x="2127" y="230" width="306" height="6" fill="url(#ig4)"/>
<rect x="2127" y="236" width="306" height="6" fill="url(#ig5)"/>
<rect x="2127" y="242" width="306" height="6" fill="url(#ig6)"/>
<rect x="2127" y="248" width="306" height="6" fill="url(#ig7)"/>
<rect x="2127" y="254" width="306" height="6" fill="url(#ig8)"/>
<rect x="2127" y="260" width="306" height="6" fill="url(#ig9)"/>
<rect x="2127" y="266" width="306" height="6" fill="url(#ig10)"/>
<rect x="2127" y="272" width="306" height="6" fill="url(#ig11)"/>
<rect x="2127" y="278" width="306" height="6" fill="url(#ig12)"/>
<rect x="2127" y="284" width="306" height="6" fill="url(#ig13)"/>
<rect x="2127" y="290" width="306" height="6" fill="url(#ig14)"/>
<rect x="2127" y="296" width="306" height="6" fill="url(#ig15)"/>
<rect x="2127" y="302" width="306" height="6" fill="url(#ig16)"/>
<rect x="2127" y="308" width="306" height="6" fill="url(#ig17)"/>
<rect x="2127" y="314" width="306" height="6" fill="url(#ig18)"/>
<rect x="2127" y="320" width="306" height="6" fill="url(#ig19)"/>
<rect x="2127" y="326" width="306" height="6" fill="url(#ig20)"/>
<rect x="2127" y="332" width="306" height="6" fill="url(#ig21)"/>
<rect x="2127" y="338" width="306" height="6" fill="url(#ig22)"/>
<rect x="2127" y="344" width="306" height="6" fill="url(#ig23)"/>
<rect x="2127" y="350" width="306" height="6" fill="url(#ig24)"/>
<rect x="2127" y="356" width="306" height="6" fill="url(#ig25)"/>
<rect x="2127" y="362" width="306" height="6" fill="url(#ig26)"/>
<rect x="2127" y="368" width="306" height="6" fill="url(#ig27)"/>
<rect x="2127" y="374" width="306" height="6" fill="url(#ig28)"/>
<rect x="2127" y="380" width="306" height="6" fill="url(#ig29)"/>
<rect x="2127" y="386" width="306" height="6" fill="url(#ig30)"/>
<rect x="2127" y="392" width="306" height="6" fill="url(#ig31)"/>
<rect x="2127" y="398" width="306" height="6" fill="url(#ig32)"/>
<rect x="2127" y="404" width="306" height="6" fill="url(#ig33)"/>
<rect x="2127" y="410" width="306" height="6" fill="url(#ig34)"/>
<rect x="2127" y="416" width="306" height="6" fill="url(#ig35)"/>
<rect x="2127" y="422" width="306" height="6" fill="url(#ig36)"/>
<rect x="2127" y="428" width="306" height="6" fill="url(#ig37)"/>
<rect x="2127" y="434" width="306" height="6" fill="url(#ig38)"/>
<rect x="2127" y="440" width="306" height="6" fill="url(#ig39)"/>
<rect x="2127" y="446" width="306" height="6" fill="url(#ig40)"/>
<rect x="2127" y="452" width="306" height="6" fill="url(#ig41)"/>
<rect x="2127" y="458" width="306" height="6" fill="url(#ig42)"/></g>
<linearGradient id="rbar" x1="0" x2="0" y1="0" y2="1"><stop offset="0" stop-color="#ff5858"/><stop offset="1" stop-color="#ff4444"/></linearGradient>
<linearGradient id="gbar" x1="0" x2="0" y1="0" y2="1"><stop offset="0" stop-color="#52b056"/><stop offset="1" stop-color="#3e9e40"/></linearGradient>
<linearGradient id="bbar" x1="0" x2="0" y1="0" y2="1"><stop offset="0" stop-color="#5858ff"/><stop offset="1" stop-color="#4848ff"/></linearGradient>
<linearGradient id="thead" x1="0" x2="0" y1="0" y2="1"><stop offset="0" stop-color="#363636"/><stop offset=".5" stop-color="#333"/><stop offset=".52" stop-color="#181818"/><stop offset="1" stop-color="#111"/></linearGradient>
<linearGradient id="trd" x1="0" x2="0" y1="0" y2="1"><stop offset="0" stop-color="#454545"/><stop offset="1" stop-color="#414141"/></linearGradient>
<linearGradient id="trl" x1="0" x2="0" y1="0" y2="1"><stop offset="0" stop-color="#838383"/><stop offset="1" stop-color="#7b7b7b"/></linearGradient>
<linearGradient id="botg" x1="0" x2="0" y1="0" y2="1"><stop offset="0" stop-color="#484848"/><stop offset="1" stop-color="#2c2c2c"/></linearGradient>
<linearGradient id="swb" x1="0" x2="0" y1="0" y2="1"><stop offset="0" stop-color="#a8a8a8"/><stop offset="1" stop-color="#5e5e5e"/></linearGradient>
<linearGradient id="swbsel" x1="0" x2="0" y1="0" y2="1"><stop offset="0" stop-color="#202020"/><stop offset="1" stop-color="#2e2e2e"/></linearGradient>
<linearGradient id="ctl" x1="0" x2="0" y1="0" y2="1"><stop offset="0" stop-color="#b4b4b4"/><stop offset="1" stop-color="#787878"/></linearGradient>
<linearGradient id="cgc" x1="0" x2="0" y1="0" y2="1"><stop offset="0" stop-color="#808080"/><stop offset="1" stop-color="#b8b8b8"/></linearGradient></defs><rect width="2549" height="1380" fill="#333333"/>
<rect width="2549" height="34" fill="#ffffff"/>
<rect y="34" width="2549" height="99" fill="#222222"/>
<rect y="133" width="2" height="1154" fill="#262626"/>
<rect x="-4.6" y="-4.6" width="9.2" height="9.2" rx="1.8" fill="#f5c518" transform="translate(13.8 10.4) rotate(45)"/>
<rect x="-4.6" y="-4.6" width="9.2" height="9.2" rx="1.8" fill="#38b6ea" transform="translate(7.4 17.0) rotate(45)"/>
<rect x="-4.6" y="-4.6" width="9.2" height="9.2" rx="1.8" fill="#1ec41e" transform="translate(20.3 17.0) rotate(45)"/>
<rect x="-4.6" y="-4.6" width="9.2" height="9.2" rx="1.8" fill="#e41e4e" transform="translate(13.8 23.4) rotate(45)"/>
<text x="31.0" y="24.0" font-size="18.0" fill="#111" textLength="580.0" lengthAdjust="spacingAndGlyphs" >Calman 2025 Calman Ultimate for Business 54 Days Remaining&#160; - Untitled</text>
<rect x="2376" y="16" width="15" height="1.2" fill="#222"/>
<rect x="2445.5" y="11.5" width="11" height="11" fill="none" stroke="#222" stroke-width="1.1"/>
<path d="M2448.5 11.5V8.5H2459.5V19.5H2456.5" fill="none" stroke="#222" stroke-width="1.1"/>
<path d="M2516 10L2530 24M2530 10L2516 24" stroke="#222" stroke-width="1.3"/>
<path d="M1 34H274V71Q274 78 267 78H8Q1 78 1 71Z" fill="url(#redg)"/>
<path d="M1 34V71Q1 78 8 78H267Q274 78 274 71V34" fill="none" stroke="#9a3030" stroke-width="1"/>
<g transform="translate(51.5 55.4) rotate(45)" fill="#fff">
<rect x="-4.1" y="-4.1" width="2.8" height="2.8"/>
<rect x="1.3" y="-4.1" width="2.8" height="2.8"/>
<rect x="-4.1" y="1.3" width="2.8" height="2.8"/>
<rect x="1.3" y="1.3" width="2.8" height="2.8"/>
<rect x="-6.6" y="-6.6" width="5.6" height="5.6" rx="1.3"/><rect x="1" y="-6.6" width="5.6" height="5.6" rx="1.3"/><rect x="-6.6" y="1" width="5.6" height="5.6" rx="1.3"/><rect x="1" y="1" width="5.6" height="5.6" rx="1.3"/>
</g>
<g transform="translate(51.5 55.4) rotate(45)" fill="none" stroke="#fff" stroke-width="4.2" stroke-linecap="butt" stroke-linejoin="round">
<path d="M-1.6 -10.3H-8.3Q-10.3 -10.3 -10.3 -8.3V-1.6M1.6 -10.3H8.3Q10.3 -10.3 10.3 -8.3V-1.6M10.3 1.6V8.3Q10.3 10.3 8.3 10.3H1.6M-1.6 10.3H-8.3Q-10.3 10.3 -10.3 8.3V1.6"/>
</g>
<g fill="none" stroke="#fff" stroke-width="4.3">
<path d="M91.2 49.6A8.2 8.2 0 1 0 91.2 62.4"/>
<circle cx="102.6" cy="56" r="8.1"/><path d="M110.6 45.5V66.2"/>
<path d="M119.3 36.8V66.2"/>
<path d="M127.3 66.2V53.5A6.8 6.8 0 0 1 140.9 53.5V66.2M140.9 53.5A6.85 6.85 0 0 1 154.6 53.5V66.2"/>
<circle cx="167.9" cy="56" r="8.2"/><path d="M178 45.5V66.2"/>
<path d="M185.5 66.2V53.8A7.65 7.65 0 0 1 200.8 53.8V66.2"/>
</g>
<circle cx="248" cy="55" r="14.5" fill="url(#redbtn)"/>
<path d="M241 53H255L248 60.5Z" fill="#fff"/>
<rect x="284" y="53" width="2265" height="6.5" fill="url(#rainbow)"/>
<path d="M-5 87H34Q40 87 40 93V122Q40 128 34 128H-5Z" fill="url(#gbtn)" stroke="#d8d8d8" stroke-width="1.6"/>
<circle cx="19" cy="107.5" r="13.5" fill="#6e6e6e" opacity=".8"/>
<path d="M15.5 99.5L23 106.5L15.5 113.5Z" fill="#fff"/>
<path d="M44 132V93Q44 87 50 87H175Q181.5 87 181.5 93V132Z" fill="url(#tabg)"/>
<path d="M44 132V93Q44 87 50 87H175Q181.5 87 181.5 93V132" fill="none" stroke="#8c8c8c" stroke-width="1.2"/>
<rect x="131" y="88" width="1.2" height="44" fill="#8c8c8c"/>
<text x="53.0" y="116.5" font-size="17.5" fill="#e8e8e8" textLength="70.0" lengthAdjust="spacingAndGlyphs" >History 1</text>
<circle cx="154.5" cy="112" r="13" fill="#3a3a3a"/>
<path d="M150 113H159M154.5 108.5V117.5" stroke="#8a8a8a" stroke-width="1.2"/>
<path d="M1704.5 132V92Q1704.5 86.5 1709.5 86.5H1913.5 Q1918.5 86.5 1918.5 92V132Z" fill="url(#pang)"/>
<path d="M1704.5 132V92Q1704.5 86.5 1709.5 86.5H1713.5V132Z" fill="#1ee81e"/>
<text x="1717.5" y="104.0" font-size="15.5" fill="#f0f0f0" textLength="98.0" lengthAdjust="spacingAndGlyphs" >X-Rite i1Pro 3</text>
<text x="1717.5" y="125.5" font-size="15.5" fill="#f0f0f0" textLength="84.0" lengthAdjust="spacingAndGlyphs" >Direct View</text>
<circle cx="1836.0" cy="109.0" r="14" fill="url(#ddg)"/>
<path d="M1828.5 107.5H1843.5L1836.0 115.3Z" fill="#fff"/>
<rect x="1865" y="90" width="1.5" height="42" fill="#3a3a3a"/>
<circle cx="1896" cy="108.5" r="18.5" fill="#0000e6" stroke="#fff" stroke-width="1.6"/>
<text x="1896.0" y="113.5" font-size="14.0" fill="#fff" text-anchor="middle" textLength="22.0" lengthAdjust="spacingAndGlyphs" >718</text>
<path d="M1928.0 132V92Q1928.0 86.5 1933.0 86.5H2234.5 Q2239.5 86.5 2239.5 92V132Z" fill="url(#pang)"/>
<path d="M1928.0 132V92Q1928.0 86.5 1933.0 86.5H1937.0V132Z" fill="#1ee81e"/>
<text x="1941.5" y="104.0" font-size="15.5" fill="#f0f0f0" textLength="254.0" lengthAdjust="spacingAndGlyphs" >CalMAN Client 3 Pattern Generator</text>
<circle cx="2216.0" cy="109.0" r="14" fill="url(#ddg)"/>
<path d="M2208.5 107.5H2223.5L2216.0 115.3Z" fill="#fff"/>
<path d="M2249.5 132V92Q2249.5 86.5 2254.5 86.5H2458.5 Q2463.5 86.5 2463.5 92V132Z" fill="url(#pang)"/>
<path d="M2249.5 132V92Q2249.5 86.5 2254.5 86.5H2258.5V132Z" fill="#e8e800"/>
<text x="2262.5" y="104.0" font-size="15.5" fill="#f0f0f0" textLength="158.0" lengthAdjust="spacingAndGlyphs" >Direct Display Control</text>
<circle cx="2440.0" cy="109.0" r="14" fill="url(#ddg)"/>
<path d="M2432.5 107.5H2447.5L2440.0 115.3Z" fill="#fff"/>
<rect x="2469" y="87" width="49" height="41" rx="6" fill="url(#gbtn)" stroke="#d8d8d8" stroke-width="1.5"/>
<circle cx="2493.8" cy="107.8" r="14" fill="url(#ddg2)"/>
<g transform="translate(2493.8 107.3)" fill="#d0d0d0"><rect x="-1.5" y="-9.4" width="3" height="3.2" rx=".6" transform="rotate(0)"/><rect x="-1.5" y="-9.4" width="3" height="3.2" rx=".6" transform="rotate(45)"/><rect x="-1.5" y="-9.4" width="3" height="3.2" rx=".6" transform="rotate(90)"/><rect x="-1.5" y="-9.4" width="3" height="3.2" rx=".6" transform="rotate(135)"/><rect x="-1.5" y="-9.4" width="3" height="3.2" rx=".6" transform="rotate(180)"/><rect x="-1.5" y="-9.4" width="3" height="3.2" rx=".6" transform="rotate(225)"/><rect x="-1.5" y="-9.4" width="3" height="3.2" rx=".6" transform="rotate(270)"/><rect x="-1.5" y="-9.4" width="3" height="3.2" rx=".6" transform="rotate(315)"/></g>
<circle cx="2493.8" cy="107.3" r="5.6" fill="none" stroke="#d0d0d0" stroke-width="2.8"/>
<path d="M2549 87H2526Q2520 87 2520 93V122Q2520 128 2526 128H2549" fill="url(#gbtn)" stroke="#d8d8d8" stroke-width="1.5"/>
<circle cx="2540" cy="107.8" r="13.5" fill="url(#ddg2)"/>
<path d="M2544 99V114L2536 106.5Z" fill="#fff"/>
<text x="135.5" y="216.0" font-size="56.0" fill="#f2f2f2" textLength="458.0" lengthAdjust="spacingAndGlyphs" stroke="#f2f2f2" stroke-width="0.7">Saturation Sweeps</text>
<text x="356.8" y="285.5" font-size="19.5" fill="#d4d4d4" text-anchor="middle" textLength="111.0" lengthAdjust="spacingAndGlyphs" >DeltaE 2000</text>
<rect x="161.8" y="293.0" width="441.1" height="584.1" fill="#232323"/>
<rect x="219.6" y="293.0" width="2" height="584.1" fill="#9c9c9c"/>
<rect x="278.4" y="293.0" width="2" height="584.1" fill="#9c9c9c"/>
<rect x="337.2" y="293.0" width="2" height="584.1" fill="#9c9c9c"/>
<rect x="396.1" y="293.0" width="2" height="584.1" fill="#9c9c9c"/>
<rect x="454.9" y="293.0" width="2" height="584.1" fill="#9c9c9c"/>
<rect x="513.7" y="293.0" width="2" height="584.1" fill="#9c9c9c"/>
<rect x="572.5" y="293.0" width="2" height="584.1" fill="#9c9c9c"/>
<path d="M161.8 293.0V877.1H602.9V293.0Z" fill="none" stroke="#9c9c9c" stroke-width="2"/>
<rect x="154" y="292.0" width="8" height="2" fill="#c8c8c8"/>
<rect x="154" y="389.4" width="8" height="2" fill="#9c9c9c"/>
<rect x="154" y="486.7" width="8" height="2" fill="#9c9c9c"/>
<rect x="154" y="584.0" width="8" height="2" fill="#9c9c9c"/>
<rect x="154" y="681.4" width="8" height="2" fill="#9c9c9c"/>
<rect x="154" y="778.8" width="8" height="2" fill="#9c9c9c"/>
<rect x="154" y="876.1" width="8" height="2" fill="#9c9c9c"/>
<rect x="160.8" y="877.1" width="2" height="8.5" fill="#c8c8c8"/>
<text x="161.8" y="907.5" font-size="19.5" fill="#d4d4d4" text-anchor="middle" >0</text>
<rect x="219.6" y="877.1" width="2" height="8.5" fill="#c8c8c8"/>
<text x="220.6" y="907.5" font-size="19.5" fill="#d4d4d4" text-anchor="middle" >2</text>
<rect x="278.4" y="877.1" width="2" height="8.5" fill="#c8c8c8"/>
<text x="279.4" y="907.5" font-size="19.5" fill="#d4d4d4" text-anchor="middle" >4</text>
<rect x="337.2" y="877.1" width="2" height="8.5" fill="#c8c8c8"/>
<text x="338.2" y="907.5" font-size="19.5" fill="#d4d4d4" text-anchor="middle" >6</text>
<rect x="396.1" y="877.1" width="2" height="8.5" fill="#c8c8c8"/>
<text x="397.1" y="907.5" font-size="19.5" fill="#d4d4d4" text-anchor="middle" >8</text>
<rect x="454.9" y="877.1" width="2" height="8.5" fill="#c8c8c8"/>
<text x="455.9" y="907.5" font-size="19.5" fill="#d4d4d4" text-anchor="middle" >10</text>
<rect x="513.7" y="877.1" width="2" height="8.5" fill="#c8c8c8"/>
<text x="514.7" y="907.5" font-size="19.5" fill="#d4d4d4" text-anchor="middle" >12</text>
<rect x="572.5" y="877.1" width="2" height="8.5" fill="#c8c8c8"/>
<text x="573.5" y="907.5" font-size="19.5" fill="#d4d4d4" text-anchor="middle" >14</text>
<text x="160.0" y="348.7" font-size="19.5" fill="#d4d4d4" text-anchor="end" textLength="51.0" lengthAdjust="spacingAndGlyphs" >100%</text>
<text x="160.0" y="446.0" font-size="19.5" fill="#d4d4d4" text-anchor="end" textLength="38.0" lengthAdjust="spacingAndGlyphs" >80%</text>
<text x="160.0" y="543.4" font-size="19.5" fill="#d4d4d4" text-anchor="end" textLength="38.0" lengthAdjust="spacingAndGlyphs" >60%</text>
<text x="160.0" y="640.7" font-size="19.5" fill="#d4d4d4" text-anchor="end" textLength="38.0" lengthAdjust="spacingAndGlyphs" >40%</text>
<text x="160.0" y="738.1" font-size="19.5" fill="#d4d4d4" text-anchor="end" textLength="38.0" lengthAdjust="spacingAndGlyphs" >20%</text>
<text x="160.0" y="835.4" font-size="19.5" fill="#d4d4d4" text-anchor="end" textLength="32.5" lengthAdjust="spacingAndGlyphs" >100</text>
<rect x="162.8" y="302.6" width="32.4" height="11.3" fill="#000"/>
<rect x="162.8" y="304.6" width="30.9" height="7.4" fill="url(#b0)"/>
<rect x="162.8" y="313.9" width="42.7" height="11.3" fill="#000"/>
<rect x="162.8" y="315.9" width="41.2" height="7.4" fill="url(#b1)"/>
<rect x="162.8" y="325.2" width="55.9" height="11.3" fill="#000"/>
<rect x="162.8" y="327.2" width="54.4" height="7.4" fill="url(#b2)"/>
<rect x="162.8" y="336.5" width="123.2" height="11.3" fill="#000"/>
<rect x="162.8" y="338.5" width="121.7" height="7.4" fill="url(#b3)"/>
<rect x="162.8" y="347.8" width="61.8" height="11.3" fill="#000"/>
<rect x="162.8" y="349.8" width="60.3" height="7.4" fill="url(#b4)"/>
<rect x="162.8" y="359.1" width="33.0" height="11.3" fill="#000"/>
<rect x="162.8" y="361.1" width="31.5" height="7.4" fill="url(#b5)"/>
<rect x="162.8" y="400.0" width="23.0" height="11.3" fill="#000"/>
<rect x="162.8" y="402.0" width="21.5" height="7.4" fill="url(#b6)"/>
<rect x="162.8" y="411.3" width="47.7" height="11.3" fill="#000"/>
<rect x="162.8" y="413.3" width="46.2" height="7.4" fill="url(#b7)"/>
<rect x="162.8" y="422.6" width="70.9" height="11.3" fill="#000"/>
<rect x="162.8" y="424.6" width="69.4" height="7.4" fill="url(#b8)"/>
<rect x="162.8" y="433.9" width="130.9" height="11.3" fill="#000"/>
<rect x="162.8" y="435.9" width="129.4" height="7.4" fill="url(#b9)"/>
<rect x="162.8" y="445.2" width="73.0" height="11.3" fill="#000"/>
<rect x="162.8" y="447.2" width="71.5" height="7.4" fill="url(#b10)"/>
<rect x="162.8" y="456.5" width="38.8" height="11.3" fill="#000"/>
<rect x="162.8" y="458.5" width="37.3" height="7.4" fill="url(#b11)"/>
<rect x="162.8" y="497.3" width="55.9" height="11.3" fill="#000"/>
<rect x="162.8" y="499.3" width="54.4" height="7.4" fill="url(#b12)"/>
<rect x="162.8" y="508.6" width="59.4" height="11.3" fill="#000"/>
<rect x="162.8" y="510.6" width="57.9" height="7.4" fill="url(#b13)"/>
<rect x="162.8" y="519.9" width="70.9" height="11.3" fill="#000"/>
<rect x="162.8" y="521.9" width="69.4" height="7.4" fill="url(#b14)"/>
<rect x="162.8" y="531.2" width="136.2" height="11.3" fill="#000"/>
<rect x="162.8" y="533.2" width="134.7" height="7.4" fill="url(#b15)"/>
<rect x="162.8" y="542.5" width="86.8" height="11.3" fill="#000"/>
<rect x="162.8" y="544.5" width="85.3" height="7.4" fill="url(#b16)"/>
<rect x="162.8" y="553.8" width="55.9" height="11.3" fill="#000"/>
<rect x="162.8" y="555.8" width="54.4" height="7.4" fill="url(#b17)"/>
<rect x="162.8" y="594.6" width="91.2" height="11.3" fill="#000"/>
<rect x="162.8" y="596.6" width="89.7" height="7.4" fill="url(#b18)"/>
<rect x="162.8" y="605.9" width="79.1" height="11.3" fill="#000"/>
<rect x="162.8" y="607.9" width="77.6" height="7.4" fill="url(#b19)"/>
<rect x="162.8" y="617.2" width="85.0" height="11.3" fill="#000"/>
<rect x="162.8" y="619.2" width="83.5" height="7.4" fill="url(#b20)"/>
<rect x="162.8" y="628.5" width="145.9" height="11.3" fill="#000"/>
<rect x="162.8" y="630.5" width="144.4" height="7.4" fill="url(#b21)"/>
<rect x="162.8" y="639.9" width="101.8" height="11.3" fill="#000"/>
<rect x="162.8" y="641.9" width="100.3" height="7.4" fill="url(#b22)"/>
<rect x="162.8" y="651.1" width="85.0" height="11.3" fill="#000"/>
<rect x="162.8" y="653.1" width="83.5" height="7.4" fill="url(#b23)"/>
<rect x="162.8" y="692.0" width="124.7" height="11.3" fill="#000"/>
<rect x="162.8" y="694.0" width="123.2" height="7.4" fill="url(#b24)"/>
<rect x="162.8" y="703.3" width="111.5" height="11.3" fill="#000"/>
<rect x="162.8" y="705.3" width="110.0" height="7.4" fill="url(#b25)"/>
<rect x="162.8" y="714.6" width="111.5" height="11.3" fill="#000"/>
<rect x="162.8" y="716.6" width="110.0" height="7.4" fill="url(#b26)"/>
<rect x="162.8" y="725.9" width="158.2" height="11.3" fill="#000"/>
<rect x="162.8" y="727.9" width="156.7" height="7.4" fill="url(#b27)"/>
<rect x="162.8" y="737.2" width="122.7" height="11.3" fill="#000"/>
<rect x="162.8" y="739.2" width="121.2" height="7.4" fill="url(#b28)"/>
<rect x="162.8" y="748.5" width="126.5" height="11.3" fill="#000"/>
<rect x="162.8" y="750.5" width="125.0" height="7.4" fill="url(#b29)"/>
<rect x="162.8" y="857.2" width="136.8" height="11.3" fill="#000"/>
<rect x="162.8" y="859.2" width="135.3" height="7.4" fill="url(#b30)"/>
<rect x="677.6" y="197.8" width="204.3" height="446.5" fill="#232323"/>
<rect x="677.6" y="196.8" width="204.3" height="2" fill="#9c9c9c"/>
<rect x="670.6" y="198.2" width="211.3" height="2" fill="#9c9c9c"/>
<text x="669.6" y="206.2" font-size="19.5" fill="#d4d4d4" text-anchor="end" >15</text>
<rect x="670.6" y="272.4" width="211.3" height="2" fill="#9c9c9c"/>
<text x="669.6" y="280.4" font-size="19.5" fill="#d4d4d4" text-anchor="end" >10</text>
<rect x="670.6" y="346.6" width="211.3" height="2" fill="#9c9c9c"/>
<text x="669.6" y="354.6" font-size="19.5" fill="#d4d4d4" text-anchor="end" >5</text>
<rect x="670.6" y="420.8" width="211.3" height="2" fill="#9c9c9c"/>
<text x="669.6" y="428.8" font-size="19.5" fill="#d4d4d4" text-anchor="end" >0</text>
<rect x="670.6" y="494.9" width="211.3" height="2" fill="#9c9c9c"/>
<text x="669.6" y="502.9" font-size="19.5" fill="#d4d4d4" text-anchor="end" >-5</text>
<rect x="670.6" y="569.1" width="211.3" height="2" fill="#9c9c9c"/>
<text x="669.6" y="577.1" font-size="19.5" fill="#d4d4d4" text-anchor="end" >-10</text>
<rect x="670.6" y="643.3" width="211.3" height="2" fill="#9c9c9c"/>
<text x="669.6" y="651.3" font-size="19.5" fill="#d4d4d4" text-anchor="end" >-15</text>
<rect x="676.6" y="196.8" width="2" height="455.6" fill="#9c9c9c"/>
<rect x="880.9" y="196.8" width="2" height="455.6" fill="#9c9c9c"/>
<text x="760.2" y="190.0" font-size="19.5" fill="#d4d4d4" text-anchor="middle" >Delta L</text>
<text x="780.2" y="667.5" font-size="19.5" fill="#d4d4d4" text-anchor="middle" textLength="51.0" lengthAdjust="spacingAndGlyphs" >100%</text>
<rect x="698.7" y="409.6" width="161.3" height="13.6" fill="#000"/>
<rect x="700.7" y="411.6" width="157.3" height="9.6" fill="url(#ybar)"/>
<rect x="956.8" y="197.8" width="203.9" height="446.5" fill="#232323"/>
<rect x="956.8" y="196.8" width="203.9" height="2" fill="#9c9c9c"/>
<rect x="949.8" y="198.2" width="210.9" height="2" fill="#9c9c9c"/>
<text x="948.8" y="206.2" font-size="19.5" fill="#d4d4d4" text-anchor="end" >15</text>
<rect x="949.8" y="272.4" width="210.9" height="2" fill="#9c9c9c"/>
<text x="948.8" y="280.4" font-size="19.5" fill="#d4d4d4" text-anchor="end" >10</text>
<rect x="949.8" y="346.6" width="210.9" height="2" fill="#9c9c9c"/>
<text x="948.8" y="354.6" font-size="19.5" fill="#d4d4d4" text-anchor="end" >5</text>
<rect x="949.8" y="420.8" width="210.9" height="2" fill="#9c9c9c"/>
<text x="948.8" y="428.8" font-size="19.5" fill="#d4d4d4" text-anchor="end" >0</text>
<rect x="949.8" y="494.9" width="210.9" height="2" fill="#9c9c9c"/>
<text x="948.8" y="502.9" font-size="19.5" fill="#d4d4d4" text-anchor="end" >-5</text>
<rect x="949.8" y="569.1" width="210.9" height="2" fill="#9c9c9c"/>
<text x="948.8" y="577.1" font-size="19.5" fill="#d4d4d4" text-anchor="end" >-10</text>
<rect x="949.8" y="643.3" width="210.9" height="2" fill="#9c9c9c"/>
<text x="948.8" y="651.3" font-size="19.5" fill="#d4d4d4" text-anchor="end" >-15</text>
<rect x="955.8" y="196.8" width="2" height="455.6" fill="#9c9c9c"/>
<rect x="1159.7" y="196.8" width="2" height="455.6" fill="#9c9c9c"/>
<text x="1039.2" y="190.0" font-size="19.5" fill="#d4d4d4" text-anchor="middle" >Delta C</text>
<text x="1059.2" y="667.5" font-size="19.5" fill="#d4d4d4" text-anchor="middle" textLength="51.0" lengthAdjust="spacingAndGlyphs" >100%</text>
<rect x="977.9" y="403.9" width="160.5" height="19.4" fill="#000"/>
<rect x="979.9" y="405.9" width="156.5" height="15.4" fill="url(#ybar)"/>
<rect x="1234.4" y="197.8" width="205.5" height="446.5" fill="#232323"/>
<rect x="1234.4" y="196.8" width="205.5" height="2" fill="#9c9c9c"/>
<rect x="1227.4" y="198.2" width="212.5" height="2" fill="#9c9c9c"/>
<text x="1226.4" y="206.2" font-size="19.5" fill="#d4d4d4" text-anchor="end" >15</text>
<rect x="1227.4" y="272.4" width="212.5" height="2" fill="#9c9c9c"/>
<text x="1226.4" y="280.4" font-size="19.5" fill="#d4d4d4" text-anchor="end" >10</text>
<rect x="1227.4" y="346.6" width="212.5" height="2" fill="#9c9c9c"/>
<text x="1226.4" y="354.6" font-size="19.5" fill="#d4d4d4" text-anchor="end" >5</text>
<rect x="1227.4" y="420.8" width="212.5" height="2" fill="#9c9c9c"/>
<text x="1226.4" y="428.8" font-size="19.5" fill="#d4d4d4" text-anchor="end" >0</text>
<rect x="1227.4" y="494.9" width="212.5" height="2" fill="#9c9c9c"/>
<text x="1226.4" y="502.9" font-size="19.5" fill="#d4d4d4" text-anchor="end" >-5</text>
<rect x="1227.4" y="569.1" width="212.5" height="2" fill="#9c9c9c"/>
<text x="1226.4" y="577.1" font-size="19.5" fill="#d4d4d4" text-anchor="end" >-10</text>
<rect x="1227.4" y="643.3" width="212.5" height="2" fill="#9c9c9c"/>
<text x="1226.4" y="651.3" font-size="19.5" fill="#d4d4d4" text-anchor="end" >-15</text>
<rect x="1233.4" y="196.8" width="2" height="455.6" fill="#9c9c9c"/>
<rect x="1438.9" y="196.8" width="2" height="455.6" fill="#9c9c9c"/>
<text x="1317.7" y="190.0" font-size="19.5" fill="#d4d4d4" text-anchor="middle" >Delta H</text>
<text x="1337.7" y="667.5" font-size="19.5" fill="#d4d4d4" text-anchor="middle" textLength="51.0" lengthAdjust="spacingAndGlyphs" >100%</text>
<rect x="1256.3" y="395.0" width="160.5" height="28.2" fill="#000"/>
<rect x="1258.3" y="397.0" width="156.5" height="24.2" fill="url(#ybar)"/>
<rect x="630.8" y="690.8" width="836.7" height="230.4" fill="#000"/>
<rect x="659.8" y="701.3" width="141.4" height="188" fill="#f4f4f4"/>
<rect x="661.8" y="703.3" width="137.4" height="93.5" fill="#bec2ae"/>
<rect x="661.8" y="795.8" width="137.4" height="91.5" fill="#c1c0a0"/>
<text x="730.5" y="911.0" font-size="17.0" fill="#f4f4f4" text-anchor="middle" >20%</text>
<rect x="823.4" y="701.3" width="141.4" height="188" fill="#f4f4f4"/>
<rect x="825.4" y="703.3" width="137.4" height="93.5" fill="#c0c38f"/>
<rect x="825.4" y="795.8" width="137.4" height="91.5" fill="#c3c088"/>
<text x="894.1" y="911.0" font-size="17.0" fill="#f4f4f4" text-anchor="middle" >40%</text>
<rect x="987.0" y="701.3" width="141.4" height="188" fill="#f4f4f4"/>
<rect x="989.0" y="703.3" width="137.4" height="93.5" fill="#c0c272"/>
<rect x="989.0" y="795.8" width="137.4" height="91.5" fill="#c0bd6b"/>
<text x="1057.7" y="911.0" font-size="17.0" fill="#f4f4f4" text-anchor="middle" >60%</text>
<rect x="1150.6" y="701.3" width="141.4" height="188" fill="#f4f4f4"/>
<rect x="1152.6" y="703.3" width="137.4" height="93.5" fill="#c1c350"/>
<rect x="1152.6" y="795.8" width="137.4" height="91.5" fill="#c2c04d"/>
<text x="1221.3" y="911.0" font-size="17.0" fill="#f4f4f4" text-anchor="middle" >80%</text>
<rect x="1314.2" y="701.3" width="141.4" height="188" fill="#f4f4f4"/>
<rect x="1316.2" y="703.3" width="137.4" height="93.5" fill="#c4c600"/>
<rect x="1316.2" y="795.8" width="137.4" height="91.5" fill="#c6c300"/>
<text x="1384.9" y="911.0" font-size="17.0" fill="#f4f4f4" text-anchor="middle" >100%</text>
<text transform="translate(649.5 742.5) rotate(-90)" font-size="17" fill="#f4f4f4" text-anchor="middle" textLength="50" lengthAdjust="spacingAndGlyphs">Actual</text>
<text transform="translate(649.5 847) rotate(-90)" font-size="17" fill="#f4f4f4" text-anchor="middle" textLength="48" lengthAdjust="spacingAndGlyphs">Target</text>
<rect x="1482" y="157.3" width="971.5" height="778.5" fill="none" stroke="#c6c400" stroke-width="9.5"/>
<text x="1967.0" y="188.0" font-size="19.5" fill="#d4d4d4" text-anchor="middle" textLength="108.0" lengthAdjust="spacingAndGlyphs" >CIE 1931 xy</text>
<rect x="1528.3" y="195" width="915.7" height="695.3" fill="#232323"/>
<path d="M1743.4 876.9Q1717.9 886.3 1712.2 884.6C1711.9 884.4 1710.9 883.7 1710.1 883.2C1709.2 882.6 1708.4 882.0 1707.3 881.3C1706.3 880.6 1705.2 879.8 1703.7 878.9C1702.3 878.0 1700.7 876.9 1698.8 875.7C1697.0 874.4 1695.0 873.2 1692.7 871.5C1690.5 869.9 1687.9 868.1 1685.1 865.7C1682.3 863.4 1679.5 861.2 1675.9 857.3C1672.2 853.4 1668.1 849.0 1663.4 842.5C1658.7 836.0 1653.6 828.8 1647.7 818.5C1641.7 808.2 1635.1 796.3 1627.7 780.6C1620.3 764.9 1611.4 746.7 1603.1 724.3C1594.8 702.0 1585.9 675.6 1577.7 646.3C1569.5 617.1 1560.6 582.5 1553.9 549.0C1547.1 515.4 1540.8 478.4 1537.2 445.0C1533.7 411.7 1531.5 378.0 1532.5 348.8C1533.6 319.6 1537.1 291.6 1543.4 269.9C1549.8 248.2 1559.7 230.3 1570.7 218.8C1581.6 207.3 1595.5 202.7 1609.2 200.7C1622.9 198.8 1638.1 203.2 1652.7 207.0C1667.3 210.9 1682.5 217.7 1696.8 223.8C1711.1 230.0 1724.8 236.8 1738.4 243.9C1752.0 251.0 1765.1 258.6 1778.3 266.5C1791.6 274.4 1804.7 282.8 1817.8 291.3C1830.8 299.8 1843.8 308.8 1856.7 317.8C1869.7 326.8 1882.6 336.0 1895.6 345.4C1908.6 354.7 1921.6 364.3 1934.6 373.8C1947.6 383.4 1960.5 393.1 1973.4 402.7C1986.3 412.3 1999.2 422.0 2011.9 431.6C2024.6 441.1 2037.3 450.7 2049.7 460.1C2062.1 469.5 2074.4 478.8 2086.4 487.9C2098.4 497.0 2110.2 505.9 2121.6 514.5C2133.0 523.1 2144.1 531.5 2154.7 539.5C2165.2 547.5 2175.5 555.3 2184.9 562.4C2194.3 569.5 2202.9 576.0 2211.1 582.2C2219.3 588.5 2227.1 594.4 2234.2 599.7C2241.2 605.0 2247.6 609.7 2253.4 614.1C2259.1 618.5 2264.3 622.4 2268.9 625.9C2273.6 629.5 2277.6 632.5 2281.3 635.3C2285.1 638.1 2288.3 640.5 2291.3 642.8C2294.2 645.0 2296.8 647.0 2299.2 648.8C2301.6 650.7 2303.8 652.3 2305.8 653.9C2307.9 655.4 2309.7 656.8 2311.3 658.0C2312.9 659.2 2314.4 660.3 2315.6 661.2C2316.9 662.2 2318.0 663.0 2318.9 663.7C2319.9 664.4 2320.7 665.1 2321.4 665.6C2322.1 666.2 2323.0 666.8 2323.3 667.0Z" fill="#000"/>
<g clip-path="url(#locclip)" opacity="0.6"><use href="#cierows"/></g>
<g clip-path="url(#triclip)"><use href="#cierows"/></g>
<path d="M1528.3 195V890.3H2444V195Z" fill="none" stroke="#9c9c9c" stroke-width="2"/>
<rect x="1527.3" y="890.3" width="2" height="8.5" fill="#c8c8c8"/>
<text x="1528.3" y="920.8" font-size="19.5" fill="#d4d4d4" text-anchor="middle" >0</text>
<rect x="1520" y="889.3" width="8.5" height="2" fill="#c8c8c8"/>
<text x="1518.5" y="897.3" font-size="19.5" fill="#d4d4d4" text-anchor="end" >0</text>
<rect x="1636.2" y="890.3" width="2" height="8.5" fill="#c8c8c8"/>
<text x="1637.2" y="920.8" font-size="19.5" fill="#d4d4d4" text-anchor="middle" >0,1</text>
<rect x="1520" y="806.6" width="8.5" height="2" fill="#c8c8c8"/>
<text x="1518.5" y="814.6" font-size="19.5" fill="#d4d4d4" text-anchor="end" >0,1</text>
<rect x="1745.1" y="890.3" width="2" height="8.5" fill="#c8c8c8"/>
<text x="1746.1" y="920.8" font-size="19.5" fill="#d4d4d4" text-anchor="middle" >0,2</text>
<rect x="1520" y="723.9" width="8.5" height="2" fill="#c8c8c8"/>
<text x="1518.5" y="731.9" font-size="19.5" fill="#d4d4d4" text-anchor="end" >0,2</text>
<rect x="1854.0" y="890.3" width="2" height="8.5" fill="#c8c8c8"/>
<text x="1855.0" y="920.8" font-size="19.5" fill="#d4d4d4" text-anchor="middle" >0,3</text>
<rect x="1520" y="641.2" width="8.5" height="2" fill="#c8c8c8"/>
<text x="1518.5" y="649.2" font-size="19.5" fill="#d4d4d4" text-anchor="end" >0,3</text>
<rect x="1962.9" y="890.3" width="2" height="8.5" fill="#c8c8c8"/>
<text x="1963.9" y="920.8" font-size="19.5" fill="#d4d4d4" text-anchor="middle" >0,4</text>
<rect x="1520" y="558.5" width="8.5" height="2" fill="#c8c8c8"/>
<text x="1518.5" y="566.5" font-size="19.5" fill="#d4d4d4" text-anchor="end" >0,4</text>
<rect x="2071.8" y="890.3" width="2" height="8.5" fill="#c8c8c8"/>
<text x="2072.8" y="920.8" font-size="19.5" fill="#d4d4d4" text-anchor="middle" >0,5</text>
<rect x="1520" y="475.8" width="8.5" height="2" fill="#c8c8c8"/>
<text x="1518.5" y="483.8" font-size="19.5" fill="#d4d4d4" text-anchor="end" >0,5</text>
<rect x="2180.7" y="890.3" width="2" height="8.5" fill="#c8c8c8"/>
<text x="2181.7" y="920.8" font-size="19.5" fill="#d4d4d4" text-anchor="middle" >0,6</text>
<rect x="1520" y="393.1" width="8.5" height="2" fill="#c8c8c8"/>
<text x="1518.5" y="401.1" font-size="19.5" fill="#d4d4d4" text-anchor="end" >0,6</text>
<rect x="2289.6" y="890.3" width="2" height="8.5" fill="#c8c8c8"/>
<text x="2290.6" y="920.8" font-size="19.5" fill="#d4d4d4" text-anchor="middle" >0,7</text>
<rect x="1520" y="310.4" width="8.5" height="2" fill="#c8c8c8"/>
<text x="1518.5" y="318.4" font-size="19.5" fill="#d4d4d4" text-anchor="end" >0,7</text>
<rect x="2398.5" y="890.3" width="2" height="8.5" fill="#c8c8c8"/>
<text x="2399.5" y="920.8" font-size="19.5" fill="#d4d4d4" text-anchor="middle" >0,8</text>
<rect x="1520" y="227.7" width="8.5" height="2" fill="#c8c8c8"/>
<text x="1518.5" y="235.7" font-size="19.5" fill="#d4d4d4" text-anchor="end" >0,8</text>
<rect x="2127" y="206" width="306" height="257" fill="#000"/>
<g clip-path="url(#insclip)" opacity="0.6"><use href="#insrows"/></g>
<g clip-path="url(#itriclip)"><g clip-path="url(#insclip)"><use href="#insrows"/></g></g>
<rect x="2125.5" y="204.5" width="309" height="260" fill="none" stroke="#8c8c8c" stroke-width="3"/>
<circle cx="2260.8" cy="312.9" r="5.8" fill="#b8b800" stroke="#000" stroke-width="2"/>
<rect x="2269.6" y="324.4" width="18" height="19" fill="none" stroke="#f4f4f4" stroke-width="2.2"/>
<rect x="1844.5" y="383.9" width="18" height="18" fill="none" stroke="#f4f4f4" stroke-width="2.5"/>
<rect x="1848.5" y="432.0" width="18" height="18" fill="none" stroke="#f4f4f4" stroke-width="2.5"/>
<rect x="1850.3" y="476.4" width="18" height="18" fill="none" stroke="#f4f4f4" stroke-width="2.5"/>
<rect x="1853.8" y="518.4" width="18" height="18" fill="none" stroke="#f4f4f4" stroke-width="2.5"/>
<rect x="1856.0" y="562.2" width="18" height="18" fill="none" stroke="#f4f4f4" stroke-width="2.5"/>
<rect x="1975.6" y="462.4" width="18" height="18" fill="none" stroke="#f4f4f4" stroke-width="2.5"/>
<rect x="1950.4" y="493.4" width="18" height="18" fill="none" stroke="#f4f4f4" stroke-width="2.5"/>
<rect x="1929.7" y="520.7" width="18" height="18" fill="none" stroke="#f4f4f4" stroke-width="2.5"/>
<rect x="1906.0" y="547.6" width="18" height="18" fill="none" stroke="#f4f4f4" stroke-width="2.5"/>
<rect x="1883.2" y="578.3" width="18" height="18" fill="none" stroke="#f4f4f4" stroke-width="2.5"/>
<rect x="2215.5" y="606.9" width="18" height="18" fill="none" stroke="#f4f4f4" stroke-width="2.5"/>
<rect x="2136.4" y="606.9" width="18" height="18" fill="none" stroke="#f4f4f4" stroke-width="2.5"/>
<rect x="2067.8" y="606.9" width="18" height="18" fill="none" stroke="#f4f4f4" stroke-width="2.5"/>
<rect x="2002.4" y="606.9" width="18" height="18" fill="none" stroke="#f4f4f4" stroke-width="2.5"/>
<rect x="1929.5" y="606.9" width="18" height="18" fill="none" stroke="#f4f4f4" stroke-width="2.5"/>
<rect x="1763.2" y="608.8" width="18" height="18" fill="none" stroke="#f4f4f4" stroke-width="2.5"/>
<rect x="1782.8" y="608.8" width="18" height="18" fill="none" stroke="#f4f4f4" stroke-width="2.5"/>
<rect x="1802.3" y="608.8" width="18" height="18" fill="none" stroke="#f4f4f4" stroke-width="2.5"/>
<rect x="1821.6" y="608.8" width="18" height="18" fill="none" stroke="#f4f4f4" stroke-width="2.5"/>
<rect x="1840.6" y="608.8" width="18" height="18" fill="none" stroke="#f4f4f4" stroke-width="2.5"/>
<rect x="1681.0" y="830.6" width="18" height="18" fill="none" stroke="#f4f4f4" stroke-width="2.5"/>
<rect x="1719.4" y="781.9" width="18" height="18" fill="none" stroke="#f4f4f4" stroke-width="2.5"/>
<rect x="1754.0" y="739.4" width="18" height="18" fill="none" stroke="#f4f4f4" stroke-width="2.5"/>
<rect x="1788.6" y="697.3" width="18" height="18" fill="none" stroke="#f4f4f4" stroke-width="2.5"/>
<rect x="1823.6" y="653.2" width="18" height="18" fill="none" stroke="#f4f4f4" stroke-width="2.5"/>
<rect x="1868.0" y="753.6" width="18" height="18" fill="none" stroke="#f4f4f4" stroke-width="2.5"/>
<rect x="1865.5" y="722.6" width="18" height="18" fill="none" stroke="#f4f4f4" stroke-width="2.5"/>
<rect x="1863.6" y="693.4" width="18" height="18" fill="none" stroke="#f4f4f4" stroke-width="2.5"/>
<rect x="1863.6" y="668.4" width="18" height="18" fill="none" stroke="#f4f4f4" stroke-width="2.5"/>
<rect x="1861.4" y="637.5" width="18" height="18" fill="none" stroke="#f4f4f4" stroke-width="2.5"/>
<rect x="1859.4" y="609" width="18" height="18" fill="none" stroke="#000" stroke-width="2.2"/>
<circle cx="1843.9" cy="385.4" r="5.6" fill="#00a000" stroke="#111" stroke-width="2"/>
<circle cx="1845.5" cy="438.7" r="5.6" fill="#6aaa6a" stroke="#111" stroke-width="2"/>
<circle cx="1847.2" cy="490.9" r="5.6" fill="#78ac78" stroke="#111" stroke-width="2"/>
<circle cx="1849.6" cy="538.6" r="5.6" fill="#86b086" stroke="#111" stroke-width="2"/>
<circle cx="1851.2" cy="584.9" r="5.6" fill="#9ab49a" stroke="#111" stroke-width="2"/>
<circle cx="1980.5" cy="468.0" r="5.6" fill="#b8b800" stroke="#111" stroke-width="2"/>
<circle cx="1953.1" cy="502.5" r="5.6" fill="#b4b46a" stroke="#111" stroke-width="2"/>
<circle cx="1928.4" cy="535.0" r="5.6" fill="#bcbc88" stroke="#111" stroke-width="2"/>
<circle cx="1903.4" cy="568.0" r="5.6" fill="#c0c09a" stroke="#111" stroke-width="2"/>
<circle cx="1878.6" cy="598.5" r="5.6" fill="#c0c0a8" stroke="#111" stroke-width="2"/>
<circle cx="2222.5" cy="613.9" r="5.6" fill="#c80000" stroke="#111" stroke-width="2"/>
<circle cx="2149.3" cy="617.9" r="5.6" fill="#c04848" stroke="#111" stroke-width="2"/>
<circle cx="2070.9" cy="622.0" r="5.6" fill="#b86a6a" stroke="#111" stroke-width="2"/>
<circle cx="1999.6" cy="625.5" r="5.6" fill="#b88888" stroke="#111" stroke-width="2"/>
<circle cx="1922.6" cy="629.4" r="5.6" fill="#b89a9a" stroke="#111" stroke-width="2"/>
<circle cx="1757.4" cy="633.0" r="5.6" fill="#00aaaa" stroke="#111" stroke-width="2"/>
<circle cx="1776.2" cy="633.0" r="5.6" fill="#60acac" stroke="#111" stroke-width="2"/>
<circle cx="1795.3" cy="631.3" r="5.6" fill="#84b0b0" stroke="#111" stroke-width="2"/>
<circle cx="1816.9" cy="631.3" r="5.6" fill="#98b4b4" stroke="#111" stroke-width="2"/>
<circle cx="1833.9" cy="629.6" r="5.6" fill="#a8b8b0" stroke="#111" stroke-width="2"/>
<circle cx="1682.3" cy="846.4" r="5.6" fill="#0010c8" stroke="#111" stroke-width="2"/>
<circle cx="1717.0" cy="806.4" r="5.6" fill="#5858b8" stroke="#111" stroke-width="2"/>
<circle cx="1749.6" cy="761.7" r="5.6" fill="#7070b0" stroke="#111" stroke-width="2"/>
<circle cx="1783.8" cy="719.7" r="5.6" fill="#8c8cb0" stroke="#111" stroke-width="2"/>
<circle cx="1818.8" cy="675.3" r="5.6" fill="#a0a0b0" stroke="#111" stroke-width="2"/>
<circle cx="1860.9" cy="769.9" r="5.6" fill="#b000b0" stroke="#111" stroke-width="2"/>
<circle cx="1858.8" cy="742.6" r="5.6" fill="#b860b8" stroke="#111" stroke-width="2"/>
<circle cx="1857.4" cy="713.9" r="5.6" fill="#b880b8" stroke="#111" stroke-width="2"/>
<circle cx="1857.4" cy="688.7" r="5.6" fill="#b894b8" stroke="#111" stroke-width="2"/>
<circle cx="1855.3" cy="660.3" r="5.6" fill="#b8a4b8" stroke="#111" stroke-width="2"/>
<circle cx="1857.3" cy="623.4" r="5.6" fill="#fff" stroke="#111" stroke-width="2"/>
<text x="122.0" y="1023.5" font-size="40.0" fill="#f2f2f2" textLength="309.0" lengthAdjust="spacingAndGlyphs" stroke="#f2f2f2" stroke-width="0.5">Current Reading</text>
<text x="122.0" y="1083.7" font-size="35.0" fill="#f2f2f2" textLength="144.0" lengthAdjust="spacingAndGlyphs" stroke="#f2f2f2" stroke-width="0.5">x: 0,4163</text>
<text x="122.0" y="1140.8" font-size="35.0" fill="#f2f2f2" textLength="145.0" lengthAdjust="spacingAndGlyphs" stroke="#f2f2f2" stroke-width="0.5">y: 0,5095</text>
<text x="122.0" y="1198.3" font-size="35.0" fill="#f2f2f2" textLength="135.0" lengthAdjust="spacingAndGlyphs" stroke="#f2f2f2" stroke-width="0.5">fL: 77,45</text>
<text x="122.0" y="1255.3" font-size="35.0" fill="#f2f2f2" textLength="224.0" lengthAdjust="spacingAndGlyphs" stroke="#f2f2f2" stroke-width="0.5">cd/m&#178;: 265,35</text>
<text x="760.0" y="988.5" font-size="19.5" fill="#d4d4d4" text-anchor="middle" textLength="117.0" lengthAdjust="spacingAndGlyphs" >RGB Balance</text>
<rect x="604.7" y="995.1" width="354.5" height="254.4" fill="#232323"/>
<rect x="598.7" y="1021.3" width="360.5" height="2" fill="#9c9c9c"/>
<text x="596.7" y="1029.3" font-size="19.5" fill="#d4d4d4" text-anchor="end" textLength="35.0" lengthAdjust="spacingAndGlyphs" >104</text>
<rect x="598.7" y="1072.2" width="360.5" height="2" fill="#9c9c9c"/>
<text x="596.7" y="1080.2" font-size="19.5" fill="#d4d4d4" text-anchor="end" textLength="35.0" lengthAdjust="spacingAndGlyphs" >102</text>
<rect x="598.7" y="1123.1" width="360.5" height="2" fill="#9c9c9c"/>
<text x="596.7" y="1131.1" font-size="19.5" fill="#d4d4d4" text-anchor="end" textLength="35.0" lengthAdjust="spacingAndGlyphs" >100</text>
<rect x="598.7" y="1174.0" width="360.5" height="2" fill="#9c9c9c"/>
<text x="596.7" y="1182.0" font-size="19.5" fill="#d4d4d4" text-anchor="end" textLength="35.0" lengthAdjust="spacingAndGlyphs" >98</text>
<rect x="598.7" y="1224.9" width="360.5" height="2" fill="#9c9c9c"/>
<text x="596.7" y="1232.9" font-size="19.5" fill="#d4d4d4" text-anchor="end" textLength="35.0" lengthAdjust="spacingAndGlyphs" >96</text>
<rect x="640.0" y="1135.0" width="92.5" height="114.5" fill="url(#rbar)" stroke="#000" stroke-width="2"/>
<rect x="732.5" y="1097.3" width="93.9" height="152.2" fill="url(#gbar)" stroke="#000" stroke-width="2"/>
<rect x="826.4" y="1175.7" width="94.0" height="73.8" fill="url(#bbar)" stroke="#000" stroke-width="2"/>
<path d="M604.7 995.1V1249.5H959.2V995.1Z" fill="none" stroke="#9c9c9c" stroke-width="2"/>
<rect x="603.7" y="1249.5" width="2" height="8" fill="#9c9c9c"/>
<rect x="958.2" y="1249.5" width="2" height="8" fill="#9c9c9c"/>
<text x="782.5" y="1272.0" font-size="19.5" fill="#d4d4d4" text-anchor="middle" textLength="51.0" lengthAdjust="spacingAndGlyphs" >100%</text>
<rect x="985.6" y="958.5" width="1033.4" height="290" fill="#080808"/>
<rect x="988.6" y="960.3" width="1027.8" height="45.3" fill="url(#thead)"/>
<text x="1339.4" y="992.4" font-size="22.0" fill="#f0f0f0" text-anchor="middle" textLength="56.0" lengthAdjust="spacingAndGlyphs" stroke="#f0f0f0" stroke-width="0.5">20%</text>
<text x="1489.8" y="992.4" font-size="22.0" fill="#f0f0f0" text-anchor="middle" textLength="56.0" lengthAdjust="spacingAndGlyphs" stroke="#f0f0f0" stroke-width="0.5">40%</text>
<text x="1640.2" y="992.4" font-size="22.0" fill="#f0f0f0" text-anchor="middle" textLength="56.0" lengthAdjust="spacingAndGlyphs" stroke="#f0f0f0" stroke-width="0.5">60%</text>
<text x="1790.6" y="992.4" font-size="22.0" fill="#f0f0f0" text-anchor="middle" textLength="56.0" lengthAdjust="spacingAndGlyphs" stroke="#f0f0f0" stroke-width="0.5">80%</text>
<text x="1941.0" y="992.4" font-size="22.0" fill="#f0f0f0" text-anchor="middle" textLength="72.0" lengthAdjust="spacingAndGlyphs" stroke="#f0f0f0" stroke-width="0.5">100%</text>
<rect x="988.6" y="1005.6" width="1027.8" height="40.3" fill="url(#trd)"/>
<text x="1015.0" y="1034.4" font-size="23.0" fill="#f4f4f4" textLength="121.0" lengthAdjust="spacingAndGlyphs" font-weight="bold" >x: CIE31</text>
<text x="1272.5" y="1034.4" font-size="24.0" fill="#ececec" textLength="96.0" lengthAdjust="spacingAndGlyphs" >0,3216</text>
<text x="1422.9" y="1034.4" font-size="24.0" fill="#ececec" textLength="96.0" lengthAdjust="spacingAndGlyphs" >0,3446</text>
<text x="1573.3" y="1034.4" font-size="24.0" fill="#ececec" textLength="96.0" lengthAdjust="spacingAndGlyphs" >0,3679</text>
<text x="1723.7" y="1034.4" font-size="24.0" fill="#ececec" textLength="96.0" lengthAdjust="spacingAndGlyphs" >0,3910</text>
<text x="1874.1" y="1034.4" font-size="24.0" fill="#ececec" textLength="96.0" lengthAdjust="spacingAndGlyphs" >0,4163</text>
<rect x="988.6" y="1045.8" width="1027.8" height="40.3" fill="url(#trl)"/>
<text x="1015.0" y="1074.6" font-size="23.0" fill="#f4f4f4" textLength="121.0" lengthAdjust="spacingAndGlyphs" font-weight="bold" >y: CIE31</text>
<text x="1272.5" y="1074.6" font-size="24.0" fill="#ececec" textLength="96.0" lengthAdjust="spacingAndGlyphs" >0,3504</text>
<text x="1422.9" y="1074.6" font-size="24.0" fill="#ececec" textLength="96.0" lengthAdjust="spacingAndGlyphs" >0,3890</text>
<text x="1573.3" y="1074.6" font-size="24.0" fill="#ececec" textLength="96.0" lengthAdjust="spacingAndGlyphs" >0,4280</text>
<text x="1723.7" y="1074.6" font-size="24.0" fill="#ececec" textLength="96.0" lengthAdjust="spacingAndGlyphs" >0,4668</text>
<text x="1874.1" y="1074.6" font-size="24.0" fill="#ececec" textLength="96.0" lengthAdjust="spacingAndGlyphs" >0,5095</text>
<rect x="988.6" y="1085.9" width="1027.8" height="40.3" fill="url(#trd)"/>
<text x="1015.0" y="1114.7" font-size="23.0" fill="#f4f4f4" textLength="17.0" lengthAdjust="spacingAndGlyphs" font-weight="bold" >Y</text>
<text x="1272.5" y="1114.7" font-size="24.0" fill="#ececec" textLength="132.0" lengthAdjust="spacingAndGlyphs" >279,8042</text>
<text x="1422.9" y="1114.7" font-size="24.0" fill="#ececec" textLength="132.0" lengthAdjust="spacingAndGlyphs" >275,0924</text>
<text x="1573.3" y="1114.7" font-size="24.0" fill="#ececec" textLength="132.0" lengthAdjust="spacingAndGlyphs" >271,2921</text>
<text x="1723.7" y="1114.7" font-size="24.0" fill="#ececec" textLength="132.0" lengthAdjust="spacingAndGlyphs" >268,1934</text>
<text x="1874.1" y="1114.7" font-size="24.0" fill="#ececec" textLength="132.0" lengthAdjust="spacingAndGlyphs" >265,3545</text>
<rect x="988.6" y="1126.1" width="1027.8" height="40.3" fill="url(#trl)"/>
<text x="1015.0" y="1154.9" font-size="23.0" fill="#f4f4f4" textLength="221.0" lengthAdjust="spacingAndGlyphs" font-weight="bold" >Target x:CIE31</text>
<text x="1272.5" y="1154.9" font-size="24.0" fill="#ececec" textLength="96.0" lengthAdjust="spacingAndGlyphs" >0,3344</text>
<text x="1422.9" y="1154.9" font-size="24.0" fill="#ececec" textLength="96.0" lengthAdjust="spacingAndGlyphs" >0,3564</text>
<text x="1573.3" y="1154.9" font-size="24.0" fill="#ececec" textLength="96.0" lengthAdjust="spacingAndGlyphs" >0,3773</text>
<text x="1723.7" y="1154.9" font-size="24.0" fill="#ececec" textLength="96.0" lengthAdjust="spacingAndGlyphs" >0,3969</text>
<text x="1874.1" y="1154.9" font-size="24.0" fill="#ececec" textLength="96.0" lengthAdjust="spacingAndGlyphs" >0,4193</text>
<rect x="988.6" y="1166.3" width="1027.8" height="40.3" fill="url(#trd)"/>
<text x="1015.0" y="1195.1" font-size="23.0" fill="#f4f4f4" textLength="221.0" lengthAdjust="spacingAndGlyphs" font-weight="bold" >Target y:CIE31</text>
<text x="1272.5" y="1195.1" font-size="24.0" fill="#ececec" textLength="96.0" lengthAdjust="spacingAndGlyphs" >0,3648</text>
<text x="1422.9" y="1195.1" font-size="24.0" fill="#ececec" textLength="96.0" lengthAdjust="spacingAndGlyphs" >0,4013</text>
<text x="1573.3" y="1195.1" font-size="24.0" fill="#ececec" textLength="96.0" lengthAdjust="spacingAndGlyphs" >0,4358</text>
<text x="1723.7" y="1195.1" font-size="24.0" fill="#ececec" textLength="96.0" lengthAdjust="spacingAndGlyphs" >0,4682</text>
<text x="1874.1" y="1195.1" font-size="24.0" fill="#ececec" textLength="96.0" lengthAdjust="spacingAndGlyphs" >0,5053</text>
<rect x="988.6" y="1206.5" width="1027.8" height="40.3" fill="url(#trl)"/>
<text x="1015.0" y="1235.2" font-size="23.0" fill="#f4f4f4" textLength="127.0" lengthAdjust="spacingAndGlyphs" font-weight="bold" >Target Y</text>
<text x="1272.5" y="1235.2" font-size="24.0" fill="#ececec" textLength="132.0" lengthAdjust="spacingAndGlyphs" >273,5413</text>
<text x="1422.9" y="1235.2" font-size="24.0" fill="#ececec" textLength="132.0" lengthAdjust="spacingAndGlyphs" >268,7398</text>
<text x="1573.3" y="1235.2" font-size="24.0" fill="#ececec" textLength="132.0" lengthAdjust="spacingAndGlyphs" >265,0506</text>
<text x="1723.7" y="1235.2" font-size="24.0" fill="#ececec" textLength="132.0" lengthAdjust="spacingAndGlyphs" >262,1553</text>
<text x="1874.1" y="1235.2" font-size="24.0" fill="#ececec" textLength="132.0" lengthAdjust="spacingAndGlyphs" >259,3562</text>
<rect x="0" y="1286.5" width="2549" height="93.5" fill="url(#botg)"/>
<rect x="2.4" y="1287" width="66" height="93" rx="4" fill="url(#swb)"/>
<circle cx="35" cy="1299.5" r="10.5" fill="url(#cgc)"/>
<path d="M29 1302.5H41L35 1296.5Z" fill="#222"/>
<rect x="10" y="1327" width="51.5" height="44" rx="4" fill="#ffff00" stroke="#b8b800" stroke-width="1"/>
<rect x="78.2" y="1287" width="224.3" height="93" rx="4" fill="url(#swb)"/>
<rect x="86.9" y="1296.5" width="208.4" height="51.7" rx="5" fill="#c2c2a6" stroke="#8a8a40" stroke-width="1.5"/>
<text x="190.6" y="1372.0" font-size="15.5" fill="#333" text-anchor="middle" font-weight="bold" >20%</text>
<rect x="306.2" y="1287" width="224.3" height="93" rx="4" fill="url(#swb)"/>
<rect x="314.9" y="1296.5" width="208.4" height="51.7" rx="5" fill="#c3c388" stroke="#8a8a40" stroke-width="1.5"/>
<text x="418.6" y="1372.0" font-size="15.5" fill="#333" text-anchor="middle" font-weight="bold" >40%</text>
<rect x="534.2" y="1287" width="224.3" height="93" rx="4" fill="url(#swb)"/>
<rect x="542.9" y="1296.5" width="208.4" height="51.7" rx="5" fill="#c1c068" stroke="#8a8a40" stroke-width="1.5"/>
<text x="646.6" y="1372.0" font-size="15.5" fill="#333" text-anchor="middle" font-weight="bold" >60%</text>
<rect x="762.2" y="1287" width="224.3" height="93" rx="4" fill="url(#swb)"/>
<rect x="770.9" y="1296.5" width="208.4" height="51.7" rx="5" fill="#c2c24a" stroke="#8a8a40" stroke-width="1.5"/>
<text x="874.6" y="1372.0" font-size="15.5" fill="#333" text-anchor="middle" font-weight="bold" >80%</text>
<rect x="990.2" y="1287" width="224.3" height="93" rx="4" fill="url(#swbsel)"/>
<rect x="998.9" y="1295.0" width="208.4" height="54.0" rx="5" fill="#c6c400" stroke="#9a9800" stroke-width="1.5"/>
<text x="1102.6" y="1372.0" font-size="15.5" fill="#fff" text-anchor="middle" font-weight="bold" >100%</text>
<rect x="2075.3" y="1286.7" width="73" height="93" rx="5" fill="url(#swb)"/>
<rect x="2075.3" y="1314" width="73" height="1.2" fill="#333"/>
<circle cx="2111.5" cy="1300" r="11" fill="url(#cgc)"/>
<path d="M2105 1302.5H2118L2111.5 1296Z" fill="#222"/>
<rect x="2090" y="1323.5" width="44" height="45" rx="5" fill="#a0a0a0" stroke="#1a1a1a" stroke-width="3"/>
<rect x="2101.5" y="1336.5" width="21" height="20" fill="#000"/>
<rect x="2148.3" y="1287" width="339.5" height="44.8" fill="url(#ctl)"/>
<rect x="2218.3" y="1287" width="1.5" height="45" fill="#3a3a3a"/>
<rect x="2286.0" y="1287" width="1.5" height="45" fill="#3a3a3a"/>
<rect x="2353.6" y="1287" width="1.5" height="45" fill="#3a3a3a"/>
<rect x="2421.8" y="1287" width="1.5" height="45" fill="#3a3a3a"/>
<rect x="2487.8" y="1287" width="61.2" height="45" fill="#2a2a2a"/>
<circle cx="2523" cy="1309" r="14" fill="#222"/>
<circle cx="2183.3" cy="1309.5" r="14.5" fill="url(#cgc)"/>
<circle cx="2252.2" cy="1309.5" r="14.5" fill="url(#cgc)"/>
<circle cx="2320.0" cy="1309.5" r="14.5" fill="url(#cgc)"/>
<circle cx="2387.7" cy="1309.5" r="14.5" fill="url(#cgc)"/>
<circle cx="2455.0" cy="1309.5" r="14.5" fill="url(#cgc)"/>
<rect x="2177" y="1303.5" width="11.5" height="11.5" fill="#2a2a2a"/>
<path d="M2248 1302.5V1317L2260 1309.7Z" fill="#2a2a2a"/>
<path d="M2316 1302H2313.5V1317H2316M2324 1302H2326.5V1317H2324M2318 1309.5H2319.5M2320.5 1309.5H2322" fill="none" stroke="#2a2a2a" stroke-width="2"/>
<path d="M2387.7 1309.5C2384 1305 2379 1305 2379 1309.5C2379 1314 2384 1314 2387.7 1309.5C2391.5 1305 2396.5 1305 2396.5 1309.5C2396.5 1314 2391.5 1314 2387.7 1309.5Z" fill="none" stroke="#2a2a2a" stroke-width="2.3"/>
<path d="M2449 1307A7 7 0 0 1 2461 1306M2461 1312A7 7 0 0 1 2449 1313" fill="none" stroke="#2a2a2a" stroke-width="2.5"/><path d="M2458 1301L2463 1307L2456 1308Z M2452 1318L2447 1312L2454 1311Z" fill="#2a2a2a"/>
<rect x="2148.3" y="1333.3" width="400.7" height="46.7" fill="url(#ctl)"/>
<rect x="2353" y="1333.3" width="1.5" height="46.7" fill="#3a3a3a"/>
<circle cx="2195.5" cy="1356.5" r="14.5" fill="url(#cgc)"/>
<circle cx="2514.0" cy="1356.5" r="14.5" fill="url(#cgc)"/>
<text x="2195.5" y="1363.5" font-size="24.0" fill="#2a2a2a" text-anchor="middle" >&#171;</text>
<text x="2514.0" y="1363.5" font-size="24.0" fill="#2a2a2a" text-anchor="middle" >&#187;</text>
<text x="2235.6" y="1368.3" font-size="33.0" fill="#2e2e2e" textLength="75.0" lengthAdjust="spacingAndGlyphs" font-weight="bold" >Back</text>
<text x="2395.9" y="1368.3" font-size="33.0" fill="#2e2e2e" textLength="77.0" lengthAdjust="spacingAndGlyphs" font-weight="bold" >Next</text></svg></body></html>
